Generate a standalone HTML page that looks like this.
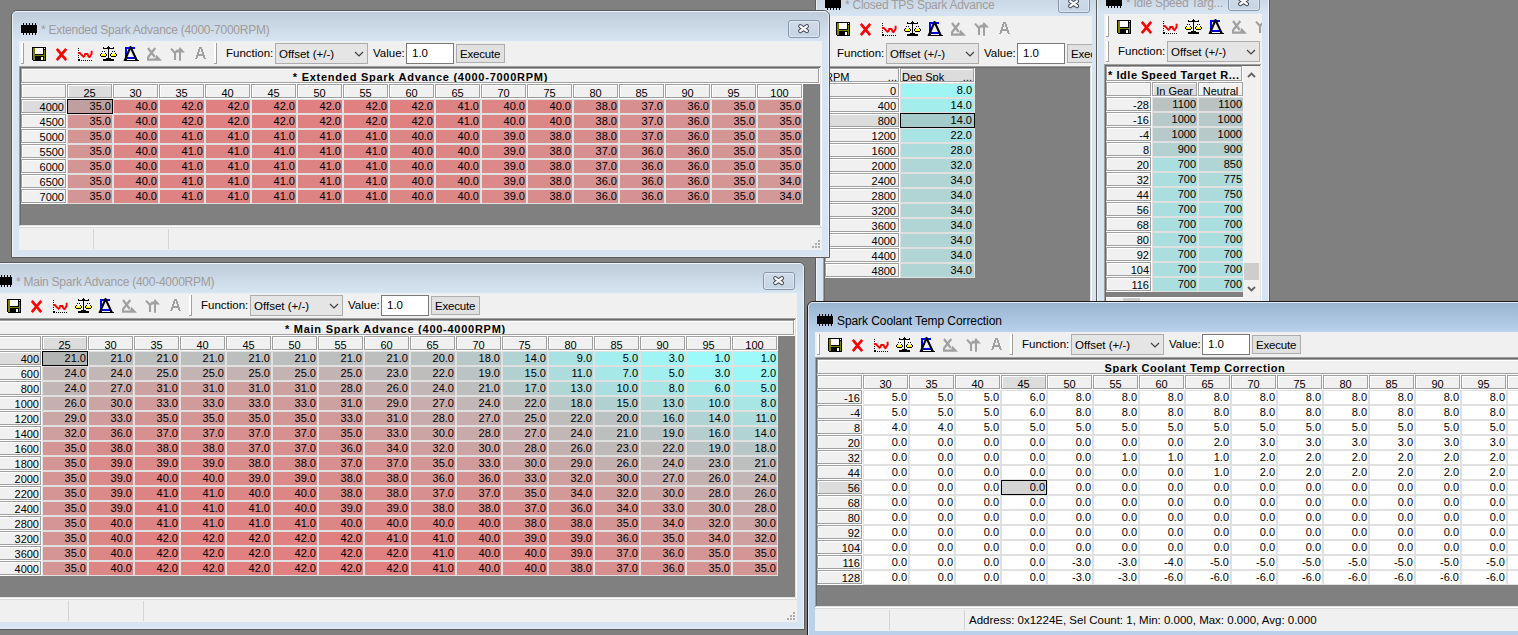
<!DOCTYPE html><html><head><meta charset="utf-8"><style>html,body{margin:0;padding:0}body{width:1518px;height:635px;overflow:hidden;position:relative;background:#808080;font-family:"Liberation Sans",sans-serif}</style></head><body>
<svg width="0" height="0" style="position:absolute">
<defs>
<symbol id="i-save" viewBox="0 0 16 16" shape-rendering="crispEdges">
 <rect x="1" y="1" width="14" height="14" fill="#000"/>
 <rect x="2" y="2" width="2" height="12" fill="#808000"/>
 <rect x="13" y="4" width="1" height="10" fill="#808000"/>
 <rect x="2" y="9" width="12" height="1" fill="#808000"/>
 <rect x="4" y="2" width="8" height="6" fill="#fff"/>
 <rect x="13" y="2" width="1" height="1" fill="#fff"/>
 <rect x="10" y="11" width="2" height="3" fill="#fff"/>
 <rect x="1" y="14" width="1" height="1" fill="#fff"/>
</symbol>
<symbol id="i-del" viewBox="0 0 16 16">
 <path d="M2.8 2.8 L12.2 14.2 M12.2 2.8 L2.8 14.2" stroke="#ff0000" stroke-width="2.6" fill="none"/>
</symbol>
<symbol id="i-graph" viewBox="0 0 16 16" shape-rendering="crispEdges">
 <g fill="#000">
 <rect x="1" y="2" width="1" height="1"/><rect x="1" y="4" width="1" height="1"/>
 <rect x="1" y="9" width="1" height="1"/><rect x="1" y="11" width="1" height="1"/>
 <rect x="1" y="13" width="2" height="2"/>
 <rect x="4" y="14" width="1" height="1"/><rect x="6" y="14" width="1" height="1"/>
 <rect x="8" y="14" width="1" height="1"/><rect x="10" y="14" width="1" height="1"/>
 <rect x="12" y="14" width="1" height="1"/><rect x="14" y="14" width="1" height="1"/>
 </g>
 <path d="M1 7 L2.8 7 L6.5 10.8 L7.6 10 L8.2 8 L10.5 8 L11.5 10.5 L12.6 11 L14.6 8 L14.6 4.8" stroke="#ff0000" stroke-width="1.9" fill="none" shape-rendering="auto"/>
</symbol>
<symbol id="i-scale" viewBox="0 0 17 16" shape-rendering="crispEdges">
 <g fill="#000">
 <rect x="8" y="0" width="1" height="14"/>
 <rect x="7" y="1" width="3" height="1"/>
 <rect x="3" y="2" width="11" height="1"/>
 <rect x="3" y="1" width="1" height="2"/><rect x="13" y="1" width="1" height="2"/>
 <rect x="2" y="5" width="1" height="1"/><rect x="4" y="5" width="1" height="1"/>
 <rect x="12" y="5" width="1" height="1"/><rect x="14" y="5" width="1" height="1"/>
 <rect x="1" y="7" width="1" height="1"/><rect x="5" y="7" width="1" height="1"/>
 <rect x="11" y="7" width="1" height="1"/><rect x="15" y="7" width="1" height="1"/>
 <rect x="0" y="8" width="1" height="2"/><rect x="6" y="8" width="1" height="2"/>
 <rect x="10" y="8" width="1" height="2"/><rect x="16" y="8" width="1" height="2"/>
 <rect x="1" y="10" width="5" height="1"/><rect x="11" y="10" width="5" height="1"/>
 <rect x="6" y="12" width="5" height="1"/>
 <rect x="3" y="13" width="11" height="2"/>
 </g>
 <rect x="1" y="8" width="5" height="2" fill="#ffff00"/>
 <rect x="11" y="8" width="5" height="2" fill="#ffff00"/>
 <rect x="3" y="8" width="1" height="1" fill="#fff"/>
 <rect x="13" y="8" width="1" height="1" fill="#fff"/>
</symbol>
<symbol id="i-delta" viewBox="0 0 16 16" shape-rendering="crispEdges">
 <rect x="2" y="1" width="10" height="2" fill="#0000ff"/>
 <rect x="2" y="1" width="2" height="11" fill="#0000ff"/>
 <rect x="4" y="11" width="8" height="2" fill="#0000ff"/>
 <path d="M2 13.8 L7.5 1 L13.5 13.8 Z" stroke="#000" stroke-width="2.1" fill="none" shape-rendering="auto" stroke-linejoin="miter"/>
 <rect x="1" y="14" width="15" height="1" fill="#000"/>
 <rect x="4" y="13" width="8" height="1" fill="#fff"/>
</symbol>
<symbol id="i-gx" viewBox="0 0 16 16">
 <path d="M2 2 L8.8 11 M9.3 2 L2.2 11" stroke="#a0a0a0" stroke-width="2.2" fill="none"/>
 <path d="M1 10.5 L3 10.5 L3 12.6 L9.2 12.6 L10.3 8.8 L16 14.8 L1 14.8 Z" fill="#a0a0a0"/>
</symbol>
<symbol id="i-gy" viewBox="0 0 16 16">
 <path d="M2 2.6 L6 7 L6 14 M6 7 L8.8 4" stroke="#a0a0a0" stroke-width="2.1" fill="none"/>
 <path d="M10.8 1 L16 6.6 L12 6.6 L12 14.8 L10 14.8 L10 6.6 L7.8 6.6 Z" fill="#a0a0a0"/>
</symbol>
<symbol id="i-ga" viewBox="0 0 16 16" shape-rendering="crispEdges">
 <g fill="#a0a0a0">
 <rect x="7" y="1" width="3" height="2"/>
 <rect x="6" y="3" width="2" height="3"/><rect x="9" y="3" width="2" height="3"/>
 <rect x="5" y="6" width="2" height="3"/><rect x="10" y="6" width="2" height="3"/>
 <rect x="5" y="8" width="7" height="2"/>
 <rect x="4" y="9" width="2" height="3"/><rect x="11" y="9" width="2" height="3"/>
 <rect x="3" y="12" width="2" height="1"/><rect x="12" y="12" width="2" height="1"/>
 </g>
</symbol>
<symbol id="i-chip" viewBox="0 0 16 12" shape-rendering="crispEdges">
 <rect x="0" y="2" width="16" height="8" fill="#000"/>
 <g fill="#000">
 <rect x="2" y="0" width="1" height="2"/><rect x="5" y="0" width="1" height="2"/><rect x="8" y="0" width="1" height="2"/><rect x="11" y="0" width="1" height="2"/><rect x="14" y="0" width="1" height="2"/>
 <rect x="2" y="10" width="1" height="2"/><rect x="5" y="10" width="1" height="2"/><rect x="8" y="10" width="1" height="2"/><rect x="11" y="10" width="1" height="2"/><rect x="14" y="10" width="1" height="2"/>
 </g>
</symbol>
</defs>
</svg>
<div style="position:absolute;left:0;top:0;width:1518px;height:635px;overflow:hidden"><div style="position:absolute;left:815px;top:-15px;width:285px;height:420px;box-sizing:border-box;border:1px solid #5a5a5a;border-radius:6px 6px 0 0;background:#d7e4f2;overflow:hidden"><div style="position:absolute;left:0px;top:0px;width:283px;height:418px;box-sizing:border-box;border:1px solid rgba(255,255,255,0.6);border-radius:5px 5px 0 0;background:linear-gradient(#bfcddb,#d7e4f2 29px,#d7e4f2 29px)"></div></div><svg style="position:absolute;left:825px;top:-2px" width="16" height="12"><use href="#i-chip"/></svg><div style="position:absolute;left:845px;top:-2px;white-space:nowrap;font:12px 'Liberation Sans', sans-serif;color:#a09c9c;line-height:14px;letter-spacing:-0.25px">* Closed TPS Spark Advance</div><div style="position:absolute;left:1058px;top:-5px;width:32px;height:18px;box-sizing:border-box;border:1px solid #8696ad;border-radius:3px;background:linear-gradient(#cfdbe7,#c6d4e3)"><div style="position:absolute;left:0px;top:0px;width:30px;height:16px;box-sizing:border-box;border:1px solid rgba(255,255,255,0.4);border-radius:2px"></div></div><svg style="position:absolute;left:1067px;top:-2px" width="14" height="12"><path d="M3.3 3.2 L9.9 8 M9.9 3.2 L3.3 8" stroke="#3c4450" stroke-width="4.2" stroke-linecap="round"/><path d="M3.3 3.2 L9.9 8 M9.9 3.2 L3.3 8" stroke="#f6f6f6" stroke-width="2.3" stroke-linecap="round"/></svg><div style="position:absolute;left:823px;top:16px;width:269px;height:381px;background:#f0f0f0"></div><div style="position:absolute;left:0;top:0;width:1518px;height:635px;clip-path:inset(16px 426px 238px 823px)"><div style="position:absolute;left:825px;top:18px;width:2px;height:20px;background:#fff"></div><div style="position:absolute;left:827px;top:18px;width:1px;height:21px;background:#a0a0a0"></div><div style="position:absolute;left:825px;top:38px;width:3px;height:1px;background:#a0a0a0"></div><svg style="position:absolute;left:835px;top:21px" width="16" height="16"><use href="#i-save"/></svg><svg style="position:absolute;left:858px;top:21px" width="16" height="16"><use href="#i-del"/></svg><svg style="position:absolute;left:881px;top:21px" width="16" height="16"><use href="#i-graph"/></svg><svg style="position:absolute;left:904px;top:21px" width="17" height="16"><use href="#i-scale"/></svg><svg style="position:absolute;left:927px;top:21px" width="16" height="16"><use href="#i-delta"/></svg><svg style="position:absolute;left:950px;top:21px" width="16" height="16"><use href="#i-gx"/></svg><svg style="position:absolute;left:973px;top:21px" width="16" height="16"><use href="#i-gy"/></svg><svg style="position:absolute;left:996px;top:21px" width="16" height="16"><use href="#i-ga"/></svg><div style="position:absolute;left:825px;top:43px;width:2px;height:20px;background:#fff"></div><div style="position:absolute;left:827px;top:43px;width:1px;height:21px;background:#a0a0a0"></div><div style="position:absolute;left:825px;top:63px;width:3px;height:1px;background:#a0a0a0"></div><div style="position:absolute;left:837px;top:46px;white-space:nowrap;font:11.5px 'Liberation Sans', sans-serif;color:#000;line-height:14px">Function:</div><div style="position:absolute;left:886px;top:43px;width:93px;height:21px;box-sizing:border-box;border:1px solid #acacac;background:#e5e5e5"></div><div style="position:absolute;left:890px;top:47px;white-space:nowrap;font:11.5px 'Liberation Sans', sans-serif;color:#000;line-height:14px">Offset (+/-)</div><svg style="position:absolute;left:965px;top:51px" width="10" height="6"><path d="M1 1 L5 5 L9 1" stroke="#404040" stroke-width="1.2" fill="none"/></svg><div style="position:absolute;left:984px;top:46px;white-space:nowrap;font:11.5px 'Liberation Sans', sans-serif;color:#000;line-height:14px">Value:</div><div style="position:absolute;left:1017px;top:43px;width:48px;height:21px;box-sizing:border-box;border:1px solid #7a7a7a;background:#fff"></div><div style="position:absolute;left:1023px;top:46px;white-space:nowrap;font:11.5px 'Liberation Sans', sans-serif;color:#000;line-height:14px">1.0</div><div style="position:absolute;left:1067px;top:44px;width:49px;height:19px;box-sizing:border-box;border:1px solid #adadad;background:#e1e1e1"></div><div style="position:absolute;left:1071px;top:47px;white-space:nowrap;font:11.5px 'Liberation Sans', sans-serif;color:#000;line-height:14px;letter-spacing:-0.2px">Execute</div><div style="position:absolute;left:823px;top:66px;width:269px;height:308px;background:#808080"></div><div style="position:absolute;left:823px;top:66px;width:269px;height:1px;background:#a0a0a0"></div><div style="position:absolute;left:823px;top:67px;width:268px;height:1px;background:#696969"></div><div style="position:absolute;left:823px;top:66px;width:1px;height:308px;background:#a0a0a0"></div><div style="position:absolute;left:824px;top:67px;width:1px;height:307px;background:#696969"></div><div style="position:absolute;left:824px;top:372px;width:268px;height:1px;background:#e3e3e3"></div><div style="position:absolute;left:823px;top:373px;width:269px;height:1px;background:#ffffff"></div><div style="position:absolute;left:1090px;top:67px;width:1px;height:307px;background:#e3e3e3"></div><div style="position:absolute;left:1091px;top:66px;width:1px;height:308px;background:#ffffff"></div><div style="position:absolute;left:825px;top:68px;width:150px;height:15px;background:#fff"></div><div style="position:absolute;left:825px;top:68px;width:74px;height:14px;box-sizing:border-box;border:1px solid #a0a0a0;background:#f0f0f0;overflow:hidden"><div style="position:absolute;left:0px;top:0px;width:72px;height:12px;box-sizing:border-box;border-left:1px solid #fff;border-top:1px solid #fff"></div><div style="position:absolute;left:-1px;top:1px;font:11px 'Liberation Sans', sans-serif;line-height:15px">RPM</div><div style="position:absolute;right:1px;top:1px;font:11px 'Liberation Sans', sans-serif;line-height:15px">...</div></div><div style="position:absolute;left:900px;top:68px;width:74px;height:14px;box-sizing:border-box;border:1px solid #a0a0a0;background:#dcdcdc;overflow:hidden"><div style="position:absolute;left:0px;top:0px;width:72px;height:12px;box-sizing:border-box;border-left:1px solid #fff;border-top:1px solid #fff"></div><div style="position:absolute;left:1px;top:1px;font:11px 'Liberation Sans', sans-serif;line-height:15px">Deg Spk</div><div style="position:absolute;right:1px;top:1px;font:11px 'Liberation Sans', sans-serif;line-height:15px">...</div></div><div style="position:absolute;left:825px;top:83px;width:75px;height:195px;background:#fff"></div><div style="position:absolute;left:900px;top:83px;width:75px;height:195px;background:#e0e0e0"></div><div style="position:absolute;left:825px;top:83px;width:74px;height:14px;box-sizing:border-box;border:1px solid #a0a0a0;background:#f0f0f0;overflow:hidden"><div style="position:absolute;left:0px;top:0px;width:72px;height:12px;box-sizing:border-box;border-left:1px solid #fff;border-top:1px solid #fff"></div><div style="position:absolute;left:0;right:2px;top:0;text-align:right;font:11px 'Liberation Sans', sans-serif;line-height:15px;color:#000">0</div></div><div style="position:absolute;left:901px;top:84px;width:73px;height:13px;background:#9ff4f4"><div style="position:absolute;left:0;right:2px;top:0;text-align:right;font:11px 'Liberation Sans', sans-serif;line-height:13px;color:#000">8.0</div></div><div style="position:absolute;left:825px;top:98px;width:74px;height:14px;box-sizing:border-box;border:1px solid #a0a0a0;background:#f0f0f0;overflow:hidden"><div style="position:absolute;left:0px;top:0px;width:72px;height:12px;box-sizing:border-box;border-left:1px solid #fff;border-top:1px solid #fff"></div><div style="position:absolute;left:0;right:2px;top:0;text-align:right;font:11px 'Liberation Sans', sans-serif;line-height:15px;color:#000">400</div></div><div style="position:absolute;left:901px;top:99px;width:73px;height:13px;background:#a3eded"><div style="position:absolute;left:0;right:2px;top:0;text-align:right;font:11px 'Liberation Sans', sans-serif;line-height:13px;color:#000">14.0</div></div><div style="position:absolute;left:825px;top:113px;width:74px;height:14px;box-sizing:border-box;border:1px solid #a0a0a0;background:#dcdcdc;overflow:hidden"><div style="position:absolute;left:0px;top:0px;width:72px;height:12px;box-sizing:border-box;border-left:1px solid #fff;border-top:1px solid #fff"></div><div style="position:absolute;left:0;right:2px;top:0;text-align:right;font:11px 'Liberation Sans', sans-serif;line-height:15px;color:#000">800</div></div><div style="position:absolute;left:900px;top:113px;width:75px;height:15px;box-sizing:border-box;border:1px solid #000;background:#a6cbcb"><div style="position:absolute;left:0;right:2px;top:0;text-align:right;font:11px 'Liberation Sans', sans-serif;line-height:13px;color:#000">14.0</div></div><div style="position:absolute;left:825px;top:128px;width:74px;height:14px;box-sizing:border-box;border:1px solid #a0a0a0;background:#f0f0f0;overflow:hidden"><div style="position:absolute;left:0px;top:0px;width:72px;height:12px;box-sizing:border-box;border-left:1px solid #fff;border-top:1px solid #fff"></div><div style="position:absolute;left:0;right:2px;top:0;text-align:right;font:11px 'Liberation Sans', sans-serif;line-height:15px;color:#000">1200</div></div><div style="position:absolute;left:901px;top:129px;width:73px;height:13px;background:#a9e3e3"><div style="position:absolute;left:0;right:2px;top:0;text-align:right;font:11px 'Liberation Sans', sans-serif;line-height:13px;color:#000">22.0</div></div><div style="position:absolute;left:825px;top:143px;width:74px;height:14px;box-sizing:border-box;border:1px solid #a0a0a0;background:#f0f0f0;overflow:hidden"><div style="position:absolute;left:0px;top:0px;width:72px;height:12px;box-sizing:border-box;border-left:1px solid #fff;border-top:1px solid #fff"></div><div style="position:absolute;left:0;right:2px;top:0;text-align:right;font:11px 'Liberation Sans', sans-serif;line-height:15px;color:#000">1600</div></div><div style="position:absolute;left:901px;top:144px;width:73px;height:13px;background:#addcdc"><div style="position:absolute;left:0;right:2px;top:0;text-align:right;font:11px 'Liberation Sans', sans-serif;line-height:13px;color:#000">28.0</div></div><div style="position:absolute;left:825px;top:158px;width:74px;height:14px;box-sizing:border-box;border:1px solid #a0a0a0;background:#f0f0f0;overflow:hidden"><div style="position:absolute;left:0px;top:0px;width:72px;height:12px;box-sizing:border-box;border-left:1px solid #fff;border-top:1px solid #fff"></div><div style="position:absolute;left:0;right:2px;top:0;text-align:right;font:11px 'Liberation Sans', sans-serif;line-height:15px;color:#000">2000</div></div><div style="position:absolute;left:901px;top:159px;width:73px;height:13px;background:#afd7d7"><div style="position:absolute;left:0;right:2px;top:0;text-align:right;font:11px 'Liberation Sans', sans-serif;line-height:13px;color:#000">32.0</div></div><div style="position:absolute;left:825px;top:173px;width:74px;height:14px;box-sizing:border-box;border:1px solid #a0a0a0;background:#f0f0f0;overflow:hidden"><div style="position:absolute;left:0px;top:0px;width:72px;height:12px;box-sizing:border-box;border-left:1px solid #fff;border-top:1px solid #fff"></div><div style="position:absolute;left:0;right:2px;top:0;text-align:right;font:11px 'Liberation Sans', sans-serif;line-height:15px;color:#000">2400</div></div><div style="position:absolute;left:901px;top:174px;width:73px;height:13px;background:#b1d5d5"><div style="position:absolute;left:0;right:2px;top:0;text-align:right;font:11px 'Liberation Sans', sans-serif;line-height:13px;color:#000">34.0</div></div><div style="position:absolute;left:825px;top:188px;width:74px;height:14px;box-sizing:border-box;border:1px solid #a0a0a0;background:#f0f0f0;overflow:hidden"><div style="position:absolute;left:0px;top:0px;width:72px;height:12px;box-sizing:border-box;border-left:1px solid #fff;border-top:1px solid #fff"></div><div style="position:absolute;left:0;right:2px;top:0;text-align:right;font:11px 'Liberation Sans', sans-serif;line-height:15px;color:#000">2800</div></div><div style="position:absolute;left:901px;top:189px;width:73px;height:13px;background:#b1d5d5"><div style="position:absolute;left:0;right:2px;top:0;text-align:right;font:11px 'Liberation Sans', sans-serif;line-height:13px;color:#000">34.0</div></div><div style="position:absolute;left:825px;top:203px;width:74px;height:14px;box-sizing:border-box;border:1px solid #a0a0a0;background:#f0f0f0;overflow:hidden"><div style="position:absolute;left:0px;top:0px;width:72px;height:12px;box-sizing:border-box;border-left:1px solid #fff;border-top:1px solid #fff"></div><div style="position:absolute;left:0;right:2px;top:0;text-align:right;font:11px 'Liberation Sans', sans-serif;line-height:15px;color:#000">3200</div></div><div style="position:absolute;left:901px;top:204px;width:73px;height:13px;background:#b1d5d5"><div style="position:absolute;left:0;right:2px;top:0;text-align:right;font:11px 'Liberation Sans', sans-serif;line-height:13px;color:#000">34.0</div></div><div style="position:absolute;left:825px;top:218px;width:74px;height:14px;box-sizing:border-box;border:1px solid #a0a0a0;background:#f0f0f0;overflow:hidden"><div style="position:absolute;left:0px;top:0px;width:72px;height:12px;box-sizing:border-box;border-left:1px solid #fff;border-top:1px solid #fff"></div><div style="position:absolute;left:0;right:2px;top:0;text-align:right;font:11px 'Liberation Sans', sans-serif;line-height:15px;color:#000">3600</div></div><div style="position:absolute;left:901px;top:219px;width:73px;height:13px;background:#b1d5d5"><div style="position:absolute;left:0;right:2px;top:0;text-align:right;font:11px 'Liberation Sans', sans-serif;line-height:13px;color:#000">34.0</div></div><div style="position:absolute;left:825px;top:233px;width:74px;height:14px;box-sizing:border-box;border:1px solid #a0a0a0;background:#f0f0f0;overflow:hidden"><div style="position:absolute;left:0px;top:0px;width:72px;height:12px;box-sizing:border-box;border-left:1px solid #fff;border-top:1px solid #fff"></div><div style="position:absolute;left:0;right:2px;top:0;text-align:right;font:11px 'Liberation Sans', sans-serif;line-height:15px;color:#000">4000</div></div><div style="position:absolute;left:901px;top:234px;width:73px;height:13px;background:#b1d5d5"><div style="position:absolute;left:0;right:2px;top:0;text-align:right;font:11px 'Liberation Sans', sans-serif;line-height:13px;color:#000">34.0</div></div><div style="position:absolute;left:825px;top:248px;width:74px;height:14px;box-sizing:border-box;border:1px solid #a0a0a0;background:#f0f0f0;overflow:hidden"><div style="position:absolute;left:0px;top:0px;width:72px;height:12px;box-sizing:border-box;border-left:1px solid #fff;border-top:1px solid #fff"></div><div style="position:absolute;left:0;right:2px;top:0;text-align:right;font:11px 'Liberation Sans', sans-serif;line-height:15px;color:#000">4400</div></div><div style="position:absolute;left:901px;top:249px;width:73px;height:13px;background:#b1d5d5"><div style="position:absolute;left:0;right:2px;top:0;text-align:right;font:11px 'Liberation Sans', sans-serif;line-height:13px;color:#000">34.0</div></div><div style="position:absolute;left:825px;top:263px;width:74px;height:14px;box-sizing:border-box;border:1px solid #a0a0a0;background:#f0f0f0;overflow:hidden"><div style="position:absolute;left:0px;top:0px;width:72px;height:12px;box-sizing:border-box;border-left:1px solid #fff;border-top:1px solid #fff"></div><div style="position:absolute;left:0;right:2px;top:0;text-align:right;font:11px 'Liberation Sans', sans-serif;line-height:15px;color:#000">4800</div></div><div style="position:absolute;left:901px;top:264px;width:73px;height:13px;background:#b1d5d5"><div style="position:absolute;left:0;right:2px;top:0;text-align:right;font:11px 'Liberation Sans', sans-serif;line-height:13px;color:#000">34.0</div></div></div></div><div style="position:absolute;left:0;top:0;width:1518px;height:635px;overflow:hidden"><div style="position:absolute;left:1096px;top:-17px;width:174px;height:420px;box-sizing:border-box;border:1px solid #5a5a5a;border-radius:6px 6px 0 0;background:#d7e4f2;overflow:hidden"><div style="position:absolute;left:0px;top:0px;width:172px;height:418px;box-sizing:border-box;border:1px solid rgba(255,255,255,0.6);border-radius:5px 5px 0 0;background:linear-gradient(#bfcddb,#d7e4f2 29px,#d7e4f2 29px)"></div></div><svg style="position:absolute;left:1106px;top:-4px" width="16" height="12"><use href="#i-chip"/></svg><div style="position:absolute;left:1126px;top:-4px;white-space:nowrap;font:12px 'Liberation Sans', sans-serif;color:#a09c9c;line-height:14px;letter-spacing:-0.25px">* Idle Speed Targ...</div><div style="position:absolute;left:1228px;top:-7px;width:32px;height:18px;box-sizing:border-box;border:1px solid #8696ad;border-radius:3px;background:linear-gradient(#cfdbe7,#c6d4e3)"><div style="position:absolute;left:0px;top:0px;width:30px;height:16px;box-sizing:border-box;border:1px solid rgba(255,255,255,0.4);border-radius:2px"></div></div><svg style="position:absolute;left:1237px;top:-4px" width="14" height="12"><path d="M3.3 3.2 L9.9 8 M9.9 3.2 L3.3 8" stroke="#3c4450" stroke-width="4.2" stroke-linecap="round"/><path d="M3.3 3.2 L9.9 8 M9.9 3.2 L3.3 8" stroke="#f6f6f6" stroke-width="2.3" stroke-linecap="round"/></svg><div style="position:absolute;left:1104px;top:14px;width:158px;height:381px;background:#f0f0f0"></div><div style="position:absolute;left:0;top:0;width:1518px;height:635px;clip-path:inset(14px 256px 240px 1104px)"><div style="position:absolute;left:1106px;top:16px;width:2px;height:20px;background:#fff"></div><div style="position:absolute;left:1108px;top:16px;width:1px;height:21px;background:#a0a0a0"></div><div style="position:absolute;left:1106px;top:36px;width:3px;height:1px;background:#a0a0a0"></div><svg style="position:absolute;left:1116px;top:19px" width="16" height="16"><use href="#i-save"/></svg><svg style="position:absolute;left:1139px;top:19px" width="16" height="16"><use href="#i-del"/></svg><svg style="position:absolute;left:1162px;top:19px" width="16" height="16"><use href="#i-graph"/></svg><svg style="position:absolute;left:1185px;top:19px" width="17" height="16"><use href="#i-scale"/></svg><svg style="position:absolute;left:1208px;top:19px" width="16" height="16"><use href="#i-delta"/></svg><svg style="position:absolute;left:1231px;top:19px" width="16" height="16"><use href="#i-gx"/></svg><svg style="position:absolute;left:1254px;top:19px" width="16" height="16"><use href="#i-gy"/></svg><svg style="position:absolute;left:1277px;top:19px" width="16" height="16"><use href="#i-ga"/></svg><div style="position:absolute;left:1106px;top:41px;width:2px;height:20px;background:#fff"></div><div style="position:absolute;left:1108px;top:41px;width:1px;height:21px;background:#a0a0a0"></div><div style="position:absolute;left:1106px;top:61px;width:3px;height:1px;background:#a0a0a0"></div><div style="position:absolute;left:1118px;top:44px;white-space:nowrap;font:11.5px 'Liberation Sans', sans-serif;color:#000;line-height:14px">Function:</div><div style="position:absolute;left:1167px;top:41px;width:93px;height:21px;box-sizing:border-box;border:1px solid #acacac;background:#e5e5e5"></div><div style="position:absolute;left:1171px;top:45px;white-space:nowrap;font:11.5px 'Liberation Sans', sans-serif;color:#000;line-height:14px">Offset (+/-)</div><svg style="position:absolute;left:1246px;top:49px" width="10" height="6"><path d="M1 1 L5 5 L9 1" stroke="#404040" stroke-width="1.2" fill="none"/></svg><div style="position:absolute;left:1265px;top:44px;white-space:nowrap;font:11.5px 'Liberation Sans', sans-serif;color:#000;line-height:14px">Value:</div><div style="position:absolute;left:1298px;top:41px;width:48px;height:21px;box-sizing:border-box;border:1px solid #7a7a7a;background:#fff"></div><div style="position:absolute;left:1304px;top:44px;white-space:nowrap;font:11.5px 'Liberation Sans', sans-serif;color:#000;line-height:14px">1.0</div><div style="position:absolute;left:1348px;top:42px;width:49px;height:19px;box-sizing:border-box;border:1px solid #adadad;background:#e1e1e1"></div><div style="position:absolute;left:1352px;top:45px;white-space:nowrap;font:11.5px 'Liberation Sans', sans-serif;color:#000;line-height:14px;letter-spacing:-0.2px">Execute</div><div style="position:absolute;left:1104px;top:64px;width:158px;height:308px;background:#808080"></div><div style="position:absolute;left:1104px;top:64px;width:158px;height:1px;background:#a0a0a0"></div><div style="position:absolute;left:1104px;top:65px;width:157px;height:1px;background:#696969"></div><div style="position:absolute;left:1104px;top:64px;width:1px;height:308px;background:#a0a0a0"></div><div style="position:absolute;left:1105px;top:65px;width:1px;height:307px;background:#696969"></div><div style="position:absolute;left:1105px;top:370px;width:157px;height:1px;background:#e3e3e3"></div><div style="position:absolute;left:1104px;top:371px;width:158px;height:1px;background:#ffffff"></div><div style="position:absolute;left:1260px;top:65px;width:1px;height:307px;background:#e3e3e3"></div><div style="position:absolute;left:1261px;top:64px;width:1px;height:308px;background:#ffffff"></div><div style="position:absolute;left:1106px;top:66px;width:137px;height:16px;background:#fff"></div><div style="position:absolute;left:1106px;top:66px;width:136px;height:15px;box-sizing:border-box;border:1px solid #a0a0a0;background:#f0f0f0;overflow:hidden"><div style="position:absolute;left:0px;top:0px;width:134px;height:13px;box-sizing:border-box;border-left:1px solid #fff;border-top:1px solid #fff"></div><div style="position:absolute;left:1px;right:0;top:0;text-align:left;overflow:hidden;font:bold 11px 'Liberation Sans', sans-serif;line-height:15px;padding-top:1px;letter-spacing:0.55px;color:#000;white-space:nowrap">* Idle Speed Target R...</div></div><div style="position:absolute;left:1106px;top:82px;width:138px;height:15px;background:#fff"></div><div style="position:absolute;left:1106px;top:82px;width:45px;height:14px;box-sizing:border-box;border:1px solid #a0a0a0;background:#f0f0f0;overflow:hidden"><div style="position:absolute;left:0px;top:0px;width:43px;height:12px;box-sizing:border-box;border-left:1px solid #fff;border-top:1px solid #fff"></div></div><div style="position:absolute;left:1152px;top:82px;width:45px;height:14px;box-sizing:border-box;border:1px solid #a0a0a0;background:#dcdcdc;overflow:hidden"><div style="position:absolute;left:0px;top:0px;width:43px;height:12px;box-sizing:border-box;border-left:1px solid #fff;border-top:1px solid #fff"></div><div style="position:absolute;left:0;right:0;text-align:center;top:1px;font:11px 'Liberation Sans', sans-serif;line-height:15px">In Gear</div></div><div style="position:absolute;left:1198px;top:82px;width:45px;height:14px;box-sizing:border-box;border:1px solid #a0a0a0;background:#f0f0f0;overflow:hidden"><div style="position:absolute;left:0px;top:0px;width:43px;height:12px;box-sizing:border-box;border-left:1px solid #fff;border-top:1px solid #fff"></div><div style="position:absolute;left:0;right:0;top:1px;text-align:center;font:11px 'Liberation Sans', sans-serif;line-height:15px;color:#000">Neutral</div></div><div style="position:absolute;left:1106px;top:97px;width:46px;height:195px;background:#fff"></div><div style="position:absolute;left:1152px;top:97px;width:92px;height:195px;background:#e0e0e0"></div><div style="position:absolute;left:1106px;top:97px;width:45px;height:14px;box-sizing:border-box;border:1px solid #a0a0a0;background:#f0f0f0;overflow:hidden"><div style="position:absolute;left:0px;top:0px;width:43px;height:12px;box-sizing:border-box;border-left:1px solid #fff;border-top:1px solid #fff"></div><div style="position:absolute;left:0;right:1px;top:0;text-align:right;font:11px 'Liberation Sans', sans-serif;line-height:15px;color:#000">-28</div></div><div style="position:absolute;left:1153px;top:98px;width:44px;height:13px;background:#bbc2c2"><div style="position:absolute;left:0;right:1px;top:0;text-align:right;font:11px 'Liberation Sans', sans-serif;line-height:13px;color:#000">1100</div></div><div style="position:absolute;left:1199px;top:98px;width:44px;height:13px;background:#bbc2c2"><div style="position:absolute;left:0;right:1px;top:0;text-align:right;font:11px 'Liberation Sans', sans-serif;line-height:13px;color:#000">1100</div></div><div style="position:absolute;left:1106px;top:112px;width:45px;height:14px;box-sizing:border-box;border:1px solid #a0a0a0;background:#f0f0f0;overflow:hidden"><div style="position:absolute;left:0px;top:0px;width:43px;height:12px;box-sizing:border-box;border-left:1px solid #fff;border-top:1px solid #fff"></div><div style="position:absolute;left:0;right:1px;top:0;text-align:right;font:11px 'Liberation Sans', sans-serif;line-height:15px;color:#000">-16</div></div><div style="position:absolute;left:1153px;top:113px;width:44px;height:13px;background:#b7c9c9"><div style="position:absolute;left:0;right:1px;top:0;text-align:right;font:11px 'Liberation Sans', sans-serif;line-height:13px;color:#000">1000</div></div><div style="position:absolute;left:1199px;top:113px;width:44px;height:13px;background:#b7c9c9"><div style="position:absolute;left:0;right:1px;top:0;text-align:right;font:11px 'Liberation Sans', sans-serif;line-height:13px;color:#000">1000</div></div><div style="position:absolute;left:1106px;top:127px;width:45px;height:14px;box-sizing:border-box;border:1px solid #a0a0a0;background:#f0f0f0;overflow:hidden"><div style="position:absolute;left:0px;top:0px;width:43px;height:12px;box-sizing:border-box;border-left:1px solid #fff;border-top:1px solid #fff"></div><div style="position:absolute;left:0;right:1px;top:0;text-align:right;font:11px 'Liberation Sans', sans-serif;line-height:15px;color:#000">-4</div></div><div style="position:absolute;left:1153px;top:128px;width:44px;height:13px;background:#b7c9c9"><div style="position:absolute;left:0;right:1px;top:0;text-align:right;font:11px 'Liberation Sans', sans-serif;line-height:13px;color:#000">1000</div></div><div style="position:absolute;left:1199px;top:128px;width:44px;height:13px;background:#b7c9c9"><div style="position:absolute;left:0;right:1px;top:0;text-align:right;font:11px 'Liberation Sans', sans-serif;line-height:13px;color:#000">1000</div></div><div style="position:absolute;left:1106px;top:142px;width:45px;height:14px;box-sizing:border-box;border:1px solid #a0a0a0;background:#f0f0f0;overflow:hidden"><div style="position:absolute;left:0px;top:0px;width:43px;height:12px;box-sizing:border-box;border-left:1px solid #fff;border-top:1px solid #fff"></div><div style="position:absolute;left:0;right:1px;top:0;text-align:right;font:11px 'Liberation Sans', sans-serif;line-height:15px;color:#000">8</div></div><div style="position:absolute;left:1153px;top:143px;width:44px;height:13px;background:#b3d1d1"><div style="position:absolute;left:0;right:1px;top:0;text-align:right;font:11px 'Liberation Sans', sans-serif;line-height:13px;color:#000">900</div></div><div style="position:absolute;left:1199px;top:143px;width:44px;height:13px;background:#b3d1d1"><div style="position:absolute;left:0;right:1px;top:0;text-align:right;font:11px 'Liberation Sans', sans-serif;line-height:13px;color:#000">900</div></div><div style="position:absolute;left:1106px;top:157px;width:45px;height:14px;box-sizing:border-box;border:1px solid #a0a0a0;background:#f0f0f0;overflow:hidden"><div style="position:absolute;left:0px;top:0px;width:43px;height:12px;box-sizing:border-box;border-left:1px solid #fff;border-top:1px solid #fff"></div><div style="position:absolute;left:0;right:1px;top:0;text-align:right;font:11px 'Liberation Sans', sans-serif;line-height:15px;color:#000">20</div></div><div style="position:absolute;left:1153px;top:158px;width:44px;height:13px;background:#abdfdf"><div style="position:absolute;left:0;right:1px;top:0;text-align:right;font:11px 'Liberation Sans', sans-serif;line-height:13px;color:#000">700</div></div><div style="position:absolute;left:1199px;top:158px;width:44px;height:13px;background:#b1d4d4"><div style="position:absolute;left:0;right:1px;top:0;text-align:right;font:11px 'Liberation Sans', sans-serif;line-height:13px;color:#000">850</div></div><div style="position:absolute;left:1106px;top:172px;width:45px;height:14px;box-sizing:border-box;border:1px solid #a0a0a0;background:#f0f0f0;overflow:hidden"><div style="position:absolute;left:0px;top:0px;width:43px;height:12px;box-sizing:border-box;border-left:1px solid #fff;border-top:1px solid #fff"></div><div style="position:absolute;left:0;right:1px;top:0;text-align:right;font:11px 'Liberation Sans', sans-serif;line-height:15px;color:#000">32</div></div><div style="position:absolute;left:1153px;top:173px;width:44px;height:13px;background:#abdfdf"><div style="position:absolute;left:0;right:1px;top:0;text-align:right;font:11px 'Liberation Sans', sans-serif;line-height:13px;color:#000">700</div></div><div style="position:absolute;left:1199px;top:173px;width:44px;height:13px;background:#aedada"><div style="position:absolute;left:0;right:1px;top:0;text-align:right;font:11px 'Liberation Sans', sans-serif;line-height:13px;color:#000">775</div></div><div style="position:absolute;left:1106px;top:187px;width:45px;height:14px;box-sizing:border-box;border:1px solid #a0a0a0;background:#f0f0f0;overflow:hidden"><div style="position:absolute;left:0px;top:0px;width:43px;height:12px;box-sizing:border-box;border-left:1px solid #fff;border-top:1px solid #fff"></div><div style="position:absolute;left:0;right:1px;top:0;text-align:right;font:11px 'Liberation Sans', sans-serif;line-height:15px;color:#000">44</div></div><div style="position:absolute;left:1153px;top:188px;width:44px;height:13px;background:#abdfdf"><div style="position:absolute;left:0;right:1px;top:0;text-align:right;font:11px 'Liberation Sans', sans-serif;line-height:13px;color:#000">700</div></div><div style="position:absolute;left:1199px;top:188px;width:44px;height:13px;background:#addbdb"><div style="position:absolute;left:0;right:1px;top:0;text-align:right;font:11px 'Liberation Sans', sans-serif;line-height:13px;color:#000">750</div></div><div style="position:absolute;left:1106px;top:202px;width:45px;height:14px;box-sizing:border-box;border:1px solid #a0a0a0;background:#f0f0f0;overflow:hidden"><div style="position:absolute;left:0px;top:0px;width:43px;height:12px;box-sizing:border-box;border-left:1px solid #fff;border-top:1px solid #fff"></div><div style="position:absolute;left:0;right:1px;top:0;text-align:right;font:11px 'Liberation Sans', sans-serif;line-height:15px;color:#000">56</div></div><div style="position:absolute;left:1153px;top:203px;width:44px;height:13px;background:#abdfdf"><div style="position:absolute;left:0;right:1px;top:0;text-align:right;font:11px 'Liberation Sans', sans-serif;line-height:13px;color:#000">700</div></div><div style="position:absolute;left:1199px;top:203px;width:44px;height:13px;background:#abdfdf"><div style="position:absolute;left:0;right:1px;top:0;text-align:right;font:11px 'Liberation Sans', sans-serif;line-height:13px;color:#000">700</div></div><div style="position:absolute;left:1106px;top:217px;width:45px;height:14px;box-sizing:border-box;border:1px solid #a0a0a0;background:#f0f0f0;overflow:hidden"><div style="position:absolute;left:0px;top:0px;width:43px;height:12px;box-sizing:border-box;border-left:1px solid #fff;border-top:1px solid #fff"></div><div style="position:absolute;left:0;right:1px;top:0;text-align:right;font:11px 'Liberation Sans', sans-serif;line-height:15px;color:#000">68</div></div><div style="position:absolute;left:1153px;top:218px;width:44px;height:13px;background:#abdfdf"><div style="position:absolute;left:0;right:1px;top:0;text-align:right;font:11px 'Liberation Sans', sans-serif;line-height:13px;color:#000">700</div></div><div style="position:absolute;left:1199px;top:218px;width:44px;height:13px;background:#abdfdf"><div style="position:absolute;left:0;right:1px;top:0;text-align:right;font:11px 'Liberation Sans', sans-serif;line-height:13px;color:#000">700</div></div><div style="position:absolute;left:1106px;top:232px;width:45px;height:14px;box-sizing:border-box;border:1px solid #a0a0a0;background:#f0f0f0;overflow:hidden"><div style="position:absolute;left:0px;top:0px;width:43px;height:12px;box-sizing:border-box;border-left:1px solid #fff;border-top:1px solid #fff"></div><div style="position:absolute;left:0;right:1px;top:0;text-align:right;font:11px 'Liberation Sans', sans-serif;line-height:15px;color:#000">80</div></div><div style="position:absolute;left:1153px;top:233px;width:44px;height:13px;background:#abdfdf"><div style="position:absolute;left:0;right:1px;top:0;text-align:right;font:11px 'Liberation Sans', sans-serif;line-height:13px;color:#000">700</div></div><div style="position:absolute;left:1199px;top:233px;width:44px;height:13px;background:#abdfdf"><div style="position:absolute;left:0;right:1px;top:0;text-align:right;font:11px 'Liberation Sans', sans-serif;line-height:13px;color:#000">700</div></div><div style="position:absolute;left:1106px;top:247px;width:45px;height:14px;box-sizing:border-box;border:1px solid #a0a0a0;background:#f0f0f0;overflow:hidden"><div style="position:absolute;left:0px;top:0px;width:43px;height:12px;box-sizing:border-box;border-left:1px solid #fff;border-top:1px solid #fff"></div><div style="position:absolute;left:0;right:1px;top:0;text-align:right;font:11px 'Liberation Sans', sans-serif;line-height:15px;color:#000">92</div></div><div style="position:absolute;left:1153px;top:248px;width:44px;height:13px;background:#abdfdf"><div style="position:absolute;left:0;right:1px;top:0;text-align:right;font:11px 'Liberation Sans', sans-serif;line-height:13px;color:#000">700</div></div><div style="position:absolute;left:1199px;top:248px;width:44px;height:13px;background:#abdfdf"><div style="position:absolute;left:0;right:1px;top:0;text-align:right;font:11px 'Liberation Sans', sans-serif;line-height:13px;color:#000">700</div></div><div style="position:absolute;left:1106px;top:262px;width:45px;height:14px;box-sizing:border-box;border:1px solid #a0a0a0;background:#f0f0f0;overflow:hidden"><div style="position:absolute;left:0px;top:0px;width:43px;height:12px;box-sizing:border-box;border-left:1px solid #fff;border-top:1px solid #fff"></div><div style="position:absolute;left:0;right:1px;top:0;text-align:right;font:11px 'Liberation Sans', sans-serif;line-height:15px;color:#000">104</div></div><div style="position:absolute;left:1153px;top:263px;width:44px;height:13px;background:#abdfdf"><div style="position:absolute;left:0;right:1px;top:0;text-align:right;font:11px 'Liberation Sans', sans-serif;line-height:13px;color:#000">700</div></div><div style="position:absolute;left:1199px;top:263px;width:44px;height:13px;background:#abdfdf"><div style="position:absolute;left:0;right:1px;top:0;text-align:right;font:11px 'Liberation Sans', sans-serif;line-height:13px;color:#000">700</div></div><div style="position:absolute;left:1106px;top:277px;width:45px;height:14px;box-sizing:border-box;border:1px solid #a0a0a0;background:#f0f0f0;overflow:hidden"><div style="position:absolute;left:0px;top:0px;width:43px;height:12px;box-sizing:border-box;border-left:1px solid #fff;border-top:1px solid #fff"></div><div style="position:absolute;left:0;right:1px;top:0;text-align:right;font:11px 'Liberation Sans', sans-serif;line-height:15px;color:#000">116</div></div><div style="position:absolute;left:1153px;top:278px;width:44px;height:13px;background:#abdfdf"><div style="position:absolute;left:0;right:1px;top:0;text-align:right;font:11px 'Liberation Sans', sans-serif;line-height:13px;color:#000">700</div></div><div style="position:absolute;left:1199px;top:278px;width:44px;height:13px;background:#abdfdf"><div style="position:absolute;left:0;right:1px;top:0;text-align:right;font:11px 'Liberation Sans', sans-serif;line-height:13px;color:#000">700</div></div><div style="position:absolute;left:1243px;top:66px;width:17px;height:250px;background:#f0f0f0"></div><svg style="position:absolute;left:1247px;top:72px" width="9" height="6"><path d="M1 5 L4.5 1.5 L8 5" stroke="#606060" stroke-width="1.8" fill="none"/></svg><div style="position:absolute;left:1244px;top:263px;width:15px;height:17px;background:#cdcdcd"></div><svg style="position:absolute;left:1247px;top:286px" width="9" height="6"><path d="M1 1 L4.5 4.5 L8 1" stroke="#606060" stroke-width="1.8" fill="none"/></svg><div style="position:absolute;left:1106px;top:297px;width:137px;height:20px;background:#f0f0f0"></div><div style="position:absolute;left:1106px;top:297px;width:137px;height:1px;background:#fff"></div><div style="position:absolute;left:1123px;top:298px;width:17px;height:15px;background:#cdcdcd"></div></div></div><div style="position:absolute;left:0;top:0;width:1518px;height:635px;overflow:hidden"><div style="position:absolute;left:11px;top:10px;width:819px;height:248px;box-sizing:border-box;border:1px solid #5a5a5a;border-radius:6px 6px 0 0;background:#d7e4f2;overflow:hidden"><div style="position:absolute;left:0px;top:0px;width:817px;height:246px;box-sizing:border-box;border:1px solid rgba(255,255,255,0.6);border-radius:5px 5px 0 0;background:linear-gradient(#bfcddb,#d7e4f2 29px,#d7e4f2 29px)"></div></div><svg style="position:absolute;left:21px;top:23px" width="16" height="12"><use href="#i-chip"/></svg><div style="position:absolute;left:41px;top:23px;white-space:nowrap;font:12px 'Liberation Sans', sans-serif;color:#a09c9c;line-height:14px;letter-spacing:-0.25px">* Extended Spark Advance (4000-7000RPM)</div><div style="position:absolute;left:788px;top:20px;width:32px;height:18px;box-sizing:border-box;border:1px solid #8696ad;border-radius:3px;background:linear-gradient(#cfdbe7,#c6d4e3)"><div style="position:absolute;left:0px;top:0px;width:30px;height:16px;box-sizing:border-box;border:1px solid rgba(255,255,255,0.4);border-radius:2px"></div></div><svg style="position:absolute;left:797px;top:23px" width="14" height="12"><path d="M3.3 3.2 L9.9 8 M9.9 3.2 L3.3 8" stroke="#3c4450" stroke-width="4.2" stroke-linecap="round"/><path d="M3.3 3.2 L9.9 8 M9.9 3.2 L3.3 8" stroke="#f6f6f6" stroke-width="2.3" stroke-linecap="round"/></svg><div style="position:absolute;left:19px;top:41px;width:803px;height:209px;background:#f0f0f0"></div><div style="position:absolute;left:0;top:0;width:1518px;height:635px;clip-path:inset(41px 696px 385px 19px)"><div style="position:absolute;left:21px;top:43px;width:2px;height:20px;background:#fff"></div><div style="position:absolute;left:23px;top:43px;width:1px;height:21px;background:#a0a0a0"></div><div style="position:absolute;left:21px;top:63px;width:3px;height:1px;background:#a0a0a0"></div><svg style="position:absolute;left:31px;top:46px" width="16" height="16"><use href="#i-save"/></svg><svg style="position:absolute;left:54px;top:46px" width="16" height="16"><use href="#i-del"/></svg><svg style="position:absolute;left:77px;top:46px" width="16" height="16"><use href="#i-graph"/></svg><svg style="position:absolute;left:100px;top:46px" width="17" height="16"><use href="#i-scale"/></svg><svg style="position:absolute;left:123px;top:46px" width="16" height="16"><use href="#i-delta"/></svg><svg style="position:absolute;left:146px;top:46px" width="16" height="16"><use href="#i-gx"/></svg><svg style="position:absolute;left:169px;top:46px" width="16" height="16"><use href="#i-gy"/></svg><svg style="position:absolute;left:192px;top:46px" width="16" height="16"><use href="#i-ga"/></svg><div style="position:absolute;left:214px;top:43px;width:2px;height:20px;background:#fff"></div><div style="position:absolute;left:216px;top:43px;width:1px;height:21px;background:#a0a0a0"></div><div style="position:absolute;left:214px;top:63px;width:3px;height:1px;background:#a0a0a0"></div><div style="position:absolute;left:226px;top:46px;white-space:nowrap;font:11.5px 'Liberation Sans', sans-serif;color:#000;line-height:14px">Function:</div><div style="position:absolute;left:275px;top:43px;width:93px;height:21px;box-sizing:border-box;border:1px solid #acacac;background:#e5e5e5"></div><div style="position:absolute;left:279px;top:47px;white-space:nowrap;font:11.5px 'Liberation Sans', sans-serif;color:#000;line-height:14px">Offset (+/-)</div><svg style="position:absolute;left:354px;top:51px" width="10" height="6"><path d="M1 1 L5 5 L9 1" stroke="#404040" stroke-width="1.2" fill="none"/></svg><div style="position:absolute;left:373px;top:46px;white-space:nowrap;font:11.5px 'Liberation Sans', sans-serif;color:#000;line-height:14px">Value:</div><div style="position:absolute;left:406px;top:43px;width:48px;height:21px;box-sizing:border-box;border:1px solid #7a7a7a;background:#fff"></div><div style="position:absolute;left:412px;top:46px;white-space:nowrap;font:11.5px 'Liberation Sans', sans-serif;color:#000;line-height:14px">1.0</div><div style="position:absolute;left:456px;top:44px;width:49px;height:19px;box-sizing:border-box;border:1px solid #adadad;background:#e1e1e1"></div><div style="position:absolute;left:460px;top:47px;white-space:nowrap;font:11.5px 'Liberation Sans', sans-serif;color:#000;line-height:14px;letter-spacing:-0.2px">Execute</div><div style="position:absolute;left:19px;top:66px;width:803px;height:161px;background:#808080"></div><div style="position:absolute;left:19px;top:66px;width:803px;height:1px;background:#a0a0a0"></div><div style="position:absolute;left:19px;top:67px;width:802px;height:1px;background:#696969"></div><div style="position:absolute;left:19px;top:66px;width:1px;height:161px;background:#a0a0a0"></div><div style="position:absolute;left:20px;top:67px;width:1px;height:160px;background:#696969"></div><div style="position:absolute;left:20px;top:225px;width:802px;height:1px;background:#e3e3e3"></div><div style="position:absolute;left:19px;top:226px;width:803px;height:1px;background:#ffffff"></div><div style="position:absolute;left:820px;top:67px;width:1px;height:160px;background:#e3e3e3"></div><div style="position:absolute;left:821px;top:66px;width:1px;height:161px;background:#ffffff"></div><div style="position:absolute;left:21px;top:68px;width:799px;height:16px;background:#fff"></div><div style="position:absolute;left:21px;top:68px;width:798px;height:15px;box-sizing:border-box;border:1px solid #a0a0a0;background:#f0f0f0;overflow:hidden"><div style="position:absolute;left:0px;top:0px;width:796px;height:13px;box-sizing:border-box;border-left:1px solid #fff;border-top:1px solid #fff"></div><div style="position:absolute;left:1px;right:0;top:0;text-align:center;overflow:hidden;font:bold 11px 'Liberation Sans', sans-serif;line-height:15px;padding-top:1px;letter-spacing:0.74px;color:#000;white-space:nowrap">* Extended Spark Advance (4000-7000RPM)</div></div><div style="position:absolute;left:21px;top:84px;width:782px;height:15px;background:#fff"></div><div style="position:absolute;left:21px;top:84px;width:45px;height:14px;box-sizing:border-box;border:1px solid #a0a0a0;background:#f0f0f0;overflow:hidden"><div style="position:absolute;left:0px;top:0px;width:43px;height:12px;box-sizing:border-box;border-left:1px solid #fff;border-top:1px solid #fff"></div></div><div style="position:absolute;left:67px;top:84px;width:45px;height:14px;box-sizing:border-box;border:1px solid #a0a0a0;background:#dcdcdc;overflow:hidden"><div style="position:absolute;left:0px;top:0px;width:43px;height:12px;box-sizing:border-box;border-left:1px solid #fff;border-top:1px solid #fff"></div><div style="position:absolute;left:0;right:0;top:1px;text-align:center;font:11px 'Liberation Sans', sans-serif;line-height:15px;color:#000">25</div></div><div style="position:absolute;left:113px;top:84px;width:45px;height:14px;box-sizing:border-box;border:1px solid #a0a0a0;background:#f0f0f0;overflow:hidden"><div style="position:absolute;left:0px;top:0px;width:43px;height:12px;box-sizing:border-box;border-left:1px solid #fff;border-top:1px solid #fff"></div><div style="position:absolute;left:0;right:0;top:1px;text-align:center;font:11px 'Liberation Sans', sans-serif;line-height:15px;color:#000">30</div></div><div style="position:absolute;left:159px;top:84px;width:45px;height:14px;box-sizing:border-box;border:1px solid #a0a0a0;background:#f0f0f0;overflow:hidden"><div style="position:absolute;left:0px;top:0px;width:43px;height:12px;box-sizing:border-box;border-left:1px solid #fff;border-top:1px solid #fff"></div><div style="position:absolute;left:0;right:0;top:1px;text-align:center;font:11px 'Liberation Sans', sans-serif;line-height:15px;color:#000">35</div></div><div style="position:absolute;left:205px;top:84px;width:45px;height:14px;box-sizing:border-box;border:1px solid #a0a0a0;background:#f0f0f0;overflow:hidden"><div style="position:absolute;left:0px;top:0px;width:43px;height:12px;box-sizing:border-box;border-left:1px solid #fff;border-top:1px solid #fff"></div><div style="position:absolute;left:0;right:0;top:1px;text-align:center;font:11px 'Liberation Sans', sans-serif;line-height:15px;color:#000">40</div></div><div style="position:absolute;left:251px;top:84px;width:45px;height:14px;box-sizing:border-box;border:1px solid #a0a0a0;background:#f0f0f0;overflow:hidden"><div style="position:absolute;left:0px;top:0px;width:43px;height:12px;box-sizing:border-box;border-left:1px solid #fff;border-top:1px solid #fff"></div><div style="position:absolute;left:0;right:0;top:1px;text-align:center;font:11px 'Liberation Sans', sans-serif;line-height:15px;color:#000">45</div></div><div style="position:absolute;left:297px;top:84px;width:45px;height:14px;box-sizing:border-box;border:1px solid #a0a0a0;background:#f0f0f0;overflow:hidden"><div style="position:absolute;left:0px;top:0px;width:43px;height:12px;box-sizing:border-box;border-left:1px solid #fff;border-top:1px solid #fff"></div><div style="position:absolute;left:0;right:0;top:1px;text-align:center;font:11px 'Liberation Sans', sans-serif;line-height:15px;color:#000">50</div></div><div style="position:absolute;left:343px;top:84px;width:45px;height:14px;box-sizing:border-box;border:1px solid #a0a0a0;background:#f0f0f0;overflow:hidden"><div style="position:absolute;left:0px;top:0px;width:43px;height:12px;box-sizing:border-box;border-left:1px solid #fff;border-top:1px solid #fff"></div><div style="position:absolute;left:0;right:0;top:1px;text-align:center;font:11px 'Liberation Sans', sans-serif;line-height:15px;color:#000">55</div></div><div style="position:absolute;left:389px;top:84px;width:45px;height:14px;box-sizing:border-box;border:1px solid #a0a0a0;background:#f0f0f0;overflow:hidden"><div style="position:absolute;left:0px;top:0px;width:43px;height:12px;box-sizing:border-box;border-left:1px solid #fff;border-top:1px solid #fff"></div><div style="position:absolute;left:0;right:0;top:1px;text-align:center;font:11px 'Liberation Sans', sans-serif;line-height:15px;color:#000">60</div></div><div style="position:absolute;left:435px;top:84px;width:45px;height:14px;box-sizing:border-box;border:1px solid #a0a0a0;background:#f0f0f0;overflow:hidden"><div style="position:absolute;left:0px;top:0px;width:43px;height:12px;box-sizing:border-box;border-left:1px solid #fff;border-top:1px solid #fff"></div><div style="position:absolute;left:0;right:0;top:1px;text-align:center;font:11px 'Liberation Sans', sans-serif;line-height:15px;color:#000">65</div></div><div style="position:absolute;left:481px;top:84px;width:45px;height:14px;box-sizing:border-box;border:1px solid #a0a0a0;background:#f0f0f0;overflow:hidden"><div style="position:absolute;left:0px;top:0px;width:43px;height:12px;box-sizing:border-box;border-left:1px solid #fff;border-top:1px solid #fff"></div><div style="position:absolute;left:0;right:0;top:1px;text-align:center;font:11px 'Liberation Sans', sans-serif;line-height:15px;color:#000">70</div></div><div style="position:absolute;left:527px;top:84px;width:45px;height:14px;box-sizing:border-box;border:1px solid #a0a0a0;background:#f0f0f0;overflow:hidden"><div style="position:absolute;left:0px;top:0px;width:43px;height:12px;box-sizing:border-box;border-left:1px solid #fff;border-top:1px solid #fff"></div><div style="position:absolute;left:0;right:0;top:1px;text-align:center;font:11px 'Liberation Sans', sans-serif;line-height:15px;color:#000">75</div></div><div style="position:absolute;left:573px;top:84px;width:45px;height:14px;box-sizing:border-box;border:1px solid #a0a0a0;background:#f0f0f0;overflow:hidden"><div style="position:absolute;left:0px;top:0px;width:43px;height:12px;box-sizing:border-box;border-left:1px solid #fff;border-top:1px solid #fff"></div><div style="position:absolute;left:0;right:0;top:1px;text-align:center;font:11px 'Liberation Sans', sans-serif;line-height:15px;color:#000">80</div></div><div style="position:absolute;left:619px;top:84px;width:45px;height:14px;box-sizing:border-box;border:1px solid #a0a0a0;background:#f0f0f0;overflow:hidden"><div style="position:absolute;left:0px;top:0px;width:43px;height:12px;box-sizing:border-box;border-left:1px solid #fff;border-top:1px solid #fff"></div><div style="position:absolute;left:0;right:0;top:1px;text-align:center;font:11px 'Liberation Sans', sans-serif;line-height:15px;color:#000">85</div></div><div style="position:absolute;left:665px;top:84px;width:45px;height:14px;box-sizing:border-box;border:1px solid #a0a0a0;background:#f0f0f0;overflow:hidden"><div style="position:absolute;left:0px;top:0px;width:43px;height:12px;box-sizing:border-box;border-left:1px solid #fff;border-top:1px solid #fff"></div><div style="position:absolute;left:0;right:0;top:1px;text-align:center;font:11px 'Liberation Sans', sans-serif;line-height:15px;color:#000">90</div></div><div style="position:absolute;left:711px;top:84px;width:45px;height:14px;box-sizing:border-box;border:1px solid #a0a0a0;background:#f0f0f0;overflow:hidden"><div style="position:absolute;left:0px;top:0px;width:43px;height:12px;box-sizing:border-box;border-left:1px solid #fff;border-top:1px solid #fff"></div><div style="position:absolute;left:0;right:0;top:1px;text-align:center;font:11px 'Liberation Sans', sans-serif;line-height:15px;color:#000">95</div></div><div style="position:absolute;left:757px;top:84px;width:45px;height:14px;box-sizing:border-box;border:1px solid #a0a0a0;background:#f0f0f0;overflow:hidden"><div style="position:absolute;left:0px;top:0px;width:43px;height:12px;box-sizing:border-box;border-left:1px solid #fff;border-top:1px solid #fff"></div><div style="position:absolute;left:0;right:0;top:1px;text-align:center;font:11px 'Liberation Sans', sans-serif;line-height:15px;color:#000">100</div></div><div style="position:absolute;left:21px;top:99px;width:46px;height:105px;background:#fff"></div><div style="position:absolute;left:67px;top:99px;width:736px;height:105px;background:#e0e0e0"></div><div style="position:absolute;left:21px;top:99px;width:45px;height:14px;box-sizing:border-box;border:1px solid #a0a0a0;background:#dcdcdc;overflow:hidden"><div style="position:absolute;left:0px;top:0px;width:43px;height:12px;box-sizing:border-box;border-left:1px solid #fff;border-top:1px solid #fff"></div><div style="position:absolute;left:0;right:1px;top:0;text-align:right;font:11px 'Liberation Sans', sans-serif;line-height:15px;color:#000">4000</div></div><div style="position:absolute;left:67px;top:99px;width:46px;height:15px;box-sizing:border-box;border:1px solid #000;background:#bf9f9f"><div style="position:absolute;left:0;right:1px;top:0;text-align:right;font:11px 'Liberation Sans', sans-serif;line-height:13px;color:#000">35.0</div></div><div style="position:absolute;left:114px;top:100px;width:44px;height:13px;background:#dd8686"><div style="position:absolute;left:0;right:1px;top:0;text-align:right;font:11px 'Liberation Sans', sans-serif;line-height:13px;color:#000">40.0</div></div><div style="position:absolute;left:160px;top:100px;width:44px;height:13px;background:#e08080"><div style="position:absolute;left:0;right:1px;top:0;text-align:right;font:11px 'Liberation Sans', sans-serif;line-height:13px;color:#000">42.0</div></div><div style="position:absolute;left:206px;top:100px;width:44px;height:13px;background:#e08080"><div style="position:absolute;left:0;right:1px;top:0;text-align:right;font:11px 'Liberation Sans', sans-serif;line-height:13px;color:#000">42.0</div></div><div style="position:absolute;left:252px;top:100px;width:44px;height:13px;background:#e08080"><div style="position:absolute;left:0;right:1px;top:0;text-align:right;font:11px 'Liberation Sans', sans-serif;line-height:13px;color:#000">42.0</div></div><div style="position:absolute;left:298px;top:100px;width:44px;height:13px;background:#e08080"><div style="position:absolute;left:0;right:1px;top:0;text-align:right;font:11px 'Liberation Sans', sans-serif;line-height:13px;color:#000">42.0</div></div><div style="position:absolute;left:344px;top:100px;width:44px;height:13px;background:#e08080"><div style="position:absolute;left:0;right:1px;top:0;text-align:right;font:11px 'Liberation Sans', sans-serif;line-height:13px;color:#000">42.0</div></div><div style="position:absolute;left:390px;top:100px;width:44px;height:13px;background:#e08080"><div style="position:absolute;left:0;right:1px;top:0;text-align:right;font:11px 'Liberation Sans', sans-serif;line-height:13px;color:#000">42.0</div></div><div style="position:absolute;left:436px;top:100px;width:44px;height:13px;background:#de8383"><div style="position:absolute;left:0;right:1px;top:0;text-align:right;font:11px 'Liberation Sans', sans-serif;line-height:13px;color:#000">41.0</div></div><div style="position:absolute;left:482px;top:100px;width:44px;height:13px;background:#dd8686"><div style="position:absolute;left:0;right:1px;top:0;text-align:right;font:11px 'Liberation Sans', sans-serif;line-height:13px;color:#000">40.0</div></div><div style="position:absolute;left:528px;top:100px;width:44px;height:13px;background:#dd8686"><div style="position:absolute;left:0;right:1px;top:0;text-align:right;font:11px 'Liberation Sans', sans-serif;line-height:13px;color:#000">40.0</div></div><div style="position:absolute;left:574px;top:100px;width:44px;height:13px;background:#d98c8c"><div style="position:absolute;left:0;right:1px;top:0;text-align:right;font:11px 'Liberation Sans', sans-serif;line-height:13px;color:#000">38.0</div></div><div style="position:absolute;left:620px;top:100px;width:44px;height:13px;background:#d88f8f"><div style="position:absolute;left:0;right:1px;top:0;text-align:right;font:11px 'Liberation Sans', sans-serif;line-height:13px;color:#000">37.0</div></div><div style="position:absolute;left:666px;top:100px;width:44px;height:13px;background:#d69292"><div style="position:absolute;left:0;right:1px;top:0;text-align:right;font:11px 'Liberation Sans', sans-serif;line-height:13px;color:#000">36.0</div></div><div style="position:absolute;left:712px;top:100px;width:44px;height:13px;background:#d49595"><div style="position:absolute;left:0;right:1px;top:0;text-align:right;font:11px 'Liberation Sans', sans-serif;line-height:13px;color:#000">35.0</div></div><div style="position:absolute;left:758px;top:100px;width:44px;height:13px;background:#d49595"><div style="position:absolute;left:0;right:1px;top:0;text-align:right;font:11px 'Liberation Sans', sans-serif;line-height:13px;color:#000">35.0</div></div><div style="position:absolute;left:21px;top:114px;width:45px;height:14px;box-sizing:border-box;border:1px solid #a0a0a0;background:#f0f0f0;overflow:hidden"><div style="position:absolute;left:0px;top:0px;width:43px;height:12px;box-sizing:border-box;border-left:1px solid #fff;border-top:1px solid #fff"></div><div style="position:absolute;left:0;right:1px;top:0;text-align:right;font:11px 'Liberation Sans', sans-serif;line-height:15px;color:#000">4500</div></div><div style="position:absolute;left:68px;top:115px;width:44px;height:13px;background:#d49595"><div style="position:absolute;left:0;right:1px;top:0;text-align:right;font:11px 'Liberation Sans', sans-serif;line-height:13px;color:#000">35.0</div></div><div style="position:absolute;left:114px;top:115px;width:44px;height:13px;background:#dd8686"><div style="position:absolute;left:0;right:1px;top:0;text-align:right;font:11px 'Liberation Sans', sans-serif;line-height:13px;color:#000">40.0</div></div><div style="position:absolute;left:160px;top:115px;width:44px;height:13px;background:#e08080"><div style="position:absolute;left:0;right:1px;top:0;text-align:right;font:11px 'Liberation Sans', sans-serif;line-height:13px;color:#000">42.0</div></div><div style="position:absolute;left:206px;top:115px;width:44px;height:13px;background:#e08080"><div style="position:absolute;left:0;right:1px;top:0;text-align:right;font:11px 'Liberation Sans', sans-serif;line-height:13px;color:#000">42.0</div></div><div style="position:absolute;left:252px;top:115px;width:44px;height:13px;background:#e08080"><div style="position:absolute;left:0;right:1px;top:0;text-align:right;font:11px 'Liberation Sans', sans-serif;line-height:13px;color:#000">42.0</div></div><div style="position:absolute;left:298px;top:115px;width:44px;height:13px;background:#e08080"><div style="position:absolute;left:0;right:1px;top:0;text-align:right;font:11px 'Liberation Sans', sans-serif;line-height:13px;color:#000">42.0</div></div><div style="position:absolute;left:344px;top:115px;width:44px;height:13px;background:#e08080"><div style="position:absolute;left:0;right:1px;top:0;text-align:right;font:11px 'Liberation Sans', sans-serif;line-height:13px;color:#000">42.0</div></div><div style="position:absolute;left:390px;top:115px;width:44px;height:13px;background:#e08080"><div style="position:absolute;left:0;right:1px;top:0;text-align:right;font:11px 'Liberation Sans', sans-serif;line-height:13px;color:#000">42.0</div></div><div style="position:absolute;left:436px;top:115px;width:44px;height:13px;background:#de8383"><div style="position:absolute;left:0;right:1px;top:0;text-align:right;font:11px 'Liberation Sans', sans-serif;line-height:13px;color:#000">41.0</div></div><div style="position:absolute;left:482px;top:115px;width:44px;height:13px;background:#dd8686"><div style="position:absolute;left:0;right:1px;top:0;text-align:right;font:11px 'Liberation Sans', sans-serif;line-height:13px;color:#000">40.0</div></div><div style="position:absolute;left:528px;top:115px;width:44px;height:13px;background:#dd8686"><div style="position:absolute;left:0;right:1px;top:0;text-align:right;font:11px 'Liberation Sans', sans-serif;line-height:13px;color:#000">40.0</div></div><div style="position:absolute;left:574px;top:115px;width:44px;height:13px;background:#d98c8c"><div style="position:absolute;left:0;right:1px;top:0;text-align:right;font:11px 'Liberation Sans', sans-serif;line-height:13px;color:#000">38.0</div></div><div style="position:absolute;left:620px;top:115px;width:44px;height:13px;background:#d88f8f"><div style="position:absolute;left:0;right:1px;top:0;text-align:right;font:11px 'Liberation Sans', sans-serif;line-height:13px;color:#000">37.0</div></div><div style="position:absolute;left:666px;top:115px;width:44px;height:13px;background:#d69292"><div style="position:absolute;left:0;right:1px;top:0;text-align:right;font:11px 'Liberation Sans', sans-serif;line-height:13px;color:#000">36.0</div></div><div style="position:absolute;left:712px;top:115px;width:44px;height:13px;background:#d49595"><div style="position:absolute;left:0;right:1px;top:0;text-align:right;font:11px 'Liberation Sans', sans-serif;line-height:13px;color:#000">35.0</div></div><div style="position:absolute;left:758px;top:115px;width:44px;height:13px;background:#d49595"><div style="position:absolute;left:0;right:1px;top:0;text-align:right;font:11px 'Liberation Sans', sans-serif;line-height:13px;color:#000">35.0</div></div><div style="position:absolute;left:21px;top:129px;width:45px;height:14px;box-sizing:border-box;border:1px solid #a0a0a0;background:#f0f0f0;overflow:hidden"><div style="position:absolute;left:0px;top:0px;width:43px;height:12px;box-sizing:border-box;border-left:1px solid #fff;border-top:1px solid #fff"></div><div style="position:absolute;left:0;right:1px;top:0;text-align:right;font:11px 'Liberation Sans', sans-serif;line-height:15px;color:#000">5000</div></div><div style="position:absolute;left:68px;top:130px;width:44px;height:13px;background:#d49595"><div style="position:absolute;left:0;right:1px;top:0;text-align:right;font:11px 'Liberation Sans', sans-serif;line-height:13px;color:#000">35.0</div></div><div style="position:absolute;left:114px;top:130px;width:44px;height:13px;background:#dd8686"><div style="position:absolute;left:0;right:1px;top:0;text-align:right;font:11px 'Liberation Sans', sans-serif;line-height:13px;color:#000">40.0</div></div><div style="position:absolute;left:160px;top:130px;width:44px;height:13px;background:#de8383"><div style="position:absolute;left:0;right:1px;top:0;text-align:right;font:11px 'Liberation Sans', sans-serif;line-height:13px;color:#000">41.0</div></div><div style="position:absolute;left:206px;top:130px;width:44px;height:13px;background:#de8383"><div style="position:absolute;left:0;right:1px;top:0;text-align:right;font:11px 'Liberation Sans', sans-serif;line-height:13px;color:#000">41.0</div></div><div style="position:absolute;left:252px;top:130px;width:44px;height:13px;background:#de8383"><div style="position:absolute;left:0;right:1px;top:0;text-align:right;font:11px 'Liberation Sans', sans-serif;line-height:13px;color:#000">41.0</div></div><div style="position:absolute;left:298px;top:130px;width:44px;height:13px;background:#de8383"><div style="position:absolute;left:0;right:1px;top:0;text-align:right;font:11px 'Liberation Sans', sans-serif;line-height:13px;color:#000">41.0</div></div><div style="position:absolute;left:344px;top:130px;width:44px;height:13px;background:#de8383"><div style="position:absolute;left:0;right:1px;top:0;text-align:right;font:11px 'Liberation Sans', sans-serif;line-height:13px;color:#000">41.0</div></div><div style="position:absolute;left:390px;top:130px;width:44px;height:13px;background:#dd8686"><div style="position:absolute;left:0;right:1px;top:0;text-align:right;font:11px 'Liberation Sans', sans-serif;line-height:13px;color:#000">40.0</div></div><div style="position:absolute;left:436px;top:130px;width:44px;height:13px;background:#dd8686"><div style="position:absolute;left:0;right:1px;top:0;text-align:right;font:11px 'Liberation Sans', sans-serif;line-height:13px;color:#000">40.0</div></div><div style="position:absolute;left:482px;top:130px;width:44px;height:13px;background:#db8989"><div style="position:absolute;left:0;right:1px;top:0;text-align:right;font:11px 'Liberation Sans', sans-serif;line-height:13px;color:#000">39.0</div></div><div style="position:absolute;left:528px;top:130px;width:44px;height:13px;background:#d98c8c"><div style="position:absolute;left:0;right:1px;top:0;text-align:right;font:11px 'Liberation Sans', sans-serif;line-height:13px;color:#000">38.0</div></div><div style="position:absolute;left:574px;top:130px;width:44px;height:13px;background:#d98c8c"><div style="position:absolute;left:0;right:1px;top:0;text-align:right;font:11px 'Liberation Sans', sans-serif;line-height:13px;color:#000">38.0</div></div><div style="position:absolute;left:620px;top:130px;width:44px;height:13px;background:#d88f8f"><div style="position:absolute;left:0;right:1px;top:0;text-align:right;font:11px 'Liberation Sans', sans-serif;line-height:13px;color:#000">37.0</div></div><div style="position:absolute;left:666px;top:130px;width:44px;height:13px;background:#d69292"><div style="position:absolute;left:0;right:1px;top:0;text-align:right;font:11px 'Liberation Sans', sans-serif;line-height:13px;color:#000">36.0</div></div><div style="position:absolute;left:712px;top:130px;width:44px;height:13px;background:#d49595"><div style="position:absolute;left:0;right:1px;top:0;text-align:right;font:11px 'Liberation Sans', sans-serif;line-height:13px;color:#000">35.0</div></div><div style="position:absolute;left:758px;top:130px;width:44px;height:13px;background:#d49595"><div style="position:absolute;left:0;right:1px;top:0;text-align:right;font:11px 'Liberation Sans', sans-serif;line-height:13px;color:#000">35.0</div></div><div style="position:absolute;left:21px;top:144px;width:45px;height:14px;box-sizing:border-box;border:1px solid #a0a0a0;background:#f0f0f0;overflow:hidden"><div style="position:absolute;left:0px;top:0px;width:43px;height:12px;box-sizing:border-box;border-left:1px solid #fff;border-top:1px solid #fff"></div><div style="position:absolute;left:0;right:1px;top:0;text-align:right;font:11px 'Liberation Sans', sans-serif;line-height:15px;color:#000">5500</div></div><div style="position:absolute;left:68px;top:145px;width:44px;height:13px;background:#d49595"><div style="position:absolute;left:0;right:1px;top:0;text-align:right;font:11px 'Liberation Sans', sans-serif;line-height:13px;color:#000">35.0</div></div><div style="position:absolute;left:114px;top:145px;width:44px;height:13px;background:#dd8686"><div style="position:absolute;left:0;right:1px;top:0;text-align:right;font:11px 'Liberation Sans', sans-serif;line-height:13px;color:#000">40.0</div></div><div style="position:absolute;left:160px;top:145px;width:44px;height:13px;background:#de8383"><div style="position:absolute;left:0;right:1px;top:0;text-align:right;font:11px 'Liberation Sans', sans-serif;line-height:13px;color:#000">41.0</div></div><div style="position:absolute;left:206px;top:145px;width:44px;height:13px;background:#de8383"><div style="position:absolute;left:0;right:1px;top:0;text-align:right;font:11px 'Liberation Sans', sans-serif;line-height:13px;color:#000">41.0</div></div><div style="position:absolute;left:252px;top:145px;width:44px;height:13px;background:#de8383"><div style="position:absolute;left:0;right:1px;top:0;text-align:right;font:11px 'Liberation Sans', sans-serif;line-height:13px;color:#000">41.0</div></div><div style="position:absolute;left:298px;top:145px;width:44px;height:13px;background:#de8383"><div style="position:absolute;left:0;right:1px;top:0;text-align:right;font:11px 'Liberation Sans', sans-serif;line-height:13px;color:#000">41.0</div></div><div style="position:absolute;left:344px;top:145px;width:44px;height:13px;background:#de8383"><div style="position:absolute;left:0;right:1px;top:0;text-align:right;font:11px 'Liberation Sans', sans-serif;line-height:13px;color:#000">41.0</div></div><div style="position:absolute;left:390px;top:145px;width:44px;height:13px;background:#dd8686"><div style="position:absolute;left:0;right:1px;top:0;text-align:right;font:11px 'Liberation Sans', sans-serif;line-height:13px;color:#000">40.0</div></div><div style="position:absolute;left:436px;top:145px;width:44px;height:13px;background:#dd8686"><div style="position:absolute;left:0;right:1px;top:0;text-align:right;font:11px 'Liberation Sans', sans-serif;line-height:13px;color:#000">40.0</div></div><div style="position:absolute;left:482px;top:145px;width:44px;height:13px;background:#db8989"><div style="position:absolute;left:0;right:1px;top:0;text-align:right;font:11px 'Liberation Sans', sans-serif;line-height:13px;color:#000">39.0</div></div><div style="position:absolute;left:528px;top:145px;width:44px;height:13px;background:#d98c8c"><div style="position:absolute;left:0;right:1px;top:0;text-align:right;font:11px 'Liberation Sans', sans-serif;line-height:13px;color:#000">38.0</div></div><div style="position:absolute;left:574px;top:145px;width:44px;height:13px;background:#d88f8f"><div style="position:absolute;left:0;right:1px;top:0;text-align:right;font:11px 'Liberation Sans', sans-serif;line-height:13px;color:#000">37.0</div></div><div style="position:absolute;left:620px;top:145px;width:44px;height:13px;background:#d69292"><div style="position:absolute;left:0;right:1px;top:0;text-align:right;font:11px 'Liberation Sans', sans-serif;line-height:13px;color:#000">36.0</div></div><div style="position:absolute;left:666px;top:145px;width:44px;height:13px;background:#d69292"><div style="position:absolute;left:0;right:1px;top:0;text-align:right;font:11px 'Liberation Sans', sans-serif;line-height:13px;color:#000">36.0</div></div><div style="position:absolute;left:712px;top:145px;width:44px;height:13px;background:#d49595"><div style="position:absolute;left:0;right:1px;top:0;text-align:right;font:11px 'Liberation Sans', sans-serif;line-height:13px;color:#000">35.0</div></div><div style="position:absolute;left:758px;top:145px;width:44px;height:13px;background:#d49595"><div style="position:absolute;left:0;right:1px;top:0;text-align:right;font:11px 'Liberation Sans', sans-serif;line-height:13px;color:#000">35.0</div></div><div style="position:absolute;left:21px;top:159px;width:45px;height:14px;box-sizing:border-box;border:1px solid #a0a0a0;background:#f0f0f0;overflow:hidden"><div style="position:absolute;left:0px;top:0px;width:43px;height:12px;box-sizing:border-box;border-left:1px solid #fff;border-top:1px solid #fff"></div><div style="position:absolute;left:0;right:1px;top:0;text-align:right;font:11px 'Liberation Sans', sans-serif;line-height:15px;color:#000">6000</div></div><div style="position:absolute;left:68px;top:160px;width:44px;height:13px;background:#d49595"><div style="position:absolute;left:0;right:1px;top:0;text-align:right;font:11px 'Liberation Sans', sans-serif;line-height:13px;color:#000">35.0</div></div><div style="position:absolute;left:114px;top:160px;width:44px;height:13px;background:#dd8686"><div style="position:absolute;left:0;right:1px;top:0;text-align:right;font:11px 'Liberation Sans', sans-serif;line-height:13px;color:#000">40.0</div></div><div style="position:absolute;left:160px;top:160px;width:44px;height:13px;background:#de8383"><div style="position:absolute;left:0;right:1px;top:0;text-align:right;font:11px 'Liberation Sans', sans-serif;line-height:13px;color:#000">41.0</div></div><div style="position:absolute;left:206px;top:160px;width:44px;height:13px;background:#de8383"><div style="position:absolute;left:0;right:1px;top:0;text-align:right;font:11px 'Liberation Sans', sans-serif;line-height:13px;color:#000">41.0</div></div><div style="position:absolute;left:252px;top:160px;width:44px;height:13px;background:#de8383"><div style="position:absolute;left:0;right:1px;top:0;text-align:right;font:11px 'Liberation Sans', sans-serif;line-height:13px;color:#000">41.0</div></div><div style="position:absolute;left:298px;top:160px;width:44px;height:13px;background:#de8383"><div style="position:absolute;left:0;right:1px;top:0;text-align:right;font:11px 'Liberation Sans', sans-serif;line-height:13px;color:#000">41.0</div></div><div style="position:absolute;left:344px;top:160px;width:44px;height:13px;background:#de8383"><div style="position:absolute;left:0;right:1px;top:0;text-align:right;font:11px 'Liberation Sans', sans-serif;line-height:13px;color:#000">41.0</div></div><div style="position:absolute;left:390px;top:160px;width:44px;height:13px;background:#dd8686"><div style="position:absolute;left:0;right:1px;top:0;text-align:right;font:11px 'Liberation Sans', sans-serif;line-height:13px;color:#000">40.0</div></div><div style="position:absolute;left:436px;top:160px;width:44px;height:13px;background:#dd8686"><div style="position:absolute;left:0;right:1px;top:0;text-align:right;font:11px 'Liberation Sans', sans-serif;line-height:13px;color:#000">40.0</div></div><div style="position:absolute;left:482px;top:160px;width:44px;height:13px;background:#db8989"><div style="position:absolute;left:0;right:1px;top:0;text-align:right;font:11px 'Liberation Sans', sans-serif;line-height:13px;color:#000">39.0</div></div><div style="position:absolute;left:528px;top:160px;width:44px;height:13px;background:#d98c8c"><div style="position:absolute;left:0;right:1px;top:0;text-align:right;font:11px 'Liberation Sans', sans-serif;line-height:13px;color:#000">38.0</div></div><div style="position:absolute;left:574px;top:160px;width:44px;height:13px;background:#d88f8f"><div style="position:absolute;left:0;right:1px;top:0;text-align:right;font:11px 'Liberation Sans', sans-serif;line-height:13px;color:#000">37.0</div></div><div style="position:absolute;left:620px;top:160px;width:44px;height:13px;background:#d69292"><div style="position:absolute;left:0;right:1px;top:0;text-align:right;font:11px 'Liberation Sans', sans-serif;line-height:13px;color:#000">36.0</div></div><div style="position:absolute;left:666px;top:160px;width:44px;height:13px;background:#d69292"><div style="position:absolute;left:0;right:1px;top:0;text-align:right;font:11px 'Liberation Sans', sans-serif;line-height:13px;color:#000">36.0</div></div><div style="position:absolute;left:712px;top:160px;width:44px;height:13px;background:#d49595"><div style="position:absolute;left:0;right:1px;top:0;text-align:right;font:11px 'Liberation Sans', sans-serif;line-height:13px;color:#000">35.0</div></div><div style="position:absolute;left:758px;top:160px;width:44px;height:13px;background:#d49595"><div style="position:absolute;left:0;right:1px;top:0;text-align:right;font:11px 'Liberation Sans', sans-serif;line-height:13px;color:#000">35.0</div></div><div style="position:absolute;left:21px;top:174px;width:45px;height:14px;box-sizing:border-box;border:1px solid #a0a0a0;background:#f0f0f0;overflow:hidden"><div style="position:absolute;left:0px;top:0px;width:43px;height:12px;box-sizing:border-box;border-left:1px solid #fff;border-top:1px solid #fff"></div><div style="position:absolute;left:0;right:1px;top:0;text-align:right;font:11px 'Liberation Sans', sans-serif;line-height:15px;color:#000">6500</div></div><div style="position:absolute;left:68px;top:175px;width:44px;height:13px;background:#d49595"><div style="position:absolute;left:0;right:1px;top:0;text-align:right;font:11px 'Liberation Sans', sans-serif;line-height:13px;color:#000">35.0</div></div><div style="position:absolute;left:114px;top:175px;width:44px;height:13px;background:#dd8686"><div style="position:absolute;left:0;right:1px;top:0;text-align:right;font:11px 'Liberation Sans', sans-serif;line-height:13px;color:#000">40.0</div></div><div style="position:absolute;left:160px;top:175px;width:44px;height:13px;background:#de8383"><div style="position:absolute;left:0;right:1px;top:0;text-align:right;font:11px 'Liberation Sans', sans-serif;line-height:13px;color:#000">41.0</div></div><div style="position:absolute;left:206px;top:175px;width:44px;height:13px;background:#de8383"><div style="position:absolute;left:0;right:1px;top:0;text-align:right;font:11px 'Liberation Sans', sans-serif;line-height:13px;color:#000">41.0</div></div><div style="position:absolute;left:252px;top:175px;width:44px;height:13px;background:#de8383"><div style="position:absolute;left:0;right:1px;top:0;text-align:right;font:11px 'Liberation Sans', sans-serif;line-height:13px;color:#000">41.0</div></div><div style="position:absolute;left:298px;top:175px;width:44px;height:13px;background:#de8383"><div style="position:absolute;left:0;right:1px;top:0;text-align:right;font:11px 'Liberation Sans', sans-serif;line-height:13px;color:#000">41.0</div></div><div style="position:absolute;left:344px;top:175px;width:44px;height:13px;background:#de8383"><div style="position:absolute;left:0;right:1px;top:0;text-align:right;font:11px 'Liberation Sans', sans-serif;line-height:13px;color:#000">41.0</div></div><div style="position:absolute;left:390px;top:175px;width:44px;height:13px;background:#dd8686"><div style="position:absolute;left:0;right:1px;top:0;text-align:right;font:11px 'Liberation Sans', sans-serif;line-height:13px;color:#000">40.0</div></div><div style="position:absolute;left:436px;top:175px;width:44px;height:13px;background:#dd8686"><div style="position:absolute;left:0;right:1px;top:0;text-align:right;font:11px 'Liberation Sans', sans-serif;line-height:13px;color:#000">40.0</div></div><div style="position:absolute;left:482px;top:175px;width:44px;height:13px;background:#db8989"><div style="position:absolute;left:0;right:1px;top:0;text-align:right;font:11px 'Liberation Sans', sans-serif;line-height:13px;color:#000">39.0</div></div><div style="position:absolute;left:528px;top:175px;width:44px;height:13px;background:#d98c8c"><div style="position:absolute;left:0;right:1px;top:0;text-align:right;font:11px 'Liberation Sans', sans-serif;line-height:13px;color:#000">38.0</div></div><div style="position:absolute;left:574px;top:175px;width:44px;height:13px;background:#d69292"><div style="position:absolute;left:0;right:1px;top:0;text-align:right;font:11px 'Liberation Sans', sans-serif;line-height:13px;color:#000">36.0</div></div><div style="position:absolute;left:620px;top:175px;width:44px;height:13px;background:#d69292"><div style="position:absolute;left:0;right:1px;top:0;text-align:right;font:11px 'Liberation Sans', sans-serif;line-height:13px;color:#000">36.0</div></div><div style="position:absolute;left:666px;top:175px;width:44px;height:13px;background:#d69292"><div style="position:absolute;left:0;right:1px;top:0;text-align:right;font:11px 'Liberation Sans', sans-serif;line-height:13px;color:#000">36.0</div></div><div style="position:absolute;left:712px;top:175px;width:44px;height:13px;background:#d49595"><div style="position:absolute;left:0;right:1px;top:0;text-align:right;font:11px 'Liberation Sans', sans-serif;line-height:13px;color:#000">35.0</div></div><div style="position:absolute;left:758px;top:175px;width:44px;height:13px;background:#d39898"><div style="position:absolute;left:0;right:1px;top:0;text-align:right;font:11px 'Liberation Sans', sans-serif;line-height:13px;color:#000">34.0</div></div><div style="position:absolute;left:21px;top:189px;width:45px;height:14px;box-sizing:border-box;border:1px solid #a0a0a0;background:#f0f0f0;overflow:hidden"><div style="position:absolute;left:0px;top:0px;width:43px;height:12px;box-sizing:border-box;border-left:1px solid #fff;border-top:1px solid #fff"></div><div style="position:absolute;left:0;right:1px;top:0;text-align:right;font:11px 'Liberation Sans', sans-serif;line-height:15px;color:#000">7000</div></div><div style="position:absolute;left:68px;top:190px;width:44px;height:13px;background:#d49595"><div style="position:absolute;left:0;right:1px;top:0;text-align:right;font:11px 'Liberation Sans', sans-serif;line-height:13px;color:#000">35.0</div></div><div style="position:absolute;left:114px;top:190px;width:44px;height:13px;background:#dd8686"><div style="position:absolute;left:0;right:1px;top:0;text-align:right;font:11px 'Liberation Sans', sans-serif;line-height:13px;color:#000">40.0</div></div><div style="position:absolute;left:160px;top:190px;width:44px;height:13px;background:#de8383"><div style="position:absolute;left:0;right:1px;top:0;text-align:right;font:11px 'Liberation Sans', sans-serif;line-height:13px;color:#000">41.0</div></div><div style="position:absolute;left:206px;top:190px;width:44px;height:13px;background:#de8383"><div style="position:absolute;left:0;right:1px;top:0;text-align:right;font:11px 'Liberation Sans', sans-serif;line-height:13px;color:#000">41.0</div></div><div style="position:absolute;left:252px;top:190px;width:44px;height:13px;background:#de8383"><div style="position:absolute;left:0;right:1px;top:0;text-align:right;font:11px 'Liberation Sans', sans-serif;line-height:13px;color:#000">41.0</div></div><div style="position:absolute;left:298px;top:190px;width:44px;height:13px;background:#de8383"><div style="position:absolute;left:0;right:1px;top:0;text-align:right;font:11px 'Liberation Sans', sans-serif;line-height:13px;color:#000">41.0</div></div><div style="position:absolute;left:344px;top:190px;width:44px;height:13px;background:#de8383"><div style="position:absolute;left:0;right:1px;top:0;text-align:right;font:11px 'Liberation Sans', sans-serif;line-height:13px;color:#000">41.0</div></div><div style="position:absolute;left:390px;top:190px;width:44px;height:13px;background:#dd8686"><div style="position:absolute;left:0;right:1px;top:0;text-align:right;font:11px 'Liberation Sans', sans-serif;line-height:13px;color:#000">40.0</div></div><div style="position:absolute;left:436px;top:190px;width:44px;height:13px;background:#dd8686"><div style="position:absolute;left:0;right:1px;top:0;text-align:right;font:11px 'Liberation Sans', sans-serif;line-height:13px;color:#000">40.0</div></div><div style="position:absolute;left:482px;top:190px;width:44px;height:13px;background:#db8989"><div style="position:absolute;left:0;right:1px;top:0;text-align:right;font:11px 'Liberation Sans', sans-serif;line-height:13px;color:#000">39.0</div></div><div style="position:absolute;left:528px;top:190px;width:44px;height:13px;background:#d98c8c"><div style="position:absolute;left:0;right:1px;top:0;text-align:right;font:11px 'Liberation Sans', sans-serif;line-height:13px;color:#000">38.0</div></div><div style="position:absolute;left:574px;top:190px;width:44px;height:13px;background:#d69292"><div style="position:absolute;left:0;right:1px;top:0;text-align:right;font:11px 'Liberation Sans', sans-serif;line-height:13px;color:#000">36.0</div></div><div style="position:absolute;left:620px;top:190px;width:44px;height:13px;background:#d69292"><div style="position:absolute;left:0;right:1px;top:0;text-align:right;font:11px 'Liberation Sans', sans-serif;line-height:13px;color:#000">36.0</div></div><div style="position:absolute;left:666px;top:190px;width:44px;height:13px;background:#d69292"><div style="position:absolute;left:0;right:1px;top:0;text-align:right;font:11px 'Liberation Sans', sans-serif;line-height:13px;color:#000">36.0</div></div><div style="position:absolute;left:712px;top:190px;width:44px;height:13px;background:#d49595"><div style="position:absolute;left:0;right:1px;top:0;text-align:right;font:11px 'Liberation Sans', sans-serif;line-height:13px;color:#000">35.0</div></div><div style="position:absolute;left:758px;top:190px;width:44px;height:13px;background:#d39898"><div style="position:absolute;left:0;right:1px;top:0;text-align:right;font:11px 'Liberation Sans', sans-serif;line-height:13px;color:#000">34.0</div></div><div style="position:absolute;left:19px;top:227px;width:803px;height:23px;background:#f0f0f0"></div><div style="position:absolute;left:19px;top:227px;width:803px;height:1px;background:#dadada"></div><div style="position:absolute;left:93px;top:229px;width:1px;height:20px;background:#d5d5d5"></div><div style="position:absolute;left:168px;top:229px;width:1px;height:20px;background:#d5d5d5"></div><div style="position:absolute;left:818px;top:240px;width:2px;height:2px;background:#acacac"></div><div style="position:absolute;left:815px;top:243px;width:2px;height:2px;background:#acacac"></div><div style="position:absolute;left:818px;top:243px;width:2px;height:2px;background:#acacac"></div><div style="position:absolute;left:812px;top:246px;width:2px;height:2px;background:#acacac"></div><div style="position:absolute;left:815px;top:246px;width:2px;height:2px;background:#acacac"></div><div style="position:absolute;left:818px;top:246px;width:2px;height:2px;background:#acacac"></div></div></div><div style="position:absolute;left:0;top:0;width:1518px;height:635px;overflow:hidden"><div style="position:absolute;left:-14px;top:262px;width:819px;height:368px;box-sizing:border-box;border:1px solid #5a5a5a;border-radius:6px 6px 0 0;background:#d7e4f2;overflow:hidden"><div style="position:absolute;left:0px;top:0px;width:817px;height:366px;box-sizing:border-box;border:1px solid rgba(255,255,255,0.6);border-radius:5px 5px 0 0;background:linear-gradient(#bfcddb,#d7e4f2 29px,#d7e4f2 29px)"></div></div><svg style="position:absolute;left:-4px;top:275px" width="16" height="12"><use href="#i-chip"/></svg><div style="position:absolute;left:16px;top:275px;white-space:nowrap;font:12px 'Liberation Sans', sans-serif;color:#a09c9c;line-height:14px;letter-spacing:-0.25px">* Main Spark Advance (400-4000RPM)</div><div style="position:absolute;left:763px;top:272px;width:32px;height:18px;box-sizing:border-box;border:1px solid #8696ad;border-radius:3px;background:linear-gradient(#cfdbe7,#c6d4e3)"><div style="position:absolute;left:0px;top:0px;width:30px;height:16px;box-sizing:border-box;border:1px solid rgba(255,255,255,0.4);border-radius:2px"></div></div><svg style="position:absolute;left:772px;top:275px" width="14" height="12"><path d="M3.3 3.2 L9.9 8 M9.9 3.2 L3.3 8" stroke="#3c4450" stroke-width="4.2" stroke-linecap="round"/><path d="M3.3 3.2 L9.9 8 M9.9 3.2 L3.3 8" stroke="#f6f6f6" stroke-width="2.3" stroke-linecap="round"/></svg><div style="position:absolute;left:-6px;top:293px;width:803px;height:329px;background:#f0f0f0"></div><div style="position:absolute;left:0;top:0;width:1518px;height:635px;clip-path:inset(293px 721px 13px 0px)"><div style="position:absolute;left:-4px;top:295px;width:2px;height:20px;background:#fff"></div><div style="position:absolute;left:-2px;top:295px;width:1px;height:21px;background:#a0a0a0"></div><div style="position:absolute;left:-4px;top:315px;width:3px;height:1px;background:#a0a0a0"></div><svg style="position:absolute;left:6px;top:298px" width="16" height="16"><use href="#i-save"/></svg><svg style="position:absolute;left:29px;top:298px" width="16" height="16"><use href="#i-del"/></svg><svg style="position:absolute;left:52px;top:298px" width="16" height="16"><use href="#i-graph"/></svg><svg style="position:absolute;left:75px;top:298px" width="17" height="16"><use href="#i-scale"/></svg><svg style="position:absolute;left:98px;top:298px" width="16" height="16"><use href="#i-delta"/></svg><svg style="position:absolute;left:121px;top:298px" width="16" height="16"><use href="#i-gx"/></svg><svg style="position:absolute;left:144px;top:298px" width="16" height="16"><use href="#i-gy"/></svg><svg style="position:absolute;left:167px;top:298px" width="16" height="16"><use href="#i-ga"/></svg><div style="position:absolute;left:189px;top:295px;width:2px;height:20px;background:#fff"></div><div style="position:absolute;left:191px;top:295px;width:1px;height:21px;background:#a0a0a0"></div><div style="position:absolute;left:189px;top:315px;width:3px;height:1px;background:#a0a0a0"></div><div style="position:absolute;left:201px;top:298px;white-space:nowrap;font:11.5px 'Liberation Sans', sans-serif;color:#000;line-height:14px">Function:</div><div style="position:absolute;left:250px;top:295px;width:93px;height:21px;box-sizing:border-box;border:1px solid #acacac;background:#e5e5e5"></div><div style="position:absolute;left:254px;top:299px;white-space:nowrap;font:11.5px 'Liberation Sans', sans-serif;color:#000;line-height:14px">Offset (+/-)</div><svg style="position:absolute;left:329px;top:303px" width="10" height="6"><path d="M1 1 L5 5 L9 1" stroke="#404040" stroke-width="1.2" fill="none"/></svg><div style="position:absolute;left:348px;top:298px;white-space:nowrap;font:11.5px 'Liberation Sans', sans-serif;color:#000;line-height:14px">Value:</div><div style="position:absolute;left:381px;top:295px;width:48px;height:21px;box-sizing:border-box;border:1px solid #7a7a7a;background:#fff"></div><div style="position:absolute;left:387px;top:298px;white-space:nowrap;font:11.5px 'Liberation Sans', sans-serif;color:#000;line-height:14px">1.0</div><div style="position:absolute;left:431px;top:296px;width:49px;height:19px;box-sizing:border-box;border:1px solid #adadad;background:#e1e1e1"></div><div style="position:absolute;left:435px;top:299px;white-space:nowrap;font:11.5px 'Liberation Sans', sans-serif;color:#000;line-height:14px;letter-spacing:-0.2px">Execute</div><div style="position:absolute;left:-6px;top:318px;width:803px;height:281px;background:#808080"></div><div style="position:absolute;left:-6px;top:318px;width:803px;height:1px;background:#a0a0a0"></div><div style="position:absolute;left:-6px;top:319px;width:802px;height:1px;background:#696969"></div><div style="position:absolute;left:-6px;top:318px;width:1px;height:281px;background:#a0a0a0"></div><div style="position:absolute;left:-5px;top:319px;width:1px;height:280px;background:#696969"></div><div style="position:absolute;left:-5px;top:597px;width:802px;height:1px;background:#e3e3e3"></div><div style="position:absolute;left:-6px;top:598px;width:803px;height:1px;background:#ffffff"></div><div style="position:absolute;left:795px;top:319px;width:1px;height:280px;background:#e3e3e3"></div><div style="position:absolute;left:796px;top:318px;width:1px;height:281px;background:#ffffff"></div><div style="position:absolute;left:-4px;top:320px;width:799px;height:16px;background:#fff"></div><div style="position:absolute;left:-4px;top:320px;width:798px;height:15px;box-sizing:border-box;border:1px solid #a0a0a0;background:#f0f0f0;overflow:hidden"><div style="position:absolute;left:0px;top:0px;width:796px;height:13px;box-sizing:border-box;border-left:1px solid #fff;border-top:1px solid #fff"></div><div style="position:absolute;left:1px;right:0;top:0;text-align:center;overflow:hidden;font:bold 11px 'Liberation Sans', sans-serif;line-height:15px;padding-top:1px;letter-spacing:0.74px;color:#000;white-space:nowrap">* Main Spark Advance (400-4000RPM)</div></div><div style="position:absolute;left:-4px;top:336px;width:782px;height:15px;background:#fff"></div><div style="position:absolute;left:-4px;top:336px;width:45px;height:14px;box-sizing:border-box;border:1px solid #a0a0a0;background:#f0f0f0;overflow:hidden"><div style="position:absolute;left:0px;top:0px;width:43px;height:12px;box-sizing:border-box;border-left:1px solid #fff;border-top:1px solid #fff"></div></div><div style="position:absolute;left:42px;top:336px;width:45px;height:14px;box-sizing:border-box;border:1px solid #a0a0a0;background:#dcdcdc;overflow:hidden"><div style="position:absolute;left:0px;top:0px;width:43px;height:12px;box-sizing:border-box;border-left:1px solid #fff;border-top:1px solid #fff"></div><div style="position:absolute;left:0;right:0;top:1px;text-align:center;font:11px 'Liberation Sans', sans-serif;line-height:15px;color:#000">25</div></div><div style="position:absolute;left:88px;top:336px;width:45px;height:14px;box-sizing:border-box;border:1px solid #a0a0a0;background:#f0f0f0;overflow:hidden"><div style="position:absolute;left:0px;top:0px;width:43px;height:12px;box-sizing:border-box;border-left:1px solid #fff;border-top:1px solid #fff"></div><div style="position:absolute;left:0;right:0;top:1px;text-align:center;font:11px 'Liberation Sans', sans-serif;line-height:15px;color:#000">30</div></div><div style="position:absolute;left:134px;top:336px;width:45px;height:14px;box-sizing:border-box;border:1px solid #a0a0a0;background:#f0f0f0;overflow:hidden"><div style="position:absolute;left:0px;top:0px;width:43px;height:12px;box-sizing:border-box;border-left:1px solid #fff;border-top:1px solid #fff"></div><div style="position:absolute;left:0;right:0;top:1px;text-align:center;font:11px 'Liberation Sans', sans-serif;line-height:15px;color:#000">35</div></div><div style="position:absolute;left:180px;top:336px;width:45px;height:14px;box-sizing:border-box;border:1px solid #a0a0a0;background:#f0f0f0;overflow:hidden"><div style="position:absolute;left:0px;top:0px;width:43px;height:12px;box-sizing:border-box;border-left:1px solid #fff;border-top:1px solid #fff"></div><div style="position:absolute;left:0;right:0;top:1px;text-align:center;font:11px 'Liberation Sans', sans-serif;line-height:15px;color:#000">40</div></div><div style="position:absolute;left:226px;top:336px;width:45px;height:14px;box-sizing:border-box;border:1px solid #a0a0a0;background:#f0f0f0;overflow:hidden"><div style="position:absolute;left:0px;top:0px;width:43px;height:12px;box-sizing:border-box;border-left:1px solid #fff;border-top:1px solid #fff"></div><div style="position:absolute;left:0;right:0;top:1px;text-align:center;font:11px 'Liberation Sans', sans-serif;line-height:15px;color:#000">45</div></div><div style="position:absolute;left:272px;top:336px;width:45px;height:14px;box-sizing:border-box;border:1px solid #a0a0a0;background:#f0f0f0;overflow:hidden"><div style="position:absolute;left:0px;top:0px;width:43px;height:12px;box-sizing:border-box;border-left:1px solid #fff;border-top:1px solid #fff"></div><div style="position:absolute;left:0;right:0;top:1px;text-align:center;font:11px 'Liberation Sans', sans-serif;line-height:15px;color:#000">50</div></div><div style="position:absolute;left:318px;top:336px;width:45px;height:14px;box-sizing:border-box;border:1px solid #a0a0a0;background:#f0f0f0;overflow:hidden"><div style="position:absolute;left:0px;top:0px;width:43px;height:12px;box-sizing:border-box;border-left:1px solid #fff;border-top:1px solid #fff"></div><div style="position:absolute;left:0;right:0;top:1px;text-align:center;font:11px 'Liberation Sans', sans-serif;line-height:15px;color:#000">55</div></div><div style="position:absolute;left:364px;top:336px;width:45px;height:14px;box-sizing:border-box;border:1px solid #a0a0a0;background:#f0f0f0;overflow:hidden"><div style="position:absolute;left:0px;top:0px;width:43px;height:12px;box-sizing:border-box;border-left:1px solid #fff;border-top:1px solid #fff"></div><div style="position:absolute;left:0;right:0;top:1px;text-align:center;font:11px 'Liberation Sans', sans-serif;line-height:15px;color:#000">60</div></div><div style="position:absolute;left:410px;top:336px;width:45px;height:14px;box-sizing:border-box;border:1px solid #a0a0a0;background:#f0f0f0;overflow:hidden"><div style="position:absolute;left:0px;top:0px;width:43px;height:12px;box-sizing:border-box;border-left:1px solid #fff;border-top:1px solid #fff"></div><div style="position:absolute;left:0;right:0;top:1px;text-align:center;font:11px 'Liberation Sans', sans-serif;line-height:15px;color:#000">65</div></div><div style="position:absolute;left:456px;top:336px;width:45px;height:14px;box-sizing:border-box;border:1px solid #a0a0a0;background:#f0f0f0;overflow:hidden"><div style="position:absolute;left:0px;top:0px;width:43px;height:12px;box-sizing:border-box;border-left:1px solid #fff;border-top:1px solid #fff"></div><div style="position:absolute;left:0;right:0;top:1px;text-align:center;font:11px 'Liberation Sans', sans-serif;line-height:15px;color:#000">70</div></div><div style="position:absolute;left:502px;top:336px;width:45px;height:14px;box-sizing:border-box;border:1px solid #a0a0a0;background:#f0f0f0;overflow:hidden"><div style="position:absolute;left:0px;top:0px;width:43px;height:12px;box-sizing:border-box;border-left:1px solid #fff;border-top:1px solid #fff"></div><div style="position:absolute;left:0;right:0;top:1px;text-align:center;font:11px 'Liberation Sans', sans-serif;line-height:15px;color:#000">75</div></div><div style="position:absolute;left:548px;top:336px;width:45px;height:14px;box-sizing:border-box;border:1px solid #a0a0a0;background:#f0f0f0;overflow:hidden"><div style="position:absolute;left:0px;top:0px;width:43px;height:12px;box-sizing:border-box;border-left:1px solid #fff;border-top:1px solid #fff"></div><div style="position:absolute;left:0;right:0;top:1px;text-align:center;font:11px 'Liberation Sans', sans-serif;line-height:15px;color:#000">80</div></div><div style="position:absolute;left:594px;top:336px;width:45px;height:14px;box-sizing:border-box;border:1px solid #a0a0a0;background:#f0f0f0;overflow:hidden"><div style="position:absolute;left:0px;top:0px;width:43px;height:12px;box-sizing:border-box;border-left:1px solid #fff;border-top:1px solid #fff"></div><div style="position:absolute;left:0;right:0;top:1px;text-align:center;font:11px 'Liberation Sans', sans-serif;line-height:15px;color:#000">85</div></div><div style="position:absolute;left:640px;top:336px;width:45px;height:14px;box-sizing:border-box;border:1px solid #a0a0a0;background:#f0f0f0;overflow:hidden"><div style="position:absolute;left:0px;top:0px;width:43px;height:12px;box-sizing:border-box;border-left:1px solid #fff;border-top:1px solid #fff"></div><div style="position:absolute;left:0;right:0;top:1px;text-align:center;font:11px 'Liberation Sans', sans-serif;line-height:15px;color:#000">90</div></div><div style="position:absolute;left:686px;top:336px;width:45px;height:14px;box-sizing:border-box;border:1px solid #a0a0a0;background:#f0f0f0;overflow:hidden"><div style="position:absolute;left:0px;top:0px;width:43px;height:12px;box-sizing:border-box;border-left:1px solid #fff;border-top:1px solid #fff"></div><div style="position:absolute;left:0;right:0;top:1px;text-align:center;font:11px 'Liberation Sans', sans-serif;line-height:15px;color:#000">95</div></div><div style="position:absolute;left:732px;top:336px;width:45px;height:14px;box-sizing:border-box;border:1px solid #a0a0a0;background:#f0f0f0;overflow:hidden"><div style="position:absolute;left:0px;top:0px;width:43px;height:12px;box-sizing:border-box;border-left:1px solid #fff;border-top:1px solid #fff"></div><div style="position:absolute;left:0;right:0;top:1px;text-align:center;font:11px 'Liberation Sans', sans-serif;line-height:15px;color:#000">100</div></div><div style="position:absolute;left:-4px;top:351px;width:46px;height:225px;background:#fff"></div><div style="position:absolute;left:42px;top:351px;width:736px;height:225px;background:#e0e0e0"></div><div style="position:absolute;left:-4px;top:351px;width:45px;height:14px;box-sizing:border-box;border:1px solid #a0a0a0;background:#dcdcdc;overflow:hidden"><div style="position:absolute;left:0px;top:0px;width:43px;height:12px;box-sizing:border-box;border-left:1px solid #fff;border-top:1px solid #fff"></div><div style="position:absolute;left:0;right:1px;top:0;text-align:right;font:11px 'Liberation Sans', sans-serif;line-height:15px;color:#000">400</div></div><div style="position:absolute;left:42px;top:351px;width:46px;height:15px;box-sizing:border-box;border:1px solid #000;background:#b3b4b4"><div style="position:absolute;left:0;right:1px;top:0;text-align:right;font:11px 'Liberation Sans', sans-serif;line-height:13px;color:#000">21.0</div></div><div style="position:absolute;left:89px;top:352px;width:44px;height:13px;background:#bdbebe"><div style="position:absolute;left:0;right:1px;top:0;text-align:right;font:11px 'Liberation Sans', sans-serif;line-height:13px;color:#000">21.0</div></div><div style="position:absolute;left:135px;top:352px;width:44px;height:13px;background:#bdbebe"><div style="position:absolute;left:0;right:1px;top:0;text-align:right;font:11px 'Liberation Sans', sans-serif;line-height:13px;color:#000">21.0</div></div><div style="position:absolute;left:181px;top:352px;width:44px;height:13px;background:#bdbebe"><div style="position:absolute;left:0;right:1px;top:0;text-align:right;font:11px 'Liberation Sans', sans-serif;line-height:13px;color:#000">21.0</div></div><div style="position:absolute;left:227px;top:352px;width:44px;height:13px;background:#bdbebe"><div style="position:absolute;left:0;right:1px;top:0;text-align:right;font:11px 'Liberation Sans', sans-serif;line-height:13px;color:#000">21.0</div></div><div style="position:absolute;left:273px;top:352px;width:44px;height:13px;background:#bdbebe"><div style="position:absolute;left:0;right:1px;top:0;text-align:right;font:11px 'Liberation Sans', sans-serif;line-height:13px;color:#000">21.0</div></div><div style="position:absolute;left:319px;top:352px;width:44px;height:13px;background:#bdbebe"><div style="position:absolute;left:0;right:1px;top:0;text-align:right;font:11px 'Liberation Sans', sans-serif;line-height:13px;color:#000">21.0</div></div><div style="position:absolute;left:365px;top:352px;width:44px;height:13px;background:#bdbebe"><div style="position:absolute;left:0;right:1px;top:0;text-align:right;font:11px 'Liberation Sans', sans-serif;line-height:13px;color:#000">21.0</div></div><div style="position:absolute;left:411px;top:352px;width:44px;height:13px;background:#bcc1c1"><div style="position:absolute;left:0;right:1px;top:0;text-align:right;font:11px 'Liberation Sans', sans-serif;line-height:13px;color:#000">20.0</div></div><div style="position:absolute;left:457px;top:352px;width:44px;height:13px;background:#b8c7c7"><div style="position:absolute;left:0;right:1px;top:0;text-align:right;font:11px 'Liberation Sans', sans-serif;line-height:13px;color:#000">18.0</div></div><div style="position:absolute;left:503px;top:352px;width:44px;height:13px;background:#b2d3d3"><div style="position:absolute;left:0;right:1px;top:0;text-align:right;font:11px 'Liberation Sans', sans-serif;line-height:13px;color:#000">14.0</div></div><div style="position:absolute;left:549px;top:352px;width:44px;height:13px;background:#a9e2e2"><div style="position:absolute;left:0;right:1px;top:0;text-align:right;font:11px 'Liberation Sans', sans-serif;line-height:13px;color:#000">9.0</div></div><div style="position:absolute;left:595px;top:352px;width:44px;height:13px;background:#a3eeee"><div style="position:absolute;left:0;right:1px;top:0;text-align:right;font:11px 'Liberation Sans', sans-serif;line-height:13px;color:#000">5.0</div></div><div style="position:absolute;left:641px;top:352px;width:44px;height:13px;background:#9ff4f4"><div style="position:absolute;left:0;right:1px;top:0;text-align:right;font:11px 'Liberation Sans', sans-serif;line-height:13px;color:#000">3.0</div></div><div style="position:absolute;left:687px;top:352px;width:44px;height:13px;background:#9cfafa"><div style="position:absolute;left:0;right:1px;top:0;text-align:right;font:11px 'Liberation Sans', sans-serif;line-height:13px;color:#000">1.0</div></div><div style="position:absolute;left:733px;top:352px;width:44px;height:13px;background:#9cfafa"><div style="position:absolute;left:0;right:1px;top:0;text-align:right;font:11px 'Liberation Sans', sans-serif;line-height:13px;color:#000">1.0</div></div><div style="position:absolute;left:-4px;top:366px;width:45px;height:14px;box-sizing:border-box;border:1px solid #a0a0a0;background:#f0f0f0;overflow:hidden"><div style="position:absolute;left:0px;top:0px;width:43px;height:12px;box-sizing:border-box;border-left:1px solid #fff;border-top:1px solid #fff"></div><div style="position:absolute;left:0;right:1px;top:0;text-align:right;font:11px 'Liberation Sans', sans-serif;line-height:15px;color:#000">600</div></div><div style="position:absolute;left:43px;top:367px;width:44px;height:13px;background:#c2b6b6"><div style="position:absolute;left:0;right:1px;top:0;text-align:right;font:11px 'Liberation Sans', sans-serif;line-height:13px;color:#000">24.0</div></div><div style="position:absolute;left:89px;top:367px;width:44px;height:13px;background:#c2b6b6"><div style="position:absolute;left:0;right:1px;top:0;text-align:right;font:11px 'Liberation Sans', sans-serif;line-height:13px;color:#000">24.0</div></div><div style="position:absolute;left:135px;top:367px;width:44px;height:13px;background:#c4b3b3"><div style="position:absolute;left:0;right:1px;top:0;text-align:right;font:11px 'Liberation Sans', sans-serif;line-height:13px;color:#000">25.0</div></div><div style="position:absolute;left:181px;top:367px;width:44px;height:13px;background:#c4b3b3"><div style="position:absolute;left:0;right:1px;top:0;text-align:right;font:11px 'Liberation Sans', sans-serif;line-height:13px;color:#000">25.0</div></div><div style="position:absolute;left:227px;top:367px;width:44px;height:13px;background:#c4b3b3"><div style="position:absolute;left:0;right:1px;top:0;text-align:right;font:11px 'Liberation Sans', sans-serif;line-height:13px;color:#000">25.0</div></div><div style="position:absolute;left:273px;top:367px;width:44px;height:13px;background:#c4b3b3"><div style="position:absolute;left:0;right:1px;top:0;text-align:right;font:11px 'Liberation Sans', sans-serif;line-height:13px;color:#000">25.0</div></div><div style="position:absolute;left:319px;top:367px;width:44px;height:13px;background:#c4b3b3"><div style="position:absolute;left:0;right:1px;top:0;text-align:right;font:11px 'Liberation Sans', sans-serif;line-height:13px;color:#000">25.0</div></div><div style="position:absolute;left:365px;top:367px;width:44px;height:13px;background:#c0b9b9"><div style="position:absolute;left:0;right:1px;top:0;text-align:right;font:11px 'Liberation Sans', sans-serif;line-height:13px;color:#000">23.0</div></div><div style="position:absolute;left:411px;top:367px;width:44px;height:13px;background:#bfbcbc"><div style="position:absolute;left:0;right:1px;top:0;text-align:right;font:11px 'Liberation Sans', sans-serif;line-height:13px;color:#000">22.0</div></div><div style="position:absolute;left:457px;top:367px;width:44px;height:13px;background:#bac4c4"><div style="position:absolute;left:0;right:1px;top:0;text-align:right;font:11px 'Liberation Sans', sans-serif;line-height:13px;color:#000">19.0</div></div><div style="position:absolute;left:503px;top:367px;width:44px;height:13px;background:#b3d0d0"><div style="position:absolute;left:0;right:1px;top:0;text-align:right;font:11px 'Liberation Sans', sans-serif;line-height:13px;color:#000">15.0</div></div><div style="position:absolute;left:549px;top:367px;width:44px;height:13px;background:#addcdc"><div style="position:absolute;left:0;right:1px;top:0;text-align:right;font:11px 'Liberation Sans', sans-serif;line-height:13px;color:#000">11.0</div></div><div style="position:absolute;left:595px;top:367px;width:44px;height:13px;background:#a6e8e8"><div style="position:absolute;left:0;right:1px;top:0;text-align:right;font:11px 'Liberation Sans', sans-serif;line-height:13px;color:#000">7.0</div></div><div style="position:absolute;left:641px;top:367px;width:44px;height:13px;background:#a3eeee"><div style="position:absolute;left:0;right:1px;top:0;text-align:right;font:11px 'Liberation Sans', sans-serif;line-height:13px;color:#000">5.0</div></div><div style="position:absolute;left:687px;top:367px;width:44px;height:13px;background:#9ff4f4"><div style="position:absolute;left:0;right:1px;top:0;text-align:right;font:11px 'Liberation Sans', sans-serif;line-height:13px;color:#000">3.0</div></div><div style="position:absolute;left:733px;top:367px;width:44px;height:13px;background:#9ef7f7"><div style="position:absolute;left:0;right:1px;top:0;text-align:right;font:11px 'Liberation Sans', sans-serif;line-height:13px;color:#000">2.0</div></div><div style="position:absolute;left:-4px;top:381px;width:45px;height:14px;box-sizing:border-box;border:1px solid #a0a0a0;background:#f0f0f0;overflow:hidden"><div style="position:absolute;left:0px;top:0px;width:43px;height:12px;box-sizing:border-box;border-left:1px solid #fff;border-top:1px solid #fff"></div><div style="position:absolute;left:0;right:1px;top:0;text-align:right;font:11px 'Liberation Sans', sans-serif;line-height:15px;color:#000">800</div></div><div style="position:absolute;left:43px;top:382px;width:44px;height:13px;background:#c2b6b6"><div style="position:absolute;left:0;right:1px;top:0;text-align:right;font:11px 'Liberation Sans', sans-serif;line-height:13px;color:#000">24.0</div></div><div style="position:absolute;left:89px;top:382px;width:44px;height:13px;background:#c7adad"><div style="position:absolute;left:0;right:1px;top:0;text-align:right;font:11px 'Liberation Sans', sans-serif;line-height:13px;color:#000">27.0</div></div><div style="position:absolute;left:135px;top:382px;width:44px;height:13px;background:#cea1a1"><div style="position:absolute;left:0;right:1px;top:0;text-align:right;font:11px 'Liberation Sans', sans-serif;line-height:13px;color:#000">31.0</div></div><div style="position:absolute;left:181px;top:382px;width:44px;height:13px;background:#cea1a1"><div style="position:absolute;left:0;right:1px;top:0;text-align:right;font:11px 'Liberation Sans', sans-serif;line-height:13px;color:#000">31.0</div></div><div style="position:absolute;left:227px;top:382px;width:44px;height:13px;background:#cea1a1"><div style="position:absolute;left:0;right:1px;top:0;text-align:right;font:11px 'Liberation Sans', sans-serif;line-height:13px;color:#000">31.0</div></div><div style="position:absolute;left:273px;top:382px;width:44px;height:13px;background:#cea1a1"><div style="position:absolute;left:0;right:1px;top:0;text-align:right;font:11px 'Liberation Sans', sans-serif;line-height:13px;color:#000">31.0</div></div><div style="position:absolute;left:319px;top:382px;width:44px;height:13px;background:#c9aaaa"><div style="position:absolute;left:0;right:1px;top:0;text-align:right;font:11px 'Liberation Sans', sans-serif;line-height:13px;color:#000">28.0</div></div><div style="position:absolute;left:365px;top:382px;width:44px;height:13px;background:#c5b0b0"><div style="position:absolute;left:0;right:1px;top:0;text-align:right;font:11px 'Liberation Sans', sans-serif;line-height:13px;color:#000">26.0</div></div><div style="position:absolute;left:411px;top:382px;width:44px;height:13px;background:#c2b6b6"><div style="position:absolute;left:0;right:1px;top:0;text-align:right;font:11px 'Liberation Sans', sans-serif;line-height:13px;color:#000">24.0</div></div><div style="position:absolute;left:457px;top:382px;width:44px;height:13px;background:#bdbebe"><div style="position:absolute;left:0;right:1px;top:0;text-align:right;font:11px 'Liberation Sans', sans-serif;line-height:13px;color:#000">21.0</div></div><div style="position:absolute;left:503px;top:382px;width:44px;height:13px;background:#b7caca"><div style="position:absolute;left:0;right:1px;top:0;text-align:right;font:11px 'Liberation Sans', sans-serif;line-height:13px;color:#000">17.0</div></div><div style="position:absolute;left:549px;top:382px;width:44px;height:13px;background:#b0d6d6"><div style="position:absolute;left:0;right:1px;top:0;text-align:right;font:11px 'Liberation Sans', sans-serif;line-height:13px;color:#000">13.0</div></div><div style="position:absolute;left:595px;top:382px;width:44px;height:13px;background:#abdfdf"><div style="position:absolute;left:0;right:1px;top:0;text-align:right;font:11px 'Liberation Sans', sans-serif;line-height:13px;color:#000">10.0</div></div><div style="position:absolute;left:641px;top:382px;width:44px;height:13px;background:#a8e5e5"><div style="position:absolute;left:0;right:1px;top:0;text-align:right;font:11px 'Liberation Sans', sans-serif;line-height:13px;color:#000">8.0</div></div><div style="position:absolute;left:687px;top:382px;width:44px;height:13px;background:#a4ebeb"><div style="position:absolute;left:0;right:1px;top:0;text-align:right;font:11px 'Liberation Sans', sans-serif;line-height:13px;color:#000">6.0</div></div><div style="position:absolute;left:733px;top:382px;width:44px;height:13px;background:#a3eeee"><div style="position:absolute;left:0;right:1px;top:0;text-align:right;font:11px 'Liberation Sans', sans-serif;line-height:13px;color:#000">5.0</div></div><div style="position:absolute;left:-4px;top:396px;width:45px;height:14px;box-sizing:border-box;border:1px solid #a0a0a0;background:#f0f0f0;overflow:hidden"><div style="position:absolute;left:0px;top:0px;width:43px;height:12px;box-sizing:border-box;border-left:1px solid #fff;border-top:1px solid #fff"></div><div style="position:absolute;left:0;right:1px;top:0;text-align:right;font:11px 'Liberation Sans', sans-serif;line-height:15px;color:#000">1000</div></div><div style="position:absolute;left:43px;top:397px;width:44px;height:13px;background:#c5b0b0"><div style="position:absolute;left:0;right:1px;top:0;text-align:right;font:11px 'Liberation Sans', sans-serif;line-height:13px;color:#000">26.0</div></div><div style="position:absolute;left:89px;top:397px;width:44px;height:13px;background:#cca4a4"><div style="position:absolute;left:0;right:1px;top:0;text-align:right;font:11px 'Liberation Sans', sans-serif;line-height:13px;color:#000">30.0</div></div><div style="position:absolute;left:135px;top:397px;width:44px;height:13px;background:#d19b9b"><div style="position:absolute;left:0;right:1px;top:0;text-align:right;font:11px 'Liberation Sans', sans-serif;line-height:13px;color:#000">33.0</div></div><div style="position:absolute;left:181px;top:397px;width:44px;height:13px;background:#d19b9b"><div style="position:absolute;left:0;right:1px;top:0;text-align:right;font:11px 'Liberation Sans', sans-serif;line-height:13px;color:#000">33.0</div></div><div style="position:absolute;left:227px;top:397px;width:44px;height:13px;background:#d19b9b"><div style="position:absolute;left:0;right:1px;top:0;text-align:right;font:11px 'Liberation Sans', sans-serif;line-height:13px;color:#000">33.0</div></div><div style="position:absolute;left:273px;top:397px;width:44px;height:13px;background:#d19b9b"><div style="position:absolute;left:0;right:1px;top:0;text-align:right;font:11px 'Liberation Sans', sans-serif;line-height:13px;color:#000">33.0</div></div><div style="position:absolute;left:319px;top:397px;width:44px;height:13px;background:#cea1a1"><div style="position:absolute;left:0;right:1px;top:0;text-align:right;font:11px 'Liberation Sans', sans-serif;line-height:13px;color:#000">31.0</div></div><div style="position:absolute;left:365px;top:397px;width:44px;height:13px;background:#caa7a7"><div style="position:absolute;left:0;right:1px;top:0;text-align:right;font:11px 'Liberation Sans', sans-serif;line-height:13px;color:#000">29.0</div></div><div style="position:absolute;left:411px;top:397px;width:44px;height:13px;background:#c7adad"><div style="position:absolute;left:0;right:1px;top:0;text-align:right;font:11px 'Liberation Sans', sans-serif;line-height:13px;color:#000">27.0</div></div><div style="position:absolute;left:457px;top:397px;width:44px;height:13px;background:#c2b6b6"><div style="position:absolute;left:0;right:1px;top:0;text-align:right;font:11px 'Liberation Sans', sans-serif;line-height:13px;color:#000">24.0</div></div><div style="position:absolute;left:503px;top:397px;width:44px;height:13px;background:#bfbcbc"><div style="position:absolute;left:0;right:1px;top:0;text-align:right;font:11px 'Liberation Sans', sans-serif;line-height:13px;color:#000">22.0</div></div><div style="position:absolute;left:549px;top:397px;width:44px;height:13px;background:#b8c7c7"><div style="position:absolute;left:0;right:1px;top:0;text-align:right;font:11px 'Liberation Sans', sans-serif;line-height:13px;color:#000">18.0</div></div><div style="position:absolute;left:595px;top:397px;width:44px;height:13px;background:#b3d0d0"><div style="position:absolute;left:0;right:1px;top:0;text-align:right;font:11px 'Liberation Sans', sans-serif;line-height:13px;color:#000">15.0</div></div><div style="position:absolute;left:641px;top:397px;width:44px;height:13px;background:#b0d6d6"><div style="position:absolute;left:0;right:1px;top:0;text-align:right;font:11px 'Liberation Sans', sans-serif;line-height:13px;color:#000">13.0</div></div><div style="position:absolute;left:687px;top:397px;width:44px;height:13px;background:#abdfdf"><div style="position:absolute;left:0;right:1px;top:0;text-align:right;font:11px 'Liberation Sans', sans-serif;line-height:13px;color:#000">10.0</div></div><div style="position:absolute;left:733px;top:397px;width:44px;height:13px;background:#a8e5e5"><div style="position:absolute;left:0;right:1px;top:0;text-align:right;font:11px 'Liberation Sans', sans-serif;line-height:13px;color:#000">8.0</div></div><div style="position:absolute;left:-4px;top:411px;width:45px;height:14px;box-sizing:border-box;border:1px solid #a0a0a0;background:#f0f0f0;overflow:hidden"><div style="position:absolute;left:0px;top:0px;width:43px;height:12px;box-sizing:border-box;border-left:1px solid #fff;border-top:1px solid #fff"></div><div style="position:absolute;left:0;right:1px;top:0;text-align:right;font:11px 'Liberation Sans', sans-serif;line-height:15px;color:#000">1200</div></div><div style="position:absolute;left:43px;top:412px;width:44px;height:13px;background:#caa7a7"><div style="position:absolute;left:0;right:1px;top:0;text-align:right;font:11px 'Liberation Sans', sans-serif;line-height:13px;color:#000">29.0</div></div><div style="position:absolute;left:89px;top:412px;width:44px;height:13px;background:#d19b9b"><div style="position:absolute;left:0;right:1px;top:0;text-align:right;font:11px 'Liberation Sans', sans-serif;line-height:13px;color:#000">33.0</div></div><div style="position:absolute;left:135px;top:412px;width:44px;height:13px;background:#d49595"><div style="position:absolute;left:0;right:1px;top:0;text-align:right;font:11px 'Liberation Sans', sans-serif;line-height:13px;color:#000">35.0</div></div><div style="position:absolute;left:181px;top:412px;width:44px;height:13px;background:#d49595"><div style="position:absolute;left:0;right:1px;top:0;text-align:right;font:11px 'Liberation Sans', sans-serif;line-height:13px;color:#000">35.0</div></div><div style="position:absolute;left:227px;top:412px;width:44px;height:13px;background:#d49595"><div style="position:absolute;left:0;right:1px;top:0;text-align:right;font:11px 'Liberation Sans', sans-serif;line-height:13px;color:#000">35.0</div></div><div style="position:absolute;left:273px;top:412px;width:44px;height:13px;background:#d49595"><div style="position:absolute;left:0;right:1px;top:0;text-align:right;font:11px 'Liberation Sans', sans-serif;line-height:13px;color:#000">35.0</div></div><div style="position:absolute;left:319px;top:412px;width:44px;height:13px;background:#d19b9b"><div style="position:absolute;left:0;right:1px;top:0;text-align:right;font:11px 'Liberation Sans', sans-serif;line-height:13px;color:#000">33.0</div></div><div style="position:absolute;left:365px;top:412px;width:44px;height:13px;background:#cea1a1"><div style="position:absolute;left:0;right:1px;top:0;text-align:right;font:11px 'Liberation Sans', sans-serif;line-height:13px;color:#000">31.0</div></div><div style="position:absolute;left:411px;top:412px;width:44px;height:13px;background:#c9aaaa"><div style="position:absolute;left:0;right:1px;top:0;text-align:right;font:11px 'Liberation Sans', sans-serif;line-height:13px;color:#000">28.0</div></div><div style="position:absolute;left:457px;top:412px;width:44px;height:13px;background:#c7adad"><div style="position:absolute;left:0;right:1px;top:0;text-align:right;font:11px 'Liberation Sans', sans-serif;line-height:13px;color:#000">27.0</div></div><div style="position:absolute;left:503px;top:412px;width:44px;height:13px;background:#c4b3b3"><div style="position:absolute;left:0;right:1px;top:0;text-align:right;font:11px 'Liberation Sans', sans-serif;line-height:13px;color:#000">25.0</div></div><div style="position:absolute;left:549px;top:412px;width:44px;height:13px;background:#bfbcbc"><div style="position:absolute;left:0;right:1px;top:0;text-align:right;font:11px 'Liberation Sans', sans-serif;line-height:13px;color:#000">22.0</div></div><div style="position:absolute;left:595px;top:412px;width:44px;height:13px;background:#bcc1c1"><div style="position:absolute;left:0;right:1px;top:0;text-align:right;font:11px 'Liberation Sans', sans-serif;line-height:13px;color:#000">20.0</div></div><div style="position:absolute;left:641px;top:412px;width:44px;height:13px;background:#b5cdcd"><div style="position:absolute;left:0;right:1px;top:0;text-align:right;font:11px 'Liberation Sans', sans-serif;line-height:13px;color:#000">16.0</div></div><div style="position:absolute;left:687px;top:412px;width:44px;height:13px;background:#b2d3d3"><div style="position:absolute;left:0;right:1px;top:0;text-align:right;font:11px 'Liberation Sans', sans-serif;line-height:13px;color:#000">14.0</div></div><div style="position:absolute;left:733px;top:412px;width:44px;height:13px;background:#addcdc"><div style="position:absolute;left:0;right:1px;top:0;text-align:right;font:11px 'Liberation Sans', sans-serif;line-height:13px;color:#000">11.0</div></div><div style="position:absolute;left:-4px;top:426px;width:45px;height:14px;box-sizing:border-box;border:1px solid #a0a0a0;background:#f0f0f0;overflow:hidden"><div style="position:absolute;left:0px;top:0px;width:43px;height:12px;box-sizing:border-box;border-left:1px solid #fff;border-top:1px solid #fff"></div><div style="position:absolute;left:0;right:1px;top:0;text-align:right;font:11px 'Liberation Sans', sans-serif;line-height:15px;color:#000">1400</div></div><div style="position:absolute;left:43px;top:427px;width:44px;height:13px;background:#cf9e9e"><div style="position:absolute;left:0;right:1px;top:0;text-align:right;font:11px 'Liberation Sans', sans-serif;line-height:13px;color:#000">32.0</div></div><div style="position:absolute;left:89px;top:427px;width:44px;height:13px;background:#d69292"><div style="position:absolute;left:0;right:1px;top:0;text-align:right;font:11px 'Liberation Sans', sans-serif;line-height:13px;color:#000">36.0</div></div><div style="position:absolute;left:135px;top:427px;width:44px;height:13px;background:#d88f8f"><div style="position:absolute;left:0;right:1px;top:0;text-align:right;font:11px 'Liberation Sans', sans-serif;line-height:13px;color:#000">37.0</div></div><div style="position:absolute;left:181px;top:427px;width:44px;height:13px;background:#d88f8f"><div style="position:absolute;left:0;right:1px;top:0;text-align:right;font:11px 'Liberation Sans', sans-serif;line-height:13px;color:#000">37.0</div></div><div style="position:absolute;left:227px;top:427px;width:44px;height:13px;background:#d88f8f"><div style="position:absolute;left:0;right:1px;top:0;text-align:right;font:11px 'Liberation Sans', sans-serif;line-height:13px;color:#000">37.0</div></div><div style="position:absolute;left:273px;top:427px;width:44px;height:13px;background:#d88f8f"><div style="position:absolute;left:0;right:1px;top:0;text-align:right;font:11px 'Liberation Sans', sans-serif;line-height:13px;color:#000">37.0</div></div><div style="position:absolute;left:319px;top:427px;width:44px;height:13px;background:#d49595"><div style="position:absolute;left:0;right:1px;top:0;text-align:right;font:11px 'Liberation Sans', sans-serif;line-height:13px;color:#000">35.0</div></div><div style="position:absolute;left:365px;top:427px;width:44px;height:13px;background:#d19b9b"><div style="position:absolute;left:0;right:1px;top:0;text-align:right;font:11px 'Liberation Sans', sans-serif;line-height:13px;color:#000">33.0</div></div><div style="position:absolute;left:411px;top:427px;width:44px;height:13px;background:#cca4a4"><div style="position:absolute;left:0;right:1px;top:0;text-align:right;font:11px 'Liberation Sans', sans-serif;line-height:13px;color:#000">30.0</div></div><div style="position:absolute;left:457px;top:427px;width:44px;height:13px;background:#c9aaaa"><div style="position:absolute;left:0;right:1px;top:0;text-align:right;font:11px 'Liberation Sans', sans-serif;line-height:13px;color:#000">28.0</div></div><div style="position:absolute;left:503px;top:427px;width:44px;height:13px;background:#c7adad"><div style="position:absolute;left:0;right:1px;top:0;text-align:right;font:11px 'Liberation Sans', sans-serif;line-height:13px;color:#000">27.0</div></div><div style="position:absolute;left:549px;top:427px;width:44px;height:13px;background:#c2b6b6"><div style="position:absolute;left:0;right:1px;top:0;text-align:right;font:11px 'Liberation Sans', sans-serif;line-height:13px;color:#000">24.0</div></div><div style="position:absolute;left:595px;top:427px;width:44px;height:13px;background:#bdbebe"><div style="position:absolute;left:0;right:1px;top:0;text-align:right;font:11px 'Liberation Sans', sans-serif;line-height:13px;color:#000">21.0</div></div><div style="position:absolute;left:641px;top:427px;width:44px;height:13px;background:#bac4c4"><div style="position:absolute;left:0;right:1px;top:0;text-align:right;font:11px 'Liberation Sans', sans-serif;line-height:13px;color:#000">19.0</div></div><div style="position:absolute;left:687px;top:427px;width:44px;height:13px;background:#b5cdcd"><div style="position:absolute;left:0;right:1px;top:0;text-align:right;font:11px 'Liberation Sans', sans-serif;line-height:13px;color:#000">16.0</div></div><div style="position:absolute;left:733px;top:427px;width:44px;height:13px;background:#b2d3d3"><div style="position:absolute;left:0;right:1px;top:0;text-align:right;font:11px 'Liberation Sans', sans-serif;line-height:13px;color:#000">14.0</div></div><div style="position:absolute;left:-4px;top:441px;width:45px;height:14px;box-sizing:border-box;border:1px solid #a0a0a0;background:#f0f0f0;overflow:hidden"><div style="position:absolute;left:0px;top:0px;width:43px;height:12px;box-sizing:border-box;border-left:1px solid #fff;border-top:1px solid #fff"></div><div style="position:absolute;left:0;right:1px;top:0;text-align:right;font:11px 'Liberation Sans', sans-serif;line-height:15px;color:#000">1600</div></div><div style="position:absolute;left:43px;top:442px;width:44px;height:13px;background:#d49595"><div style="position:absolute;left:0;right:1px;top:0;text-align:right;font:11px 'Liberation Sans', sans-serif;line-height:13px;color:#000">35.0</div></div><div style="position:absolute;left:89px;top:442px;width:44px;height:13px;background:#d98c8c"><div style="position:absolute;left:0;right:1px;top:0;text-align:right;font:11px 'Liberation Sans', sans-serif;line-height:13px;color:#000">38.0</div></div><div style="position:absolute;left:135px;top:442px;width:44px;height:13px;background:#d98c8c"><div style="position:absolute;left:0;right:1px;top:0;text-align:right;font:11px 'Liberation Sans', sans-serif;line-height:13px;color:#000">38.0</div></div><div style="position:absolute;left:181px;top:442px;width:44px;height:13px;background:#d98c8c"><div style="position:absolute;left:0;right:1px;top:0;text-align:right;font:11px 'Liberation Sans', sans-serif;line-height:13px;color:#000">38.0</div></div><div style="position:absolute;left:227px;top:442px;width:44px;height:13px;background:#d88f8f"><div style="position:absolute;left:0;right:1px;top:0;text-align:right;font:11px 'Liberation Sans', sans-serif;line-height:13px;color:#000">37.0</div></div><div style="position:absolute;left:273px;top:442px;width:44px;height:13px;background:#d88f8f"><div style="position:absolute;left:0;right:1px;top:0;text-align:right;font:11px 'Liberation Sans', sans-serif;line-height:13px;color:#000">37.0</div></div><div style="position:absolute;left:319px;top:442px;width:44px;height:13px;background:#d69292"><div style="position:absolute;left:0;right:1px;top:0;text-align:right;font:11px 'Liberation Sans', sans-serif;line-height:13px;color:#000">36.0</div></div><div style="position:absolute;left:365px;top:442px;width:44px;height:13px;background:#d39898"><div style="position:absolute;left:0;right:1px;top:0;text-align:right;font:11px 'Liberation Sans', sans-serif;line-height:13px;color:#000">34.0</div></div><div style="position:absolute;left:411px;top:442px;width:44px;height:13px;background:#cf9e9e"><div style="position:absolute;left:0;right:1px;top:0;text-align:right;font:11px 'Liberation Sans', sans-serif;line-height:13px;color:#000">32.0</div></div><div style="position:absolute;left:457px;top:442px;width:44px;height:13px;background:#cca4a4"><div style="position:absolute;left:0;right:1px;top:0;text-align:right;font:11px 'Liberation Sans', sans-serif;line-height:13px;color:#000">30.0</div></div><div style="position:absolute;left:503px;top:442px;width:44px;height:13px;background:#c9aaaa"><div style="position:absolute;left:0;right:1px;top:0;text-align:right;font:11px 'Liberation Sans', sans-serif;line-height:13px;color:#000">28.0</div></div><div style="position:absolute;left:549px;top:442px;width:44px;height:13px;background:#c5b0b0"><div style="position:absolute;left:0;right:1px;top:0;text-align:right;font:11px 'Liberation Sans', sans-serif;line-height:13px;color:#000">26.0</div></div><div style="position:absolute;left:595px;top:442px;width:44px;height:13px;background:#c0b9b9"><div style="position:absolute;left:0;right:1px;top:0;text-align:right;font:11px 'Liberation Sans', sans-serif;line-height:13px;color:#000">23.0</div></div><div style="position:absolute;left:641px;top:442px;width:44px;height:13px;background:#bfbcbc"><div style="position:absolute;left:0;right:1px;top:0;text-align:right;font:11px 'Liberation Sans', sans-serif;line-height:13px;color:#000">22.0</div></div><div style="position:absolute;left:687px;top:442px;width:44px;height:13px;background:#bac4c4"><div style="position:absolute;left:0;right:1px;top:0;text-align:right;font:11px 'Liberation Sans', sans-serif;line-height:13px;color:#000">19.0</div></div><div style="position:absolute;left:733px;top:442px;width:44px;height:13px;background:#b8c7c7"><div style="position:absolute;left:0;right:1px;top:0;text-align:right;font:11px 'Liberation Sans', sans-serif;line-height:13px;color:#000">18.0</div></div><div style="position:absolute;left:-4px;top:456px;width:45px;height:14px;box-sizing:border-box;border:1px solid #a0a0a0;background:#f0f0f0;overflow:hidden"><div style="position:absolute;left:0px;top:0px;width:43px;height:12px;box-sizing:border-box;border-left:1px solid #fff;border-top:1px solid #fff"></div><div style="position:absolute;left:0;right:1px;top:0;text-align:right;font:11px 'Liberation Sans', sans-serif;line-height:15px;color:#000">1800</div></div><div style="position:absolute;left:43px;top:457px;width:44px;height:13px;background:#d49595"><div style="position:absolute;left:0;right:1px;top:0;text-align:right;font:11px 'Liberation Sans', sans-serif;line-height:13px;color:#000">35.0</div></div><div style="position:absolute;left:89px;top:457px;width:44px;height:13px;background:#db8989"><div style="position:absolute;left:0;right:1px;top:0;text-align:right;font:11px 'Liberation Sans', sans-serif;line-height:13px;color:#000">39.0</div></div><div style="position:absolute;left:135px;top:457px;width:44px;height:13px;background:#db8989"><div style="position:absolute;left:0;right:1px;top:0;text-align:right;font:11px 'Liberation Sans', sans-serif;line-height:13px;color:#000">39.0</div></div><div style="position:absolute;left:181px;top:457px;width:44px;height:13px;background:#db8989"><div style="position:absolute;left:0;right:1px;top:0;text-align:right;font:11px 'Liberation Sans', sans-serif;line-height:13px;color:#000">39.0</div></div><div style="position:absolute;left:227px;top:457px;width:44px;height:13px;background:#d98c8c"><div style="position:absolute;left:0;right:1px;top:0;text-align:right;font:11px 'Liberation Sans', sans-serif;line-height:13px;color:#000">38.0</div></div><div style="position:absolute;left:273px;top:457px;width:44px;height:13px;background:#d98c8c"><div style="position:absolute;left:0;right:1px;top:0;text-align:right;font:11px 'Liberation Sans', sans-serif;line-height:13px;color:#000">38.0</div></div><div style="position:absolute;left:319px;top:457px;width:44px;height:13px;background:#d88f8f"><div style="position:absolute;left:0;right:1px;top:0;text-align:right;font:11px 'Liberation Sans', sans-serif;line-height:13px;color:#000">37.0</div></div><div style="position:absolute;left:365px;top:457px;width:44px;height:13px;background:#d88f8f"><div style="position:absolute;left:0;right:1px;top:0;text-align:right;font:11px 'Liberation Sans', sans-serif;line-height:13px;color:#000">37.0</div></div><div style="position:absolute;left:411px;top:457px;width:44px;height:13px;background:#d49595"><div style="position:absolute;left:0;right:1px;top:0;text-align:right;font:11px 'Liberation Sans', sans-serif;line-height:13px;color:#000">35.0</div></div><div style="position:absolute;left:457px;top:457px;width:44px;height:13px;background:#d19b9b"><div style="position:absolute;left:0;right:1px;top:0;text-align:right;font:11px 'Liberation Sans', sans-serif;line-height:13px;color:#000">33.0</div></div><div style="position:absolute;left:503px;top:457px;width:44px;height:13px;background:#cca4a4"><div style="position:absolute;left:0;right:1px;top:0;text-align:right;font:11px 'Liberation Sans', sans-serif;line-height:13px;color:#000">30.0</div></div><div style="position:absolute;left:549px;top:457px;width:44px;height:13px;background:#caa7a7"><div style="position:absolute;left:0;right:1px;top:0;text-align:right;font:11px 'Liberation Sans', sans-serif;line-height:13px;color:#000">29.0</div></div><div style="position:absolute;left:595px;top:457px;width:44px;height:13px;background:#c5b0b0"><div style="position:absolute;left:0;right:1px;top:0;text-align:right;font:11px 'Liberation Sans', sans-serif;line-height:13px;color:#000">26.0</div></div><div style="position:absolute;left:641px;top:457px;width:44px;height:13px;background:#c2b6b6"><div style="position:absolute;left:0;right:1px;top:0;text-align:right;font:11px 'Liberation Sans', sans-serif;line-height:13px;color:#000">24.0</div></div><div style="position:absolute;left:687px;top:457px;width:44px;height:13px;background:#c0b9b9"><div style="position:absolute;left:0;right:1px;top:0;text-align:right;font:11px 'Liberation Sans', sans-serif;line-height:13px;color:#000">23.0</div></div><div style="position:absolute;left:733px;top:457px;width:44px;height:13px;background:#bdbebe"><div style="position:absolute;left:0;right:1px;top:0;text-align:right;font:11px 'Liberation Sans', sans-serif;line-height:13px;color:#000">21.0</div></div><div style="position:absolute;left:-4px;top:471px;width:45px;height:14px;box-sizing:border-box;border:1px solid #a0a0a0;background:#f0f0f0;overflow:hidden"><div style="position:absolute;left:0px;top:0px;width:43px;height:12px;box-sizing:border-box;border-left:1px solid #fff;border-top:1px solid #fff"></div><div style="position:absolute;left:0;right:1px;top:0;text-align:right;font:11px 'Liberation Sans', sans-serif;line-height:15px;color:#000">2000</div></div><div style="position:absolute;left:43px;top:472px;width:44px;height:13px;background:#d49595"><div style="position:absolute;left:0;right:1px;top:0;text-align:right;font:11px 'Liberation Sans', sans-serif;line-height:13px;color:#000">35.0</div></div><div style="position:absolute;left:89px;top:472px;width:44px;height:13px;background:#db8989"><div style="position:absolute;left:0;right:1px;top:0;text-align:right;font:11px 'Liberation Sans', sans-serif;line-height:13px;color:#000">39.0</div></div><div style="position:absolute;left:135px;top:472px;width:44px;height:13px;background:#dd8686"><div style="position:absolute;left:0;right:1px;top:0;text-align:right;font:11px 'Liberation Sans', sans-serif;line-height:13px;color:#000">40.0</div></div><div style="position:absolute;left:181px;top:472px;width:44px;height:13px;background:#dd8686"><div style="position:absolute;left:0;right:1px;top:0;text-align:right;font:11px 'Liberation Sans', sans-serif;line-height:13px;color:#000">40.0</div></div><div style="position:absolute;left:227px;top:472px;width:44px;height:13px;background:#db8989"><div style="position:absolute;left:0;right:1px;top:0;text-align:right;font:11px 'Liberation Sans', sans-serif;line-height:13px;color:#000">39.0</div></div><div style="position:absolute;left:273px;top:472px;width:44px;height:13px;background:#db8989"><div style="position:absolute;left:0;right:1px;top:0;text-align:right;font:11px 'Liberation Sans', sans-serif;line-height:13px;color:#000">39.0</div></div><div style="position:absolute;left:319px;top:472px;width:44px;height:13px;background:#d98c8c"><div style="position:absolute;left:0;right:1px;top:0;text-align:right;font:11px 'Liberation Sans', sans-serif;line-height:13px;color:#000">38.0</div></div><div style="position:absolute;left:365px;top:472px;width:44px;height:13px;background:#d98c8c"><div style="position:absolute;left:0;right:1px;top:0;text-align:right;font:11px 'Liberation Sans', sans-serif;line-height:13px;color:#000">38.0</div></div><div style="position:absolute;left:411px;top:472px;width:44px;height:13px;background:#d69292"><div style="position:absolute;left:0;right:1px;top:0;text-align:right;font:11px 'Liberation Sans', sans-serif;line-height:13px;color:#000">36.0</div></div><div style="position:absolute;left:457px;top:472px;width:44px;height:13px;background:#d69292"><div style="position:absolute;left:0;right:1px;top:0;text-align:right;font:11px 'Liberation Sans', sans-serif;line-height:13px;color:#000">36.0</div></div><div style="position:absolute;left:503px;top:472px;width:44px;height:13px;background:#d19b9b"><div style="position:absolute;left:0;right:1px;top:0;text-align:right;font:11px 'Liberation Sans', sans-serif;line-height:13px;color:#000">33.0</div></div><div style="position:absolute;left:549px;top:472px;width:44px;height:13px;background:#cf9e9e"><div style="position:absolute;left:0;right:1px;top:0;text-align:right;font:11px 'Liberation Sans', sans-serif;line-height:13px;color:#000">32.0</div></div><div style="position:absolute;left:595px;top:472px;width:44px;height:13px;background:#cca4a4"><div style="position:absolute;left:0;right:1px;top:0;text-align:right;font:11px 'Liberation Sans', sans-serif;line-height:13px;color:#000">30.0</div></div><div style="position:absolute;left:641px;top:472px;width:44px;height:13px;background:#c7adad"><div style="position:absolute;left:0;right:1px;top:0;text-align:right;font:11px 'Liberation Sans', sans-serif;line-height:13px;color:#000">27.0</div></div><div style="position:absolute;left:687px;top:472px;width:44px;height:13px;background:#c5b0b0"><div style="position:absolute;left:0;right:1px;top:0;text-align:right;font:11px 'Liberation Sans', sans-serif;line-height:13px;color:#000">26.0</div></div><div style="position:absolute;left:733px;top:472px;width:44px;height:13px;background:#c2b6b6"><div style="position:absolute;left:0;right:1px;top:0;text-align:right;font:11px 'Liberation Sans', sans-serif;line-height:13px;color:#000">24.0</div></div><div style="position:absolute;left:-4px;top:486px;width:45px;height:14px;box-sizing:border-box;border:1px solid #a0a0a0;background:#f0f0f0;overflow:hidden"><div style="position:absolute;left:0px;top:0px;width:43px;height:12px;box-sizing:border-box;border-left:1px solid #fff;border-top:1px solid #fff"></div><div style="position:absolute;left:0;right:1px;top:0;text-align:right;font:11px 'Liberation Sans', sans-serif;line-height:15px;color:#000">2200</div></div><div style="position:absolute;left:43px;top:487px;width:44px;height:13px;background:#d49595"><div style="position:absolute;left:0;right:1px;top:0;text-align:right;font:11px 'Liberation Sans', sans-serif;line-height:13px;color:#000">35.0</div></div><div style="position:absolute;left:89px;top:487px;width:44px;height:13px;background:#db8989"><div style="position:absolute;left:0;right:1px;top:0;text-align:right;font:11px 'Liberation Sans', sans-serif;line-height:13px;color:#000">39.0</div></div><div style="position:absolute;left:135px;top:487px;width:44px;height:13px;background:#de8383"><div style="position:absolute;left:0;right:1px;top:0;text-align:right;font:11px 'Liberation Sans', sans-serif;line-height:13px;color:#000">41.0</div></div><div style="position:absolute;left:181px;top:487px;width:44px;height:13px;background:#de8383"><div style="position:absolute;left:0;right:1px;top:0;text-align:right;font:11px 'Liberation Sans', sans-serif;line-height:13px;color:#000">41.0</div></div><div style="position:absolute;left:227px;top:487px;width:44px;height:13px;background:#dd8686"><div style="position:absolute;left:0;right:1px;top:0;text-align:right;font:11px 'Liberation Sans', sans-serif;line-height:13px;color:#000">40.0</div></div><div style="position:absolute;left:273px;top:487px;width:44px;height:13px;background:#dd8686"><div style="position:absolute;left:0;right:1px;top:0;text-align:right;font:11px 'Liberation Sans', sans-serif;line-height:13px;color:#000">40.0</div></div><div style="position:absolute;left:319px;top:487px;width:44px;height:13px;background:#d98c8c"><div style="position:absolute;left:0;right:1px;top:0;text-align:right;font:11px 'Liberation Sans', sans-serif;line-height:13px;color:#000">38.0</div></div><div style="position:absolute;left:365px;top:487px;width:44px;height:13px;background:#d98c8c"><div style="position:absolute;left:0;right:1px;top:0;text-align:right;font:11px 'Liberation Sans', sans-serif;line-height:13px;color:#000">38.0</div></div><div style="position:absolute;left:411px;top:487px;width:44px;height:13px;background:#d88f8f"><div style="position:absolute;left:0;right:1px;top:0;text-align:right;font:11px 'Liberation Sans', sans-serif;line-height:13px;color:#000">37.0</div></div><div style="position:absolute;left:457px;top:487px;width:44px;height:13px;background:#d88f8f"><div style="position:absolute;left:0;right:1px;top:0;text-align:right;font:11px 'Liberation Sans', sans-serif;line-height:13px;color:#000">37.0</div></div><div style="position:absolute;left:503px;top:487px;width:44px;height:13px;background:#d49595"><div style="position:absolute;left:0;right:1px;top:0;text-align:right;font:11px 'Liberation Sans', sans-serif;line-height:13px;color:#000">35.0</div></div><div style="position:absolute;left:549px;top:487px;width:44px;height:13px;background:#d39898"><div style="position:absolute;left:0;right:1px;top:0;text-align:right;font:11px 'Liberation Sans', sans-serif;line-height:13px;color:#000">34.0</div></div><div style="position:absolute;left:595px;top:487px;width:44px;height:13px;background:#cf9e9e"><div style="position:absolute;left:0;right:1px;top:0;text-align:right;font:11px 'Liberation Sans', sans-serif;line-height:13px;color:#000">32.0</div></div><div style="position:absolute;left:641px;top:487px;width:44px;height:13px;background:#cca4a4"><div style="position:absolute;left:0;right:1px;top:0;text-align:right;font:11px 'Liberation Sans', sans-serif;line-height:13px;color:#000">30.0</div></div><div style="position:absolute;left:687px;top:487px;width:44px;height:13px;background:#c9aaaa"><div style="position:absolute;left:0;right:1px;top:0;text-align:right;font:11px 'Liberation Sans', sans-serif;line-height:13px;color:#000">28.0</div></div><div style="position:absolute;left:733px;top:487px;width:44px;height:13px;background:#c5b0b0"><div style="position:absolute;left:0;right:1px;top:0;text-align:right;font:11px 'Liberation Sans', sans-serif;line-height:13px;color:#000">26.0</div></div><div style="position:absolute;left:-4px;top:501px;width:45px;height:14px;box-sizing:border-box;border:1px solid #a0a0a0;background:#f0f0f0;overflow:hidden"><div style="position:absolute;left:0px;top:0px;width:43px;height:12px;box-sizing:border-box;border-left:1px solid #fff;border-top:1px solid #fff"></div><div style="position:absolute;left:0;right:1px;top:0;text-align:right;font:11px 'Liberation Sans', sans-serif;line-height:15px;color:#000">2400</div></div><div style="position:absolute;left:43px;top:502px;width:44px;height:13px;background:#d49595"><div style="position:absolute;left:0;right:1px;top:0;text-align:right;font:11px 'Liberation Sans', sans-serif;line-height:13px;color:#000">35.0</div></div><div style="position:absolute;left:89px;top:502px;width:44px;height:13px;background:#db8989"><div style="position:absolute;left:0;right:1px;top:0;text-align:right;font:11px 'Liberation Sans', sans-serif;line-height:13px;color:#000">39.0</div></div><div style="position:absolute;left:135px;top:502px;width:44px;height:13px;background:#de8383"><div style="position:absolute;left:0;right:1px;top:0;text-align:right;font:11px 'Liberation Sans', sans-serif;line-height:13px;color:#000">41.0</div></div><div style="position:absolute;left:181px;top:502px;width:44px;height:13px;background:#de8383"><div style="position:absolute;left:0;right:1px;top:0;text-align:right;font:11px 'Liberation Sans', sans-serif;line-height:13px;color:#000">41.0</div></div><div style="position:absolute;left:227px;top:502px;width:44px;height:13px;background:#de8383"><div style="position:absolute;left:0;right:1px;top:0;text-align:right;font:11px 'Liberation Sans', sans-serif;line-height:13px;color:#000">41.0</div></div><div style="position:absolute;left:273px;top:502px;width:44px;height:13px;background:#dd8686"><div style="position:absolute;left:0;right:1px;top:0;text-align:right;font:11px 'Liberation Sans', sans-serif;line-height:13px;color:#000">40.0</div></div><div style="position:absolute;left:319px;top:502px;width:44px;height:13px;background:#db8989"><div style="position:absolute;left:0;right:1px;top:0;text-align:right;font:11px 'Liberation Sans', sans-serif;line-height:13px;color:#000">39.0</div></div><div style="position:absolute;left:365px;top:502px;width:44px;height:13px;background:#db8989"><div style="position:absolute;left:0;right:1px;top:0;text-align:right;font:11px 'Liberation Sans', sans-serif;line-height:13px;color:#000">39.0</div></div><div style="position:absolute;left:411px;top:502px;width:44px;height:13px;background:#d98c8c"><div style="position:absolute;left:0;right:1px;top:0;text-align:right;font:11px 'Liberation Sans', sans-serif;line-height:13px;color:#000">38.0</div></div><div style="position:absolute;left:457px;top:502px;width:44px;height:13px;background:#d98c8c"><div style="position:absolute;left:0;right:1px;top:0;text-align:right;font:11px 'Liberation Sans', sans-serif;line-height:13px;color:#000">38.0</div></div><div style="position:absolute;left:503px;top:502px;width:44px;height:13px;background:#d88f8f"><div style="position:absolute;left:0;right:1px;top:0;text-align:right;font:11px 'Liberation Sans', sans-serif;line-height:13px;color:#000">37.0</div></div><div style="position:absolute;left:549px;top:502px;width:44px;height:13px;background:#d69292"><div style="position:absolute;left:0;right:1px;top:0;text-align:right;font:11px 'Liberation Sans', sans-serif;line-height:13px;color:#000">36.0</div></div><div style="position:absolute;left:595px;top:502px;width:44px;height:13px;background:#d39898"><div style="position:absolute;left:0;right:1px;top:0;text-align:right;font:11px 'Liberation Sans', sans-serif;line-height:13px;color:#000">34.0</div></div><div style="position:absolute;left:641px;top:502px;width:44px;height:13px;background:#d19b9b"><div style="position:absolute;left:0;right:1px;top:0;text-align:right;font:11px 'Liberation Sans', sans-serif;line-height:13px;color:#000">33.0</div></div><div style="position:absolute;left:687px;top:502px;width:44px;height:13px;background:#cca4a4"><div style="position:absolute;left:0;right:1px;top:0;text-align:right;font:11px 'Liberation Sans', sans-serif;line-height:13px;color:#000">30.0</div></div><div style="position:absolute;left:733px;top:502px;width:44px;height:13px;background:#c9aaaa"><div style="position:absolute;left:0;right:1px;top:0;text-align:right;font:11px 'Liberation Sans', sans-serif;line-height:13px;color:#000">28.0</div></div><div style="position:absolute;left:-4px;top:516px;width:45px;height:14px;box-sizing:border-box;border:1px solid #a0a0a0;background:#f0f0f0;overflow:hidden"><div style="position:absolute;left:0px;top:0px;width:43px;height:12px;box-sizing:border-box;border-left:1px solid #fff;border-top:1px solid #fff"></div><div style="position:absolute;left:0;right:1px;top:0;text-align:right;font:11px 'Liberation Sans', sans-serif;line-height:15px;color:#000">2800</div></div><div style="position:absolute;left:43px;top:517px;width:44px;height:13px;background:#d49595"><div style="position:absolute;left:0;right:1px;top:0;text-align:right;font:11px 'Liberation Sans', sans-serif;line-height:13px;color:#000">35.0</div></div><div style="position:absolute;left:89px;top:517px;width:44px;height:13px;background:#dd8686"><div style="position:absolute;left:0;right:1px;top:0;text-align:right;font:11px 'Liberation Sans', sans-serif;line-height:13px;color:#000">40.0</div></div><div style="position:absolute;left:135px;top:517px;width:44px;height:13px;background:#de8383"><div style="position:absolute;left:0;right:1px;top:0;text-align:right;font:11px 'Liberation Sans', sans-serif;line-height:13px;color:#000">41.0</div></div><div style="position:absolute;left:181px;top:517px;width:44px;height:13px;background:#de8383"><div style="position:absolute;left:0;right:1px;top:0;text-align:right;font:11px 'Liberation Sans', sans-serif;line-height:13px;color:#000">41.0</div></div><div style="position:absolute;left:227px;top:517px;width:44px;height:13px;background:#de8383"><div style="position:absolute;left:0;right:1px;top:0;text-align:right;font:11px 'Liberation Sans', sans-serif;line-height:13px;color:#000">41.0</div></div><div style="position:absolute;left:273px;top:517px;width:44px;height:13px;background:#de8383"><div style="position:absolute;left:0;right:1px;top:0;text-align:right;font:11px 'Liberation Sans', sans-serif;line-height:13px;color:#000">41.0</div></div><div style="position:absolute;left:319px;top:517px;width:44px;height:13px;background:#dd8686"><div style="position:absolute;left:0;right:1px;top:0;text-align:right;font:11px 'Liberation Sans', sans-serif;line-height:13px;color:#000">40.0</div></div><div style="position:absolute;left:365px;top:517px;width:44px;height:13px;background:#dd8686"><div style="position:absolute;left:0;right:1px;top:0;text-align:right;font:11px 'Liberation Sans', sans-serif;line-height:13px;color:#000">40.0</div></div><div style="position:absolute;left:411px;top:517px;width:44px;height:13px;background:#dd8686"><div style="position:absolute;left:0;right:1px;top:0;text-align:right;font:11px 'Liberation Sans', sans-serif;line-height:13px;color:#000">40.0</div></div><div style="position:absolute;left:457px;top:517px;width:44px;height:13px;background:#dd8686"><div style="position:absolute;left:0;right:1px;top:0;text-align:right;font:11px 'Liberation Sans', sans-serif;line-height:13px;color:#000">40.0</div></div><div style="position:absolute;left:503px;top:517px;width:44px;height:13px;background:#d98c8c"><div style="position:absolute;left:0;right:1px;top:0;text-align:right;font:11px 'Liberation Sans', sans-serif;line-height:13px;color:#000">38.0</div></div><div style="position:absolute;left:549px;top:517px;width:44px;height:13px;background:#d98c8c"><div style="position:absolute;left:0;right:1px;top:0;text-align:right;font:11px 'Liberation Sans', sans-serif;line-height:13px;color:#000">38.0</div></div><div style="position:absolute;left:595px;top:517px;width:44px;height:13px;background:#d49595"><div style="position:absolute;left:0;right:1px;top:0;text-align:right;font:11px 'Liberation Sans', sans-serif;line-height:13px;color:#000">35.0</div></div><div style="position:absolute;left:641px;top:517px;width:44px;height:13px;background:#d39898"><div style="position:absolute;left:0;right:1px;top:0;text-align:right;font:11px 'Liberation Sans', sans-serif;line-height:13px;color:#000">34.0</div></div><div style="position:absolute;left:687px;top:517px;width:44px;height:13px;background:#cf9e9e"><div style="position:absolute;left:0;right:1px;top:0;text-align:right;font:11px 'Liberation Sans', sans-serif;line-height:13px;color:#000">32.0</div></div><div style="position:absolute;left:733px;top:517px;width:44px;height:13px;background:#cca4a4"><div style="position:absolute;left:0;right:1px;top:0;text-align:right;font:11px 'Liberation Sans', sans-serif;line-height:13px;color:#000">30.0</div></div><div style="position:absolute;left:-4px;top:531px;width:45px;height:14px;box-sizing:border-box;border:1px solid #a0a0a0;background:#f0f0f0;overflow:hidden"><div style="position:absolute;left:0px;top:0px;width:43px;height:12px;box-sizing:border-box;border-left:1px solid #fff;border-top:1px solid #fff"></div><div style="position:absolute;left:0;right:1px;top:0;text-align:right;font:11px 'Liberation Sans', sans-serif;line-height:15px;color:#000">3200</div></div><div style="position:absolute;left:43px;top:532px;width:44px;height:13px;background:#d49595"><div style="position:absolute;left:0;right:1px;top:0;text-align:right;font:11px 'Liberation Sans', sans-serif;line-height:13px;color:#000">35.0</div></div><div style="position:absolute;left:89px;top:532px;width:44px;height:13px;background:#dd8686"><div style="position:absolute;left:0;right:1px;top:0;text-align:right;font:11px 'Liberation Sans', sans-serif;line-height:13px;color:#000">40.0</div></div><div style="position:absolute;left:135px;top:532px;width:44px;height:13px;background:#e08080"><div style="position:absolute;left:0;right:1px;top:0;text-align:right;font:11px 'Liberation Sans', sans-serif;line-height:13px;color:#000">42.0</div></div><div style="position:absolute;left:181px;top:532px;width:44px;height:13px;background:#e08080"><div style="position:absolute;left:0;right:1px;top:0;text-align:right;font:11px 'Liberation Sans', sans-serif;line-height:13px;color:#000">42.0</div></div><div style="position:absolute;left:227px;top:532px;width:44px;height:13px;background:#e08080"><div style="position:absolute;left:0;right:1px;top:0;text-align:right;font:11px 'Liberation Sans', sans-serif;line-height:13px;color:#000">42.0</div></div><div style="position:absolute;left:273px;top:532px;width:44px;height:13px;background:#e08080"><div style="position:absolute;left:0;right:1px;top:0;text-align:right;font:11px 'Liberation Sans', sans-serif;line-height:13px;color:#000">42.0</div></div><div style="position:absolute;left:319px;top:532px;width:44px;height:13px;background:#e08080"><div style="position:absolute;left:0;right:1px;top:0;text-align:right;font:11px 'Liberation Sans', sans-serif;line-height:13px;color:#000">42.0</div></div><div style="position:absolute;left:365px;top:532px;width:44px;height:13px;background:#de8383"><div style="position:absolute;left:0;right:1px;top:0;text-align:right;font:11px 'Liberation Sans', sans-serif;line-height:13px;color:#000">41.0</div></div><div style="position:absolute;left:411px;top:532px;width:44px;height:13px;background:#de8383"><div style="position:absolute;left:0;right:1px;top:0;text-align:right;font:11px 'Liberation Sans', sans-serif;line-height:13px;color:#000">41.0</div></div><div style="position:absolute;left:457px;top:532px;width:44px;height:13px;background:#dd8686"><div style="position:absolute;left:0;right:1px;top:0;text-align:right;font:11px 'Liberation Sans', sans-serif;line-height:13px;color:#000">40.0</div></div><div style="position:absolute;left:503px;top:532px;width:44px;height:13px;background:#db8989"><div style="position:absolute;left:0;right:1px;top:0;text-align:right;font:11px 'Liberation Sans', sans-serif;line-height:13px;color:#000">39.0</div></div><div style="position:absolute;left:549px;top:532px;width:44px;height:13px;background:#db8989"><div style="position:absolute;left:0;right:1px;top:0;text-align:right;font:11px 'Liberation Sans', sans-serif;line-height:13px;color:#000">39.0</div></div><div style="position:absolute;left:595px;top:532px;width:44px;height:13px;background:#d69292"><div style="position:absolute;left:0;right:1px;top:0;text-align:right;font:11px 'Liberation Sans', sans-serif;line-height:13px;color:#000">36.0</div></div><div style="position:absolute;left:641px;top:532px;width:44px;height:13px;background:#d49595"><div style="position:absolute;left:0;right:1px;top:0;text-align:right;font:11px 'Liberation Sans', sans-serif;line-height:13px;color:#000">35.0</div></div><div style="position:absolute;left:687px;top:532px;width:44px;height:13px;background:#d39898"><div style="position:absolute;left:0;right:1px;top:0;text-align:right;font:11px 'Liberation Sans', sans-serif;line-height:13px;color:#000">34.0</div></div><div style="position:absolute;left:733px;top:532px;width:44px;height:13px;background:#cf9e9e"><div style="position:absolute;left:0;right:1px;top:0;text-align:right;font:11px 'Liberation Sans', sans-serif;line-height:13px;color:#000">32.0</div></div><div style="position:absolute;left:-4px;top:546px;width:45px;height:14px;box-sizing:border-box;border:1px solid #a0a0a0;background:#f0f0f0;overflow:hidden"><div style="position:absolute;left:0px;top:0px;width:43px;height:12px;box-sizing:border-box;border-left:1px solid #fff;border-top:1px solid #fff"></div><div style="position:absolute;left:0;right:1px;top:0;text-align:right;font:11px 'Liberation Sans', sans-serif;line-height:15px;color:#000">3600</div></div><div style="position:absolute;left:43px;top:547px;width:44px;height:13px;background:#d49595"><div style="position:absolute;left:0;right:1px;top:0;text-align:right;font:11px 'Liberation Sans', sans-serif;line-height:13px;color:#000">35.0</div></div><div style="position:absolute;left:89px;top:547px;width:44px;height:13px;background:#dd8686"><div style="position:absolute;left:0;right:1px;top:0;text-align:right;font:11px 'Liberation Sans', sans-serif;line-height:13px;color:#000">40.0</div></div><div style="position:absolute;left:135px;top:547px;width:44px;height:13px;background:#e08080"><div style="position:absolute;left:0;right:1px;top:0;text-align:right;font:11px 'Liberation Sans', sans-serif;line-height:13px;color:#000">42.0</div></div><div style="position:absolute;left:181px;top:547px;width:44px;height:13px;background:#e08080"><div style="position:absolute;left:0;right:1px;top:0;text-align:right;font:11px 'Liberation Sans', sans-serif;line-height:13px;color:#000">42.0</div></div><div style="position:absolute;left:227px;top:547px;width:44px;height:13px;background:#e08080"><div style="position:absolute;left:0;right:1px;top:0;text-align:right;font:11px 'Liberation Sans', sans-serif;line-height:13px;color:#000">42.0</div></div><div style="position:absolute;left:273px;top:547px;width:44px;height:13px;background:#e08080"><div style="position:absolute;left:0;right:1px;top:0;text-align:right;font:11px 'Liberation Sans', sans-serif;line-height:13px;color:#000">42.0</div></div><div style="position:absolute;left:319px;top:547px;width:44px;height:13px;background:#e08080"><div style="position:absolute;left:0;right:1px;top:0;text-align:right;font:11px 'Liberation Sans', sans-serif;line-height:13px;color:#000">42.0</div></div><div style="position:absolute;left:365px;top:547px;width:44px;height:13px;background:#e08080"><div style="position:absolute;left:0;right:1px;top:0;text-align:right;font:11px 'Liberation Sans', sans-serif;line-height:13px;color:#000">42.0</div></div><div style="position:absolute;left:411px;top:547px;width:44px;height:13px;background:#de8383"><div style="position:absolute;left:0;right:1px;top:0;text-align:right;font:11px 'Liberation Sans', sans-serif;line-height:13px;color:#000">41.0</div></div><div style="position:absolute;left:457px;top:547px;width:44px;height:13px;background:#dd8686"><div style="position:absolute;left:0;right:1px;top:0;text-align:right;font:11px 'Liberation Sans', sans-serif;line-height:13px;color:#000">40.0</div></div><div style="position:absolute;left:503px;top:547px;width:44px;height:13px;background:#dd8686"><div style="position:absolute;left:0;right:1px;top:0;text-align:right;font:11px 'Liberation Sans', sans-serif;line-height:13px;color:#000">40.0</div></div><div style="position:absolute;left:549px;top:547px;width:44px;height:13px;background:#db8989"><div style="position:absolute;left:0;right:1px;top:0;text-align:right;font:11px 'Liberation Sans', sans-serif;line-height:13px;color:#000">39.0</div></div><div style="position:absolute;left:595px;top:547px;width:44px;height:13px;background:#d88f8f"><div style="position:absolute;left:0;right:1px;top:0;text-align:right;font:11px 'Liberation Sans', sans-serif;line-height:13px;color:#000">37.0</div></div><div style="position:absolute;left:641px;top:547px;width:44px;height:13px;background:#d69292"><div style="position:absolute;left:0;right:1px;top:0;text-align:right;font:11px 'Liberation Sans', sans-serif;line-height:13px;color:#000">36.0</div></div><div style="position:absolute;left:687px;top:547px;width:44px;height:13px;background:#d49595"><div style="position:absolute;left:0;right:1px;top:0;text-align:right;font:11px 'Liberation Sans', sans-serif;line-height:13px;color:#000">35.0</div></div><div style="position:absolute;left:733px;top:547px;width:44px;height:13px;background:#d49595"><div style="position:absolute;left:0;right:1px;top:0;text-align:right;font:11px 'Liberation Sans', sans-serif;line-height:13px;color:#000">35.0</div></div><div style="position:absolute;left:-4px;top:561px;width:45px;height:14px;box-sizing:border-box;border:1px solid #a0a0a0;background:#f0f0f0;overflow:hidden"><div style="position:absolute;left:0px;top:0px;width:43px;height:12px;box-sizing:border-box;border-left:1px solid #fff;border-top:1px solid #fff"></div><div style="position:absolute;left:0;right:1px;top:0;text-align:right;font:11px 'Liberation Sans', sans-serif;line-height:15px;color:#000">4000</div></div><div style="position:absolute;left:43px;top:562px;width:44px;height:13px;background:#d49595"><div style="position:absolute;left:0;right:1px;top:0;text-align:right;font:11px 'Liberation Sans', sans-serif;line-height:13px;color:#000">35.0</div></div><div style="position:absolute;left:89px;top:562px;width:44px;height:13px;background:#dd8686"><div style="position:absolute;left:0;right:1px;top:0;text-align:right;font:11px 'Liberation Sans', sans-serif;line-height:13px;color:#000">40.0</div></div><div style="position:absolute;left:135px;top:562px;width:44px;height:13px;background:#e08080"><div style="position:absolute;left:0;right:1px;top:0;text-align:right;font:11px 'Liberation Sans', sans-serif;line-height:13px;color:#000">42.0</div></div><div style="position:absolute;left:181px;top:562px;width:44px;height:13px;background:#e08080"><div style="position:absolute;left:0;right:1px;top:0;text-align:right;font:11px 'Liberation Sans', sans-serif;line-height:13px;color:#000">42.0</div></div><div style="position:absolute;left:227px;top:562px;width:44px;height:13px;background:#e08080"><div style="position:absolute;left:0;right:1px;top:0;text-align:right;font:11px 'Liberation Sans', sans-serif;line-height:13px;color:#000">42.0</div></div><div style="position:absolute;left:273px;top:562px;width:44px;height:13px;background:#e08080"><div style="position:absolute;left:0;right:1px;top:0;text-align:right;font:11px 'Liberation Sans', sans-serif;line-height:13px;color:#000">42.0</div></div><div style="position:absolute;left:319px;top:562px;width:44px;height:13px;background:#e08080"><div style="position:absolute;left:0;right:1px;top:0;text-align:right;font:11px 'Liberation Sans', sans-serif;line-height:13px;color:#000">42.0</div></div><div style="position:absolute;left:365px;top:562px;width:44px;height:13px;background:#e08080"><div style="position:absolute;left:0;right:1px;top:0;text-align:right;font:11px 'Liberation Sans', sans-serif;line-height:13px;color:#000">42.0</div></div><div style="position:absolute;left:411px;top:562px;width:44px;height:13px;background:#de8383"><div style="position:absolute;left:0;right:1px;top:0;text-align:right;font:11px 'Liberation Sans', sans-serif;line-height:13px;color:#000">41.0</div></div><div style="position:absolute;left:457px;top:562px;width:44px;height:13px;background:#dd8686"><div style="position:absolute;left:0;right:1px;top:0;text-align:right;font:11px 'Liberation Sans', sans-serif;line-height:13px;color:#000">40.0</div></div><div style="position:absolute;left:503px;top:562px;width:44px;height:13px;background:#dd8686"><div style="position:absolute;left:0;right:1px;top:0;text-align:right;font:11px 'Liberation Sans', sans-serif;line-height:13px;color:#000">40.0</div></div><div style="position:absolute;left:549px;top:562px;width:44px;height:13px;background:#d98c8c"><div style="position:absolute;left:0;right:1px;top:0;text-align:right;font:11px 'Liberation Sans', sans-serif;line-height:13px;color:#000">38.0</div></div><div style="position:absolute;left:595px;top:562px;width:44px;height:13px;background:#d88f8f"><div style="position:absolute;left:0;right:1px;top:0;text-align:right;font:11px 'Liberation Sans', sans-serif;line-height:13px;color:#000">37.0</div></div><div style="position:absolute;left:641px;top:562px;width:44px;height:13px;background:#d69292"><div style="position:absolute;left:0;right:1px;top:0;text-align:right;font:11px 'Liberation Sans', sans-serif;line-height:13px;color:#000">36.0</div></div><div style="position:absolute;left:687px;top:562px;width:44px;height:13px;background:#d49595"><div style="position:absolute;left:0;right:1px;top:0;text-align:right;font:11px 'Liberation Sans', sans-serif;line-height:13px;color:#000">35.0</div></div><div style="position:absolute;left:733px;top:562px;width:44px;height:13px;background:#d49595"><div style="position:absolute;left:0;right:1px;top:0;text-align:right;font:11px 'Liberation Sans', sans-serif;line-height:13px;color:#000">35.0</div></div><div style="position:absolute;left:-6px;top:599px;width:803px;height:23px;background:#f0f0f0"></div><div style="position:absolute;left:-6px;top:599px;width:803px;height:1px;background:#dadada"></div><div style="position:absolute;left:68px;top:601px;width:1px;height:20px;background:#d5d5d5"></div><div style="position:absolute;left:143px;top:601px;width:1px;height:20px;background:#d5d5d5"></div><div style="position:absolute;left:793px;top:612px;width:2px;height:2px;background:#acacac"></div><div style="position:absolute;left:790px;top:615px;width:2px;height:2px;background:#acacac"></div><div style="position:absolute;left:793px;top:615px;width:2px;height:2px;background:#acacac"></div><div style="position:absolute;left:787px;top:618px;width:2px;height:2px;background:#acacac"></div><div style="position:absolute;left:790px;top:618px;width:2px;height:2px;background:#acacac"></div><div style="position:absolute;left:793px;top:618px;width:2px;height:2px;background:#acacac"></div></div></div><div style="position:absolute;left:0;top:0;width:1518px;height:635px;overflow:hidden"><div style="position:absolute;left:807px;top:301px;width:776px;height:338px;box-sizing:border-box;border:1px solid #1e1e1e;border-radius:6px 6px 0 0;background:#b9d1ea;overflow:hidden"><div style="position:absolute;left:0px;top:0px;width:774px;height:336px;box-sizing:border-box;border:1px solid rgba(255,255,255,0.6);border-radius:5px 5px 0 0;background:linear-gradient(#99b4d1,#b9d1ea 29px,#b9d1ea 29px)"></div></div><svg style="position:absolute;left:817px;top:314px" width="16" height="12"><use href="#i-chip"/></svg><div style="position:absolute;left:837px;top:314px;white-space:nowrap;font:12px 'Liberation Sans', sans-serif;color:#000;line-height:14px;letter-spacing:-0.08px">Spark Coolant Temp Correction</div><div style="position:absolute;left:1541px;top:311px;width:32px;height:18px;box-sizing:border-box;border:1px solid #8696ad;border-radius:3px;background:linear-gradient(#cfdbe7,#c6d4e3)"><div style="position:absolute;left:0px;top:0px;width:30px;height:16px;box-sizing:border-box;border:1px solid rgba(255,255,255,0.4);border-radius:2px"></div></div><svg style="position:absolute;left:1550px;top:314px" width="14" height="12"><path d="M3.3 3.2 L9.9 8 M9.9 3.2 L3.3 8" stroke="#3c4450" stroke-width="4.2" stroke-linecap="round"/><path d="M3.3 3.2 L9.9 8 M9.9 3.2 L3.3 8" stroke="#f6f6f6" stroke-width="2.3" stroke-linecap="round"/></svg><div style="position:absolute;left:815px;top:332px;width:760px;height:299px;background:#f0f0f0"></div><div style="position:absolute;left:0;top:0;width:1518px;height:635px;clip-path:inset(332px 0px 4px 815px)"><div style="position:absolute;left:817px;top:334px;width:2px;height:20px;background:#fff"></div><div style="position:absolute;left:819px;top:334px;width:1px;height:21px;background:#a0a0a0"></div><div style="position:absolute;left:817px;top:354px;width:3px;height:1px;background:#a0a0a0"></div><svg style="position:absolute;left:827px;top:337px" width="16" height="16"><use href="#i-save"/></svg><svg style="position:absolute;left:850px;top:337px" width="16" height="16"><use href="#i-del"/></svg><svg style="position:absolute;left:873px;top:337px" width="16" height="16"><use href="#i-graph"/></svg><svg style="position:absolute;left:896px;top:337px" width="17" height="16"><use href="#i-scale"/></svg><svg style="position:absolute;left:919px;top:337px" width="16" height="16"><use href="#i-delta"/></svg><svg style="position:absolute;left:942px;top:337px" width="16" height="16"><use href="#i-gx"/></svg><svg style="position:absolute;left:965px;top:337px" width="16" height="16"><use href="#i-gy"/></svg><svg style="position:absolute;left:988px;top:337px" width="16" height="16"><use href="#i-ga"/></svg><div style="position:absolute;left:1010px;top:334px;width:2px;height:20px;background:#fff"></div><div style="position:absolute;left:1012px;top:334px;width:1px;height:21px;background:#a0a0a0"></div><div style="position:absolute;left:1010px;top:354px;width:3px;height:1px;background:#a0a0a0"></div><div style="position:absolute;left:1022px;top:337px;white-space:nowrap;font:11.5px 'Liberation Sans', sans-serif;color:#000;line-height:14px">Function:</div><div style="position:absolute;left:1071px;top:334px;width:93px;height:21px;box-sizing:border-box;border:1px solid #acacac;background:#e5e5e5"></div><div style="position:absolute;left:1075px;top:338px;white-space:nowrap;font:11.5px 'Liberation Sans', sans-serif;color:#000;line-height:14px">Offset (+/-)</div><svg style="position:absolute;left:1150px;top:342px" width="10" height="6"><path d="M1 1 L5 5 L9 1" stroke="#404040" stroke-width="1.2" fill="none"/></svg><div style="position:absolute;left:1169px;top:337px;white-space:nowrap;font:11.5px 'Liberation Sans', sans-serif;color:#000;line-height:14px">Value:</div><div style="position:absolute;left:1202px;top:334px;width:48px;height:21px;box-sizing:border-box;border:1px solid #7a7a7a;background:#fff"></div><div style="position:absolute;left:1208px;top:337px;white-space:nowrap;font:11.5px 'Liberation Sans', sans-serif;color:#000;line-height:14px">1.0</div><div style="position:absolute;left:1252px;top:335px;width:49px;height:19px;box-sizing:border-box;border:1px solid #adadad;background:#e1e1e1"></div><div style="position:absolute;left:1256px;top:338px;white-space:nowrap;font:11.5px 'Liberation Sans', sans-serif;color:#000;line-height:14px;letter-spacing:-0.2px">Execute</div><div style="position:absolute;left:815px;top:357px;width:760px;height:251px;background:#808080"></div><div style="position:absolute;left:815px;top:357px;width:760px;height:1px;background:#a0a0a0"></div><div style="position:absolute;left:815px;top:358px;width:759px;height:1px;background:#696969"></div><div style="position:absolute;left:815px;top:357px;width:1px;height:251px;background:#a0a0a0"></div><div style="position:absolute;left:816px;top:358px;width:1px;height:250px;background:#696969"></div><div style="position:absolute;left:816px;top:606px;width:759px;height:1px;background:#e3e3e3"></div><div style="position:absolute;left:815px;top:607px;width:760px;height:1px;background:#ffffff"></div><div style="position:absolute;left:1573px;top:358px;width:1px;height:250px;background:#e3e3e3"></div><div style="position:absolute;left:1574px;top:357px;width:1px;height:251px;background:#ffffff"></div><div style="position:absolute;left:817px;top:359px;width:756px;height:16px;background:#fff"></div><div style="position:absolute;left:817px;top:359px;width:755px;height:15px;box-sizing:border-box;border:1px solid #a0a0a0;background:#f0f0f0;overflow:hidden"><div style="position:absolute;left:0px;top:0px;width:753px;height:13px;box-sizing:border-box;border-left:1px solid #fff;border-top:1px solid #fff"></div><div style="position:absolute;left:1px;right:0;top:0;text-align:center;overflow:hidden;font:bold 11px 'Liberation Sans', sans-serif;line-height:15px;padding-top:1px;letter-spacing:0.55px;color:#000;white-space:nowrap">Spark Coolant Temp Correction</div></div><div style="position:absolute;left:817px;top:375px;width:736px;height:15px;background:#fff"></div><div style="position:absolute;left:817px;top:375px;width:45px;height:14px;box-sizing:border-box;border:1px solid #a0a0a0;background:#f0f0f0;overflow:hidden"><div style="position:absolute;left:0px;top:0px;width:43px;height:12px;box-sizing:border-box;border-left:1px solid #fff;border-top:1px solid #fff"></div></div><div style="position:absolute;left:863px;top:375px;width:45px;height:14px;box-sizing:border-box;border:1px solid #a0a0a0;background:#f0f0f0;overflow:hidden"><div style="position:absolute;left:0px;top:0px;width:43px;height:12px;box-sizing:border-box;border-left:1px solid #fff;border-top:1px solid #fff"></div><div style="position:absolute;left:0;right:0;top:1px;text-align:center;font:11px 'Liberation Sans', sans-serif;line-height:15px;color:#000">30</div></div><div style="position:absolute;left:909px;top:375px;width:45px;height:14px;box-sizing:border-box;border:1px solid #a0a0a0;background:#f0f0f0;overflow:hidden"><div style="position:absolute;left:0px;top:0px;width:43px;height:12px;box-sizing:border-box;border-left:1px solid #fff;border-top:1px solid #fff"></div><div style="position:absolute;left:0;right:0;top:1px;text-align:center;font:11px 'Liberation Sans', sans-serif;line-height:15px;color:#000">35</div></div><div style="position:absolute;left:955px;top:375px;width:45px;height:14px;box-sizing:border-box;border:1px solid #a0a0a0;background:#f0f0f0;overflow:hidden"><div style="position:absolute;left:0px;top:0px;width:43px;height:12px;box-sizing:border-box;border-left:1px solid #fff;border-top:1px solid #fff"></div><div style="position:absolute;left:0;right:0;top:1px;text-align:center;font:11px 'Liberation Sans', sans-serif;line-height:15px;color:#000">40</div></div><div style="position:absolute;left:1001px;top:375px;width:45px;height:14px;box-sizing:border-box;border:1px solid #a0a0a0;background:#dcdcdc;overflow:hidden"><div style="position:absolute;left:0px;top:0px;width:43px;height:12px;box-sizing:border-box;border-left:1px solid #fff;border-top:1px solid #fff"></div><div style="position:absolute;left:0;right:0;top:1px;text-align:center;font:11px 'Liberation Sans', sans-serif;line-height:15px;color:#000">45</div></div><div style="position:absolute;left:1047px;top:375px;width:45px;height:14px;box-sizing:border-box;border:1px solid #a0a0a0;background:#f0f0f0;overflow:hidden"><div style="position:absolute;left:0px;top:0px;width:43px;height:12px;box-sizing:border-box;border-left:1px solid #fff;border-top:1px solid #fff"></div><div style="position:absolute;left:0;right:0;top:1px;text-align:center;font:11px 'Liberation Sans', sans-serif;line-height:15px;color:#000">50</div></div><div style="position:absolute;left:1093px;top:375px;width:45px;height:14px;box-sizing:border-box;border:1px solid #a0a0a0;background:#f0f0f0;overflow:hidden"><div style="position:absolute;left:0px;top:0px;width:43px;height:12px;box-sizing:border-box;border-left:1px solid #fff;border-top:1px solid #fff"></div><div style="position:absolute;left:0;right:0;top:1px;text-align:center;font:11px 'Liberation Sans', sans-serif;line-height:15px;color:#000">55</div></div><div style="position:absolute;left:1139px;top:375px;width:45px;height:14px;box-sizing:border-box;border:1px solid #a0a0a0;background:#f0f0f0;overflow:hidden"><div style="position:absolute;left:0px;top:0px;width:43px;height:12px;box-sizing:border-box;border-left:1px solid #fff;border-top:1px solid #fff"></div><div style="position:absolute;left:0;right:0;top:1px;text-align:center;font:11px 'Liberation Sans', sans-serif;line-height:15px;color:#000">60</div></div><div style="position:absolute;left:1185px;top:375px;width:45px;height:14px;box-sizing:border-box;border:1px solid #a0a0a0;background:#f0f0f0;overflow:hidden"><div style="position:absolute;left:0px;top:0px;width:43px;height:12px;box-sizing:border-box;border-left:1px solid #fff;border-top:1px solid #fff"></div><div style="position:absolute;left:0;right:0;top:1px;text-align:center;font:11px 'Liberation Sans', sans-serif;line-height:15px;color:#000">65</div></div><div style="position:absolute;left:1231px;top:375px;width:45px;height:14px;box-sizing:border-box;border:1px solid #a0a0a0;background:#f0f0f0;overflow:hidden"><div style="position:absolute;left:0px;top:0px;width:43px;height:12px;box-sizing:border-box;border-left:1px solid #fff;border-top:1px solid #fff"></div><div style="position:absolute;left:0;right:0;top:1px;text-align:center;font:11px 'Liberation Sans', sans-serif;line-height:15px;color:#000">70</div></div><div style="position:absolute;left:1277px;top:375px;width:45px;height:14px;box-sizing:border-box;border:1px solid #a0a0a0;background:#f0f0f0;overflow:hidden"><div style="position:absolute;left:0px;top:0px;width:43px;height:12px;box-sizing:border-box;border-left:1px solid #fff;border-top:1px solid #fff"></div><div style="position:absolute;left:0;right:0;top:1px;text-align:center;font:11px 'Liberation Sans', sans-serif;line-height:15px;color:#000">75</div></div><div style="position:absolute;left:1323px;top:375px;width:45px;height:14px;box-sizing:border-box;border:1px solid #a0a0a0;background:#f0f0f0;overflow:hidden"><div style="position:absolute;left:0px;top:0px;width:43px;height:12px;box-sizing:border-box;border-left:1px solid #fff;border-top:1px solid #fff"></div><div style="position:absolute;left:0;right:0;top:1px;text-align:center;font:11px 'Liberation Sans', sans-serif;line-height:15px;color:#000">80</div></div><div style="position:absolute;left:1369px;top:375px;width:45px;height:14px;box-sizing:border-box;border:1px solid #a0a0a0;background:#f0f0f0;overflow:hidden"><div style="position:absolute;left:0px;top:0px;width:43px;height:12px;box-sizing:border-box;border-left:1px solid #fff;border-top:1px solid #fff"></div><div style="position:absolute;left:0;right:0;top:1px;text-align:center;font:11px 'Liberation Sans', sans-serif;line-height:15px;color:#000">85</div></div><div style="position:absolute;left:1415px;top:375px;width:45px;height:14px;box-sizing:border-box;border:1px solid #a0a0a0;background:#f0f0f0;overflow:hidden"><div style="position:absolute;left:0px;top:0px;width:43px;height:12px;box-sizing:border-box;border-left:1px solid #fff;border-top:1px solid #fff"></div><div style="position:absolute;left:0;right:0;top:1px;text-align:center;font:11px 'Liberation Sans', sans-serif;line-height:15px;color:#000">90</div></div><div style="position:absolute;left:1461px;top:375px;width:45px;height:14px;box-sizing:border-box;border:1px solid #a0a0a0;background:#f0f0f0;overflow:hidden"><div style="position:absolute;left:0px;top:0px;width:43px;height:12px;box-sizing:border-box;border-left:1px solid #fff;border-top:1px solid #fff"></div><div style="position:absolute;left:0;right:0;top:1px;text-align:center;font:11px 'Liberation Sans', sans-serif;line-height:15px;color:#000">95</div></div><div style="position:absolute;left:1507px;top:375px;width:45px;height:14px;box-sizing:border-box;border:1px solid #a0a0a0;background:#f0f0f0;overflow:hidden"><div style="position:absolute;left:0px;top:0px;width:43px;height:12px;box-sizing:border-box;border-left:1px solid #fff;border-top:1px solid #fff"></div><div style="position:absolute;left:0;right:0;top:1px;text-align:center;font:11px 'Liberation Sans', sans-serif;line-height:15px;color:#000">100</div></div><div style="position:absolute;left:817px;top:390px;width:46px;height:195px;background:#fff"></div><div style="position:absolute;left:863px;top:390px;width:690px;height:195px;background:#e0e0e0"></div><div style="position:absolute;left:817px;top:390px;width:45px;height:14px;box-sizing:border-box;border:1px solid #a0a0a0;background:#f0f0f0;overflow:hidden"><div style="position:absolute;left:0px;top:0px;width:43px;height:12px;box-sizing:border-box;border-left:1px solid #fff;border-top:1px solid #fff"></div><div style="position:absolute;left:0;right:1px;top:0;text-align:right;font:11px 'Liberation Sans', sans-serif;line-height:15px;color:#000">-16</div></div><div style="position:absolute;left:864px;top:391px;width:44px;height:13px;background:#ffffff"><div style="position:absolute;left:0;right:1px;top:0;text-align:right;font:11px 'Liberation Sans', sans-serif;line-height:13px;color:#000">5.0</div></div><div style="position:absolute;left:910px;top:391px;width:44px;height:13px;background:#ffffff"><div style="position:absolute;left:0;right:1px;top:0;text-align:right;font:11px 'Liberation Sans', sans-serif;line-height:13px;color:#000">5.0</div></div><div style="position:absolute;left:956px;top:391px;width:44px;height:13px;background:#ffffff"><div style="position:absolute;left:0;right:1px;top:0;text-align:right;font:11px 'Liberation Sans', sans-serif;line-height:13px;color:#000">5.0</div></div><div style="position:absolute;left:1002px;top:391px;width:44px;height:13px;background:#ffffff"><div style="position:absolute;left:0;right:1px;top:0;text-align:right;font:11px 'Liberation Sans', sans-serif;line-height:13px;color:#000">6.0</div></div><div style="position:absolute;left:1048px;top:391px;width:44px;height:13px;background:#ffffff"><div style="position:absolute;left:0;right:1px;top:0;text-align:right;font:11px 'Liberation Sans', sans-serif;line-height:13px;color:#000">8.0</div></div><div style="position:absolute;left:1094px;top:391px;width:44px;height:13px;background:#ffffff"><div style="position:absolute;left:0;right:1px;top:0;text-align:right;font:11px 'Liberation Sans', sans-serif;line-height:13px;color:#000">8.0</div></div><div style="position:absolute;left:1140px;top:391px;width:44px;height:13px;background:#ffffff"><div style="position:absolute;left:0;right:1px;top:0;text-align:right;font:11px 'Liberation Sans', sans-serif;line-height:13px;color:#000">8.0</div></div><div style="position:absolute;left:1186px;top:391px;width:44px;height:13px;background:#ffffff"><div style="position:absolute;left:0;right:1px;top:0;text-align:right;font:11px 'Liberation Sans', sans-serif;line-height:13px;color:#000">8.0</div></div><div style="position:absolute;left:1232px;top:391px;width:44px;height:13px;background:#ffffff"><div style="position:absolute;left:0;right:1px;top:0;text-align:right;font:11px 'Liberation Sans', sans-serif;line-height:13px;color:#000">8.0</div></div><div style="position:absolute;left:1278px;top:391px;width:44px;height:13px;background:#ffffff"><div style="position:absolute;left:0;right:1px;top:0;text-align:right;font:11px 'Liberation Sans', sans-serif;line-height:13px;color:#000">8.0</div></div><div style="position:absolute;left:1324px;top:391px;width:44px;height:13px;background:#ffffff"><div style="position:absolute;left:0;right:1px;top:0;text-align:right;font:11px 'Liberation Sans', sans-serif;line-height:13px;color:#000">8.0</div></div><div style="position:absolute;left:1370px;top:391px;width:44px;height:13px;background:#ffffff"><div style="position:absolute;left:0;right:1px;top:0;text-align:right;font:11px 'Liberation Sans', sans-serif;line-height:13px;color:#000">8.0</div></div><div style="position:absolute;left:1416px;top:391px;width:44px;height:13px;background:#ffffff"><div style="position:absolute;left:0;right:1px;top:0;text-align:right;font:11px 'Liberation Sans', sans-serif;line-height:13px;color:#000">8.0</div></div><div style="position:absolute;left:1462px;top:391px;width:44px;height:13px;background:#ffffff"><div style="position:absolute;left:0;right:1px;top:0;text-align:right;font:11px 'Liberation Sans', sans-serif;line-height:13px;color:#000">8.0</div></div><div style="position:absolute;left:1508px;top:391px;width:44px;height:13px;background:#ffffff"><div style="position:absolute;left:0;right:1px;top:0;text-align:right;font:11px 'Liberation Sans', sans-serif;line-height:13px;color:#000">8.0</div></div><div style="position:absolute;left:817px;top:405px;width:45px;height:14px;box-sizing:border-box;border:1px solid #a0a0a0;background:#f0f0f0;overflow:hidden"><div style="position:absolute;left:0px;top:0px;width:43px;height:12px;box-sizing:border-box;border-left:1px solid #fff;border-top:1px solid #fff"></div><div style="position:absolute;left:0;right:1px;top:0;text-align:right;font:11px 'Liberation Sans', sans-serif;line-height:15px;color:#000">-4</div></div><div style="position:absolute;left:864px;top:406px;width:44px;height:13px;background:#ffffff"><div style="position:absolute;left:0;right:1px;top:0;text-align:right;font:11px 'Liberation Sans', sans-serif;line-height:13px;color:#000">5.0</div></div><div style="position:absolute;left:910px;top:406px;width:44px;height:13px;background:#ffffff"><div style="position:absolute;left:0;right:1px;top:0;text-align:right;font:11px 'Liberation Sans', sans-serif;line-height:13px;color:#000">5.0</div></div><div style="position:absolute;left:956px;top:406px;width:44px;height:13px;background:#ffffff"><div style="position:absolute;left:0;right:1px;top:0;text-align:right;font:11px 'Liberation Sans', sans-serif;line-height:13px;color:#000">5.0</div></div><div style="position:absolute;left:1002px;top:406px;width:44px;height:13px;background:#ffffff"><div style="position:absolute;left:0;right:1px;top:0;text-align:right;font:11px 'Liberation Sans', sans-serif;line-height:13px;color:#000">6.0</div></div><div style="position:absolute;left:1048px;top:406px;width:44px;height:13px;background:#ffffff"><div style="position:absolute;left:0;right:1px;top:0;text-align:right;font:11px 'Liberation Sans', sans-serif;line-height:13px;color:#000">8.0</div></div><div style="position:absolute;left:1094px;top:406px;width:44px;height:13px;background:#ffffff"><div style="position:absolute;left:0;right:1px;top:0;text-align:right;font:11px 'Liberation Sans', sans-serif;line-height:13px;color:#000">8.0</div></div><div style="position:absolute;left:1140px;top:406px;width:44px;height:13px;background:#ffffff"><div style="position:absolute;left:0;right:1px;top:0;text-align:right;font:11px 'Liberation Sans', sans-serif;line-height:13px;color:#000">8.0</div></div><div style="position:absolute;left:1186px;top:406px;width:44px;height:13px;background:#ffffff"><div style="position:absolute;left:0;right:1px;top:0;text-align:right;font:11px 'Liberation Sans', sans-serif;line-height:13px;color:#000">8.0</div></div><div style="position:absolute;left:1232px;top:406px;width:44px;height:13px;background:#ffffff"><div style="position:absolute;left:0;right:1px;top:0;text-align:right;font:11px 'Liberation Sans', sans-serif;line-height:13px;color:#000">8.0</div></div><div style="position:absolute;left:1278px;top:406px;width:44px;height:13px;background:#ffffff"><div style="position:absolute;left:0;right:1px;top:0;text-align:right;font:11px 'Liberation Sans', sans-serif;line-height:13px;color:#000">8.0</div></div><div style="position:absolute;left:1324px;top:406px;width:44px;height:13px;background:#ffffff"><div style="position:absolute;left:0;right:1px;top:0;text-align:right;font:11px 'Liberation Sans', sans-serif;line-height:13px;color:#000">8.0</div></div><div style="position:absolute;left:1370px;top:406px;width:44px;height:13px;background:#ffffff"><div style="position:absolute;left:0;right:1px;top:0;text-align:right;font:11px 'Liberation Sans', sans-serif;line-height:13px;color:#000">8.0</div></div><div style="position:absolute;left:1416px;top:406px;width:44px;height:13px;background:#ffffff"><div style="position:absolute;left:0;right:1px;top:0;text-align:right;font:11px 'Liberation Sans', sans-serif;line-height:13px;color:#000">8.0</div></div><div style="position:absolute;left:1462px;top:406px;width:44px;height:13px;background:#ffffff"><div style="position:absolute;left:0;right:1px;top:0;text-align:right;font:11px 'Liberation Sans', sans-serif;line-height:13px;color:#000">8.0</div></div><div style="position:absolute;left:1508px;top:406px;width:44px;height:13px;background:#ffffff"><div style="position:absolute;left:0;right:1px;top:0;text-align:right;font:11px 'Liberation Sans', sans-serif;line-height:13px;color:#000">8.0</div></div><div style="position:absolute;left:817px;top:420px;width:45px;height:14px;box-sizing:border-box;border:1px solid #a0a0a0;background:#f0f0f0;overflow:hidden"><div style="position:absolute;left:0px;top:0px;width:43px;height:12px;box-sizing:border-box;border-left:1px solid #fff;border-top:1px solid #fff"></div><div style="position:absolute;left:0;right:1px;top:0;text-align:right;font:11px 'Liberation Sans', sans-serif;line-height:15px;color:#000">8</div></div><div style="position:absolute;left:864px;top:421px;width:44px;height:13px;background:#ffffff"><div style="position:absolute;left:0;right:1px;top:0;text-align:right;font:11px 'Liberation Sans', sans-serif;line-height:13px;color:#000">4.0</div></div><div style="position:absolute;left:910px;top:421px;width:44px;height:13px;background:#ffffff"><div style="position:absolute;left:0;right:1px;top:0;text-align:right;font:11px 'Liberation Sans', sans-serif;line-height:13px;color:#000">4.0</div></div><div style="position:absolute;left:956px;top:421px;width:44px;height:13px;background:#ffffff"><div style="position:absolute;left:0;right:1px;top:0;text-align:right;font:11px 'Liberation Sans', sans-serif;line-height:13px;color:#000">5.0</div></div><div style="position:absolute;left:1002px;top:421px;width:44px;height:13px;background:#ffffff"><div style="position:absolute;left:0;right:1px;top:0;text-align:right;font:11px 'Liberation Sans', sans-serif;line-height:13px;color:#000">5.0</div></div><div style="position:absolute;left:1048px;top:421px;width:44px;height:13px;background:#ffffff"><div style="position:absolute;left:0;right:1px;top:0;text-align:right;font:11px 'Liberation Sans', sans-serif;line-height:13px;color:#000">5.0</div></div><div style="position:absolute;left:1094px;top:421px;width:44px;height:13px;background:#ffffff"><div style="position:absolute;left:0;right:1px;top:0;text-align:right;font:11px 'Liberation Sans', sans-serif;line-height:13px;color:#000">5.0</div></div><div style="position:absolute;left:1140px;top:421px;width:44px;height:13px;background:#ffffff"><div style="position:absolute;left:0;right:1px;top:0;text-align:right;font:11px 'Liberation Sans', sans-serif;line-height:13px;color:#000">5.0</div></div><div style="position:absolute;left:1186px;top:421px;width:44px;height:13px;background:#ffffff"><div style="position:absolute;left:0;right:1px;top:0;text-align:right;font:11px 'Liberation Sans', sans-serif;line-height:13px;color:#000">5.0</div></div><div style="position:absolute;left:1232px;top:421px;width:44px;height:13px;background:#ffffff"><div style="position:absolute;left:0;right:1px;top:0;text-align:right;font:11px 'Liberation Sans', sans-serif;line-height:13px;color:#000">5.0</div></div><div style="position:absolute;left:1278px;top:421px;width:44px;height:13px;background:#ffffff"><div style="position:absolute;left:0;right:1px;top:0;text-align:right;font:11px 'Liberation Sans', sans-serif;line-height:13px;color:#000">5.0</div></div><div style="position:absolute;left:1324px;top:421px;width:44px;height:13px;background:#ffffff"><div style="position:absolute;left:0;right:1px;top:0;text-align:right;font:11px 'Liberation Sans', sans-serif;line-height:13px;color:#000">5.0</div></div><div style="position:absolute;left:1370px;top:421px;width:44px;height:13px;background:#ffffff"><div style="position:absolute;left:0;right:1px;top:0;text-align:right;font:11px 'Liberation Sans', sans-serif;line-height:13px;color:#000">5.0</div></div><div style="position:absolute;left:1416px;top:421px;width:44px;height:13px;background:#ffffff"><div style="position:absolute;left:0;right:1px;top:0;text-align:right;font:11px 'Liberation Sans', sans-serif;line-height:13px;color:#000">5.0</div></div><div style="position:absolute;left:1462px;top:421px;width:44px;height:13px;background:#ffffff"><div style="position:absolute;left:0;right:1px;top:0;text-align:right;font:11px 'Liberation Sans', sans-serif;line-height:13px;color:#000">5.0</div></div><div style="position:absolute;left:1508px;top:421px;width:44px;height:13px;background:#ffffff"><div style="position:absolute;left:0;right:1px;top:0;text-align:right;font:11px 'Liberation Sans', sans-serif;line-height:13px;color:#000">5.0</div></div><div style="position:absolute;left:817px;top:435px;width:45px;height:14px;box-sizing:border-box;border:1px solid #a0a0a0;background:#f0f0f0;overflow:hidden"><div style="position:absolute;left:0px;top:0px;width:43px;height:12px;box-sizing:border-box;border-left:1px solid #fff;border-top:1px solid #fff"></div><div style="position:absolute;left:0;right:1px;top:0;text-align:right;font:11px 'Liberation Sans', sans-serif;line-height:15px;color:#000">20</div></div><div style="position:absolute;left:864px;top:436px;width:44px;height:13px;background:#ffffff"><div style="position:absolute;left:0;right:1px;top:0;text-align:right;font:11px 'Liberation Sans', sans-serif;line-height:13px;color:#000">0.0</div></div><div style="position:absolute;left:910px;top:436px;width:44px;height:13px;background:#ffffff"><div style="position:absolute;left:0;right:1px;top:0;text-align:right;font:11px 'Liberation Sans', sans-serif;line-height:13px;color:#000">0.0</div></div><div style="position:absolute;left:956px;top:436px;width:44px;height:13px;background:#ffffff"><div style="position:absolute;left:0;right:1px;top:0;text-align:right;font:11px 'Liberation Sans', sans-serif;line-height:13px;color:#000">0.0</div></div><div style="position:absolute;left:1002px;top:436px;width:44px;height:13px;background:#ffffff"><div style="position:absolute;left:0;right:1px;top:0;text-align:right;font:11px 'Liberation Sans', sans-serif;line-height:13px;color:#000">0.0</div></div><div style="position:absolute;left:1048px;top:436px;width:44px;height:13px;background:#ffffff"><div style="position:absolute;left:0;right:1px;top:0;text-align:right;font:11px 'Liberation Sans', sans-serif;line-height:13px;color:#000">0.0</div></div><div style="position:absolute;left:1094px;top:436px;width:44px;height:13px;background:#ffffff"><div style="position:absolute;left:0;right:1px;top:0;text-align:right;font:11px 'Liberation Sans', sans-serif;line-height:13px;color:#000">0.0</div></div><div style="position:absolute;left:1140px;top:436px;width:44px;height:13px;background:#ffffff"><div style="position:absolute;left:0;right:1px;top:0;text-align:right;font:11px 'Liberation Sans', sans-serif;line-height:13px;color:#000">0.0</div></div><div style="position:absolute;left:1186px;top:436px;width:44px;height:13px;background:#ffffff"><div style="position:absolute;left:0;right:1px;top:0;text-align:right;font:11px 'Liberation Sans', sans-serif;line-height:13px;color:#000">2.0</div></div><div style="position:absolute;left:1232px;top:436px;width:44px;height:13px;background:#ffffff"><div style="position:absolute;left:0;right:1px;top:0;text-align:right;font:11px 'Liberation Sans', sans-serif;line-height:13px;color:#000">3.0</div></div><div style="position:absolute;left:1278px;top:436px;width:44px;height:13px;background:#ffffff"><div style="position:absolute;left:0;right:1px;top:0;text-align:right;font:11px 'Liberation Sans', sans-serif;line-height:13px;color:#000">3.0</div></div><div style="position:absolute;left:1324px;top:436px;width:44px;height:13px;background:#ffffff"><div style="position:absolute;left:0;right:1px;top:0;text-align:right;font:11px 'Liberation Sans', sans-serif;line-height:13px;color:#000">3.0</div></div><div style="position:absolute;left:1370px;top:436px;width:44px;height:13px;background:#ffffff"><div style="position:absolute;left:0;right:1px;top:0;text-align:right;font:11px 'Liberation Sans', sans-serif;line-height:13px;color:#000">3.0</div></div><div style="position:absolute;left:1416px;top:436px;width:44px;height:13px;background:#ffffff"><div style="position:absolute;left:0;right:1px;top:0;text-align:right;font:11px 'Liberation Sans', sans-serif;line-height:13px;color:#000">3.0</div></div><div style="position:absolute;left:1462px;top:436px;width:44px;height:13px;background:#ffffff"><div style="position:absolute;left:0;right:1px;top:0;text-align:right;font:11px 'Liberation Sans', sans-serif;line-height:13px;color:#000">3.0</div></div><div style="position:absolute;left:1508px;top:436px;width:44px;height:13px;background:#ffffff"><div style="position:absolute;left:0;right:1px;top:0;text-align:right;font:11px 'Liberation Sans', sans-serif;line-height:13px;color:#000">3.0</div></div><div style="position:absolute;left:817px;top:450px;width:45px;height:14px;box-sizing:border-box;border:1px solid #a0a0a0;background:#f0f0f0;overflow:hidden"><div style="position:absolute;left:0px;top:0px;width:43px;height:12px;box-sizing:border-box;border-left:1px solid #fff;border-top:1px solid #fff"></div><div style="position:absolute;left:0;right:1px;top:0;text-align:right;font:11px 'Liberation Sans', sans-serif;line-height:15px;color:#000">32</div></div><div style="position:absolute;left:864px;top:451px;width:44px;height:13px;background:#ffffff"><div style="position:absolute;left:0;right:1px;top:0;text-align:right;font:11px 'Liberation Sans', sans-serif;line-height:13px;color:#000">0.0</div></div><div style="position:absolute;left:910px;top:451px;width:44px;height:13px;background:#ffffff"><div style="position:absolute;left:0;right:1px;top:0;text-align:right;font:11px 'Liberation Sans', sans-serif;line-height:13px;color:#000">0.0</div></div><div style="position:absolute;left:956px;top:451px;width:44px;height:13px;background:#ffffff"><div style="position:absolute;left:0;right:1px;top:0;text-align:right;font:11px 'Liberation Sans', sans-serif;line-height:13px;color:#000">0.0</div></div><div style="position:absolute;left:1002px;top:451px;width:44px;height:13px;background:#ffffff"><div style="position:absolute;left:0;right:1px;top:0;text-align:right;font:11px 'Liberation Sans', sans-serif;line-height:13px;color:#000">0.0</div></div><div style="position:absolute;left:1048px;top:451px;width:44px;height:13px;background:#ffffff"><div style="position:absolute;left:0;right:1px;top:0;text-align:right;font:11px 'Liberation Sans', sans-serif;line-height:13px;color:#000">0.0</div></div><div style="position:absolute;left:1094px;top:451px;width:44px;height:13px;background:#ffffff"><div style="position:absolute;left:0;right:1px;top:0;text-align:right;font:11px 'Liberation Sans', sans-serif;line-height:13px;color:#000">1.0</div></div><div style="position:absolute;left:1140px;top:451px;width:44px;height:13px;background:#ffffff"><div style="position:absolute;left:0;right:1px;top:0;text-align:right;font:11px 'Liberation Sans', sans-serif;line-height:13px;color:#000">1.0</div></div><div style="position:absolute;left:1186px;top:451px;width:44px;height:13px;background:#ffffff"><div style="position:absolute;left:0;right:1px;top:0;text-align:right;font:11px 'Liberation Sans', sans-serif;line-height:13px;color:#000">1.0</div></div><div style="position:absolute;left:1232px;top:451px;width:44px;height:13px;background:#ffffff"><div style="position:absolute;left:0;right:1px;top:0;text-align:right;font:11px 'Liberation Sans', sans-serif;line-height:13px;color:#000">2.0</div></div><div style="position:absolute;left:1278px;top:451px;width:44px;height:13px;background:#ffffff"><div style="position:absolute;left:0;right:1px;top:0;text-align:right;font:11px 'Liberation Sans', sans-serif;line-height:13px;color:#000">2.0</div></div><div style="position:absolute;left:1324px;top:451px;width:44px;height:13px;background:#ffffff"><div style="position:absolute;left:0;right:1px;top:0;text-align:right;font:11px 'Liberation Sans', sans-serif;line-height:13px;color:#000">2.0</div></div><div style="position:absolute;left:1370px;top:451px;width:44px;height:13px;background:#ffffff"><div style="position:absolute;left:0;right:1px;top:0;text-align:right;font:11px 'Liberation Sans', sans-serif;line-height:13px;color:#000">2.0</div></div><div style="position:absolute;left:1416px;top:451px;width:44px;height:13px;background:#ffffff"><div style="position:absolute;left:0;right:1px;top:0;text-align:right;font:11px 'Liberation Sans', sans-serif;line-height:13px;color:#000">2.0</div></div><div style="position:absolute;left:1462px;top:451px;width:44px;height:13px;background:#ffffff"><div style="position:absolute;left:0;right:1px;top:0;text-align:right;font:11px 'Liberation Sans', sans-serif;line-height:13px;color:#000">2.0</div></div><div style="position:absolute;left:1508px;top:451px;width:44px;height:13px;background:#ffffff"><div style="position:absolute;left:0;right:1px;top:0;text-align:right;font:11px 'Liberation Sans', sans-serif;line-height:13px;color:#000">2.0</div></div><div style="position:absolute;left:817px;top:465px;width:45px;height:14px;box-sizing:border-box;border:1px solid #a0a0a0;background:#f0f0f0;overflow:hidden"><div style="position:absolute;left:0px;top:0px;width:43px;height:12px;box-sizing:border-box;border-left:1px solid #fff;border-top:1px solid #fff"></div><div style="position:absolute;left:0;right:1px;top:0;text-align:right;font:11px 'Liberation Sans', sans-serif;line-height:15px;color:#000">44</div></div><div style="position:absolute;left:864px;top:466px;width:44px;height:13px;background:#ffffff"><div style="position:absolute;left:0;right:1px;top:0;text-align:right;font:11px 'Liberation Sans', sans-serif;line-height:13px;color:#000">0.0</div></div><div style="position:absolute;left:910px;top:466px;width:44px;height:13px;background:#ffffff"><div style="position:absolute;left:0;right:1px;top:0;text-align:right;font:11px 'Liberation Sans', sans-serif;line-height:13px;color:#000">0.0</div></div><div style="position:absolute;left:956px;top:466px;width:44px;height:13px;background:#ffffff"><div style="position:absolute;left:0;right:1px;top:0;text-align:right;font:11px 'Liberation Sans', sans-serif;line-height:13px;color:#000">0.0</div></div><div style="position:absolute;left:1002px;top:466px;width:44px;height:13px;background:#ffffff"><div style="position:absolute;left:0;right:1px;top:0;text-align:right;font:11px 'Liberation Sans', sans-serif;line-height:13px;color:#000">0.0</div></div><div style="position:absolute;left:1048px;top:466px;width:44px;height:13px;background:#ffffff"><div style="position:absolute;left:0;right:1px;top:0;text-align:right;font:11px 'Liberation Sans', sans-serif;line-height:13px;color:#000">0.0</div></div><div style="position:absolute;left:1094px;top:466px;width:44px;height:13px;background:#ffffff"><div style="position:absolute;left:0;right:1px;top:0;text-align:right;font:11px 'Liberation Sans', sans-serif;line-height:13px;color:#000">0.0</div></div><div style="position:absolute;left:1140px;top:466px;width:44px;height:13px;background:#ffffff"><div style="position:absolute;left:0;right:1px;top:0;text-align:right;font:11px 'Liberation Sans', sans-serif;line-height:13px;color:#000">0.0</div></div><div style="position:absolute;left:1186px;top:466px;width:44px;height:13px;background:#ffffff"><div style="position:absolute;left:0;right:1px;top:0;text-align:right;font:11px 'Liberation Sans', sans-serif;line-height:13px;color:#000">1.0</div></div><div style="position:absolute;left:1232px;top:466px;width:44px;height:13px;background:#ffffff"><div style="position:absolute;left:0;right:1px;top:0;text-align:right;font:11px 'Liberation Sans', sans-serif;line-height:13px;color:#000">2.0</div></div><div style="position:absolute;left:1278px;top:466px;width:44px;height:13px;background:#ffffff"><div style="position:absolute;left:0;right:1px;top:0;text-align:right;font:11px 'Liberation Sans', sans-serif;line-height:13px;color:#000">2.0</div></div><div style="position:absolute;left:1324px;top:466px;width:44px;height:13px;background:#ffffff"><div style="position:absolute;left:0;right:1px;top:0;text-align:right;font:11px 'Liberation Sans', sans-serif;line-height:13px;color:#000">2.0</div></div><div style="position:absolute;left:1370px;top:466px;width:44px;height:13px;background:#ffffff"><div style="position:absolute;left:0;right:1px;top:0;text-align:right;font:11px 'Liberation Sans', sans-serif;line-height:13px;color:#000">2.0</div></div><div style="position:absolute;left:1416px;top:466px;width:44px;height:13px;background:#ffffff"><div style="position:absolute;left:0;right:1px;top:0;text-align:right;font:11px 'Liberation Sans', sans-serif;line-height:13px;color:#000">2.0</div></div><div style="position:absolute;left:1462px;top:466px;width:44px;height:13px;background:#ffffff"><div style="position:absolute;left:0;right:1px;top:0;text-align:right;font:11px 'Liberation Sans', sans-serif;line-height:13px;color:#000">2.0</div></div><div style="position:absolute;left:1508px;top:466px;width:44px;height:13px;background:#ffffff"><div style="position:absolute;left:0;right:1px;top:0;text-align:right;font:11px 'Liberation Sans', sans-serif;line-height:13px;color:#000">2.0</div></div><div style="position:absolute;left:817px;top:480px;width:45px;height:14px;box-sizing:border-box;border:1px solid #a0a0a0;background:#dcdcdc;overflow:hidden"><div style="position:absolute;left:0px;top:0px;width:43px;height:12px;box-sizing:border-box;border-left:1px solid #fff;border-top:1px solid #fff"></div><div style="position:absolute;left:0;right:1px;top:0;text-align:right;font:11px 'Liberation Sans', sans-serif;line-height:15px;color:#000">56</div></div><div style="position:absolute;left:864px;top:481px;width:44px;height:13px;background:#ffffff"><div style="position:absolute;left:0;right:1px;top:0;text-align:right;font:11px 'Liberation Sans', sans-serif;line-height:13px;color:#000">0.0</div></div><div style="position:absolute;left:910px;top:481px;width:44px;height:13px;background:#ffffff"><div style="position:absolute;left:0;right:1px;top:0;text-align:right;font:11px 'Liberation Sans', sans-serif;line-height:13px;color:#000">0.0</div></div><div style="position:absolute;left:956px;top:481px;width:44px;height:13px;background:#ffffff"><div style="position:absolute;left:0;right:1px;top:0;text-align:right;font:11px 'Liberation Sans', sans-serif;line-height:13px;color:#000">0.0</div></div><div style="position:absolute;left:1001px;top:480px;width:46px;height:15px;box-sizing:border-box;border:1px solid #000;background:#d4d4d4"><div style="position:absolute;left:0;right:1px;top:0;text-align:right;font:11px 'Liberation Sans', sans-serif;line-height:13px;color:#000">0.0</div></div><div style="position:absolute;left:1048px;top:481px;width:44px;height:13px;background:#ffffff"><div style="position:absolute;left:0;right:1px;top:0;text-align:right;font:11px 'Liberation Sans', sans-serif;line-height:13px;color:#000">0.0</div></div><div style="position:absolute;left:1094px;top:481px;width:44px;height:13px;background:#ffffff"><div style="position:absolute;left:0;right:1px;top:0;text-align:right;font:11px 'Liberation Sans', sans-serif;line-height:13px;color:#000">0.0</div></div><div style="position:absolute;left:1140px;top:481px;width:44px;height:13px;background:#ffffff"><div style="position:absolute;left:0;right:1px;top:0;text-align:right;font:11px 'Liberation Sans', sans-serif;line-height:13px;color:#000">0.0</div></div><div style="position:absolute;left:1186px;top:481px;width:44px;height:13px;background:#ffffff"><div style="position:absolute;left:0;right:1px;top:0;text-align:right;font:11px 'Liberation Sans', sans-serif;line-height:13px;color:#000">0.0</div></div><div style="position:absolute;left:1232px;top:481px;width:44px;height:13px;background:#ffffff"><div style="position:absolute;left:0;right:1px;top:0;text-align:right;font:11px 'Liberation Sans', sans-serif;line-height:13px;color:#000">0.0</div></div><div style="position:absolute;left:1278px;top:481px;width:44px;height:13px;background:#ffffff"><div style="position:absolute;left:0;right:1px;top:0;text-align:right;font:11px 'Liberation Sans', sans-serif;line-height:13px;color:#000">0.0</div></div><div style="position:absolute;left:1324px;top:481px;width:44px;height:13px;background:#ffffff"><div style="position:absolute;left:0;right:1px;top:0;text-align:right;font:11px 'Liberation Sans', sans-serif;line-height:13px;color:#000">0.0</div></div><div style="position:absolute;left:1370px;top:481px;width:44px;height:13px;background:#ffffff"><div style="position:absolute;left:0;right:1px;top:0;text-align:right;font:11px 'Liberation Sans', sans-serif;line-height:13px;color:#000">0.0</div></div><div style="position:absolute;left:1416px;top:481px;width:44px;height:13px;background:#ffffff"><div style="position:absolute;left:0;right:1px;top:0;text-align:right;font:11px 'Liberation Sans', sans-serif;line-height:13px;color:#000">0.0</div></div><div style="position:absolute;left:1462px;top:481px;width:44px;height:13px;background:#ffffff"><div style="position:absolute;left:0;right:1px;top:0;text-align:right;font:11px 'Liberation Sans', sans-serif;line-height:13px;color:#000">0.0</div></div><div style="position:absolute;left:1508px;top:481px;width:44px;height:13px;background:#ffffff"><div style="position:absolute;left:0;right:1px;top:0;text-align:right;font:11px 'Liberation Sans', sans-serif;line-height:13px;color:#000">0.0</div></div><div style="position:absolute;left:817px;top:495px;width:45px;height:14px;box-sizing:border-box;border:1px solid #a0a0a0;background:#f0f0f0;overflow:hidden"><div style="position:absolute;left:0px;top:0px;width:43px;height:12px;box-sizing:border-box;border-left:1px solid #fff;border-top:1px solid #fff"></div><div style="position:absolute;left:0;right:1px;top:0;text-align:right;font:11px 'Liberation Sans', sans-serif;line-height:15px;color:#000">68</div></div><div style="position:absolute;left:864px;top:496px;width:44px;height:13px;background:#ffffff"><div style="position:absolute;left:0;right:1px;top:0;text-align:right;font:11px 'Liberation Sans', sans-serif;line-height:13px;color:#000">0.0</div></div><div style="position:absolute;left:910px;top:496px;width:44px;height:13px;background:#ffffff"><div style="position:absolute;left:0;right:1px;top:0;text-align:right;font:11px 'Liberation Sans', sans-serif;line-height:13px;color:#000">0.0</div></div><div style="position:absolute;left:956px;top:496px;width:44px;height:13px;background:#ffffff"><div style="position:absolute;left:0;right:1px;top:0;text-align:right;font:11px 'Liberation Sans', sans-serif;line-height:13px;color:#000">0.0</div></div><div style="position:absolute;left:1002px;top:496px;width:44px;height:13px;background:#ffffff"><div style="position:absolute;left:0;right:1px;top:0;text-align:right;font:11px 'Liberation Sans', sans-serif;line-height:13px;color:#000">0.0</div></div><div style="position:absolute;left:1048px;top:496px;width:44px;height:13px;background:#ffffff"><div style="position:absolute;left:0;right:1px;top:0;text-align:right;font:11px 'Liberation Sans', sans-serif;line-height:13px;color:#000">0.0</div></div><div style="position:absolute;left:1094px;top:496px;width:44px;height:13px;background:#ffffff"><div style="position:absolute;left:0;right:1px;top:0;text-align:right;font:11px 'Liberation Sans', sans-serif;line-height:13px;color:#000">0.0</div></div><div style="position:absolute;left:1140px;top:496px;width:44px;height:13px;background:#ffffff"><div style="position:absolute;left:0;right:1px;top:0;text-align:right;font:11px 'Liberation Sans', sans-serif;line-height:13px;color:#000">0.0</div></div><div style="position:absolute;left:1186px;top:496px;width:44px;height:13px;background:#ffffff"><div style="position:absolute;left:0;right:1px;top:0;text-align:right;font:11px 'Liberation Sans', sans-serif;line-height:13px;color:#000">0.0</div></div><div style="position:absolute;left:1232px;top:496px;width:44px;height:13px;background:#ffffff"><div style="position:absolute;left:0;right:1px;top:0;text-align:right;font:11px 'Liberation Sans', sans-serif;line-height:13px;color:#000">0.0</div></div><div style="position:absolute;left:1278px;top:496px;width:44px;height:13px;background:#ffffff"><div style="position:absolute;left:0;right:1px;top:0;text-align:right;font:11px 'Liberation Sans', sans-serif;line-height:13px;color:#000">0.0</div></div><div style="position:absolute;left:1324px;top:496px;width:44px;height:13px;background:#ffffff"><div style="position:absolute;left:0;right:1px;top:0;text-align:right;font:11px 'Liberation Sans', sans-serif;line-height:13px;color:#000">0.0</div></div><div style="position:absolute;left:1370px;top:496px;width:44px;height:13px;background:#ffffff"><div style="position:absolute;left:0;right:1px;top:0;text-align:right;font:11px 'Liberation Sans', sans-serif;line-height:13px;color:#000">0.0</div></div><div style="position:absolute;left:1416px;top:496px;width:44px;height:13px;background:#ffffff"><div style="position:absolute;left:0;right:1px;top:0;text-align:right;font:11px 'Liberation Sans', sans-serif;line-height:13px;color:#000">0.0</div></div><div style="position:absolute;left:1462px;top:496px;width:44px;height:13px;background:#ffffff"><div style="position:absolute;left:0;right:1px;top:0;text-align:right;font:11px 'Liberation Sans', sans-serif;line-height:13px;color:#000">0.0</div></div><div style="position:absolute;left:1508px;top:496px;width:44px;height:13px;background:#ffffff"><div style="position:absolute;left:0;right:1px;top:0;text-align:right;font:11px 'Liberation Sans', sans-serif;line-height:13px;color:#000">0.0</div></div><div style="position:absolute;left:817px;top:510px;width:45px;height:14px;box-sizing:border-box;border:1px solid #a0a0a0;background:#f0f0f0;overflow:hidden"><div style="position:absolute;left:0px;top:0px;width:43px;height:12px;box-sizing:border-box;border-left:1px solid #fff;border-top:1px solid #fff"></div><div style="position:absolute;left:0;right:1px;top:0;text-align:right;font:11px 'Liberation Sans', sans-serif;line-height:15px;color:#000">80</div></div><div style="position:absolute;left:864px;top:511px;width:44px;height:13px;background:#ffffff"><div style="position:absolute;left:0;right:1px;top:0;text-align:right;font:11px 'Liberation Sans', sans-serif;line-height:13px;color:#000">0.0</div></div><div style="position:absolute;left:910px;top:511px;width:44px;height:13px;background:#ffffff"><div style="position:absolute;left:0;right:1px;top:0;text-align:right;font:11px 'Liberation Sans', sans-serif;line-height:13px;color:#000">0.0</div></div><div style="position:absolute;left:956px;top:511px;width:44px;height:13px;background:#ffffff"><div style="position:absolute;left:0;right:1px;top:0;text-align:right;font:11px 'Liberation Sans', sans-serif;line-height:13px;color:#000">0.0</div></div><div style="position:absolute;left:1002px;top:511px;width:44px;height:13px;background:#ffffff"><div style="position:absolute;left:0;right:1px;top:0;text-align:right;font:11px 'Liberation Sans', sans-serif;line-height:13px;color:#000">0.0</div></div><div style="position:absolute;left:1048px;top:511px;width:44px;height:13px;background:#ffffff"><div style="position:absolute;left:0;right:1px;top:0;text-align:right;font:11px 'Liberation Sans', sans-serif;line-height:13px;color:#000">0.0</div></div><div style="position:absolute;left:1094px;top:511px;width:44px;height:13px;background:#ffffff"><div style="position:absolute;left:0;right:1px;top:0;text-align:right;font:11px 'Liberation Sans', sans-serif;line-height:13px;color:#000">0.0</div></div><div style="position:absolute;left:1140px;top:511px;width:44px;height:13px;background:#ffffff"><div style="position:absolute;left:0;right:1px;top:0;text-align:right;font:11px 'Liberation Sans', sans-serif;line-height:13px;color:#000">0.0</div></div><div style="position:absolute;left:1186px;top:511px;width:44px;height:13px;background:#ffffff"><div style="position:absolute;left:0;right:1px;top:0;text-align:right;font:11px 'Liberation Sans', sans-serif;line-height:13px;color:#000">0.0</div></div><div style="position:absolute;left:1232px;top:511px;width:44px;height:13px;background:#ffffff"><div style="position:absolute;left:0;right:1px;top:0;text-align:right;font:11px 'Liberation Sans', sans-serif;line-height:13px;color:#000">0.0</div></div><div style="position:absolute;left:1278px;top:511px;width:44px;height:13px;background:#ffffff"><div style="position:absolute;left:0;right:1px;top:0;text-align:right;font:11px 'Liberation Sans', sans-serif;line-height:13px;color:#000">0.0</div></div><div style="position:absolute;left:1324px;top:511px;width:44px;height:13px;background:#ffffff"><div style="position:absolute;left:0;right:1px;top:0;text-align:right;font:11px 'Liberation Sans', sans-serif;line-height:13px;color:#000">0.0</div></div><div style="position:absolute;left:1370px;top:511px;width:44px;height:13px;background:#ffffff"><div style="position:absolute;left:0;right:1px;top:0;text-align:right;font:11px 'Liberation Sans', sans-serif;line-height:13px;color:#000">0.0</div></div><div style="position:absolute;left:1416px;top:511px;width:44px;height:13px;background:#ffffff"><div style="position:absolute;left:0;right:1px;top:0;text-align:right;font:11px 'Liberation Sans', sans-serif;line-height:13px;color:#000">0.0</div></div><div style="position:absolute;left:1462px;top:511px;width:44px;height:13px;background:#ffffff"><div style="position:absolute;left:0;right:1px;top:0;text-align:right;font:11px 'Liberation Sans', sans-serif;line-height:13px;color:#000">0.0</div></div><div style="position:absolute;left:1508px;top:511px;width:44px;height:13px;background:#ffffff"><div style="position:absolute;left:0;right:1px;top:0;text-align:right;font:11px 'Liberation Sans', sans-serif;line-height:13px;color:#000">0.0</div></div><div style="position:absolute;left:817px;top:525px;width:45px;height:14px;box-sizing:border-box;border:1px solid #a0a0a0;background:#f0f0f0;overflow:hidden"><div style="position:absolute;left:0px;top:0px;width:43px;height:12px;box-sizing:border-box;border-left:1px solid #fff;border-top:1px solid #fff"></div><div style="position:absolute;left:0;right:1px;top:0;text-align:right;font:11px 'Liberation Sans', sans-serif;line-height:15px;color:#000">92</div></div><div style="position:absolute;left:864px;top:526px;width:44px;height:13px;background:#ffffff"><div style="position:absolute;left:0;right:1px;top:0;text-align:right;font:11px 'Liberation Sans', sans-serif;line-height:13px;color:#000">0.0</div></div><div style="position:absolute;left:910px;top:526px;width:44px;height:13px;background:#ffffff"><div style="position:absolute;left:0;right:1px;top:0;text-align:right;font:11px 'Liberation Sans', sans-serif;line-height:13px;color:#000">0.0</div></div><div style="position:absolute;left:956px;top:526px;width:44px;height:13px;background:#ffffff"><div style="position:absolute;left:0;right:1px;top:0;text-align:right;font:11px 'Liberation Sans', sans-serif;line-height:13px;color:#000">0.0</div></div><div style="position:absolute;left:1002px;top:526px;width:44px;height:13px;background:#ffffff"><div style="position:absolute;left:0;right:1px;top:0;text-align:right;font:11px 'Liberation Sans', sans-serif;line-height:13px;color:#000">0.0</div></div><div style="position:absolute;left:1048px;top:526px;width:44px;height:13px;background:#ffffff"><div style="position:absolute;left:0;right:1px;top:0;text-align:right;font:11px 'Liberation Sans', sans-serif;line-height:13px;color:#000">0.0</div></div><div style="position:absolute;left:1094px;top:526px;width:44px;height:13px;background:#ffffff"><div style="position:absolute;left:0;right:1px;top:0;text-align:right;font:11px 'Liberation Sans', sans-serif;line-height:13px;color:#000">0.0</div></div><div style="position:absolute;left:1140px;top:526px;width:44px;height:13px;background:#ffffff"><div style="position:absolute;left:0;right:1px;top:0;text-align:right;font:11px 'Liberation Sans', sans-serif;line-height:13px;color:#000">0.0</div></div><div style="position:absolute;left:1186px;top:526px;width:44px;height:13px;background:#ffffff"><div style="position:absolute;left:0;right:1px;top:0;text-align:right;font:11px 'Liberation Sans', sans-serif;line-height:13px;color:#000">0.0</div></div><div style="position:absolute;left:1232px;top:526px;width:44px;height:13px;background:#ffffff"><div style="position:absolute;left:0;right:1px;top:0;text-align:right;font:11px 'Liberation Sans', sans-serif;line-height:13px;color:#000">0.0</div></div><div style="position:absolute;left:1278px;top:526px;width:44px;height:13px;background:#ffffff"><div style="position:absolute;left:0;right:1px;top:0;text-align:right;font:11px 'Liberation Sans', sans-serif;line-height:13px;color:#000">0.0</div></div><div style="position:absolute;left:1324px;top:526px;width:44px;height:13px;background:#ffffff"><div style="position:absolute;left:0;right:1px;top:0;text-align:right;font:11px 'Liberation Sans', sans-serif;line-height:13px;color:#000">0.0</div></div><div style="position:absolute;left:1370px;top:526px;width:44px;height:13px;background:#ffffff"><div style="position:absolute;left:0;right:1px;top:0;text-align:right;font:11px 'Liberation Sans', sans-serif;line-height:13px;color:#000">0.0</div></div><div style="position:absolute;left:1416px;top:526px;width:44px;height:13px;background:#ffffff"><div style="position:absolute;left:0;right:1px;top:0;text-align:right;font:11px 'Liberation Sans', sans-serif;line-height:13px;color:#000">0.0</div></div><div style="position:absolute;left:1462px;top:526px;width:44px;height:13px;background:#ffffff"><div style="position:absolute;left:0;right:1px;top:0;text-align:right;font:11px 'Liberation Sans', sans-serif;line-height:13px;color:#000">0.0</div></div><div style="position:absolute;left:1508px;top:526px;width:44px;height:13px;background:#ffffff"><div style="position:absolute;left:0;right:1px;top:0;text-align:right;font:11px 'Liberation Sans', sans-serif;line-height:13px;color:#000">0.0</div></div><div style="position:absolute;left:817px;top:540px;width:45px;height:14px;box-sizing:border-box;border:1px solid #a0a0a0;background:#f0f0f0;overflow:hidden"><div style="position:absolute;left:0px;top:0px;width:43px;height:12px;box-sizing:border-box;border-left:1px solid #fff;border-top:1px solid #fff"></div><div style="position:absolute;left:0;right:1px;top:0;text-align:right;font:11px 'Liberation Sans', sans-serif;line-height:15px;color:#000">104</div></div><div style="position:absolute;left:864px;top:541px;width:44px;height:13px;background:#ffffff"><div style="position:absolute;left:0;right:1px;top:0;text-align:right;font:11px 'Liberation Sans', sans-serif;line-height:13px;color:#000">0.0</div></div><div style="position:absolute;left:910px;top:541px;width:44px;height:13px;background:#ffffff"><div style="position:absolute;left:0;right:1px;top:0;text-align:right;font:11px 'Liberation Sans', sans-serif;line-height:13px;color:#000">0.0</div></div><div style="position:absolute;left:956px;top:541px;width:44px;height:13px;background:#ffffff"><div style="position:absolute;left:0;right:1px;top:0;text-align:right;font:11px 'Liberation Sans', sans-serif;line-height:13px;color:#000">0.0</div></div><div style="position:absolute;left:1002px;top:541px;width:44px;height:13px;background:#ffffff"><div style="position:absolute;left:0;right:1px;top:0;text-align:right;font:11px 'Liberation Sans', sans-serif;line-height:13px;color:#000">0.0</div></div><div style="position:absolute;left:1048px;top:541px;width:44px;height:13px;background:#ffffff"><div style="position:absolute;left:0;right:1px;top:0;text-align:right;font:11px 'Liberation Sans', sans-serif;line-height:13px;color:#000">0.0</div></div><div style="position:absolute;left:1094px;top:541px;width:44px;height:13px;background:#ffffff"><div style="position:absolute;left:0;right:1px;top:0;text-align:right;font:11px 'Liberation Sans', sans-serif;line-height:13px;color:#000">0.0</div></div><div style="position:absolute;left:1140px;top:541px;width:44px;height:13px;background:#ffffff"><div style="position:absolute;left:0;right:1px;top:0;text-align:right;font:11px 'Liberation Sans', sans-serif;line-height:13px;color:#000">0.0</div></div><div style="position:absolute;left:1186px;top:541px;width:44px;height:13px;background:#ffffff"><div style="position:absolute;left:0;right:1px;top:0;text-align:right;font:11px 'Liberation Sans', sans-serif;line-height:13px;color:#000">0.0</div></div><div style="position:absolute;left:1232px;top:541px;width:44px;height:13px;background:#ffffff"><div style="position:absolute;left:0;right:1px;top:0;text-align:right;font:11px 'Liberation Sans', sans-serif;line-height:13px;color:#000">0.0</div></div><div style="position:absolute;left:1278px;top:541px;width:44px;height:13px;background:#ffffff"><div style="position:absolute;left:0;right:1px;top:0;text-align:right;font:11px 'Liberation Sans', sans-serif;line-height:13px;color:#000">0.0</div></div><div style="position:absolute;left:1324px;top:541px;width:44px;height:13px;background:#ffffff"><div style="position:absolute;left:0;right:1px;top:0;text-align:right;font:11px 'Liberation Sans', sans-serif;line-height:13px;color:#000">0.0</div></div><div style="position:absolute;left:1370px;top:541px;width:44px;height:13px;background:#ffffff"><div style="position:absolute;left:0;right:1px;top:0;text-align:right;font:11px 'Liberation Sans', sans-serif;line-height:13px;color:#000">0.0</div></div><div style="position:absolute;left:1416px;top:541px;width:44px;height:13px;background:#ffffff"><div style="position:absolute;left:0;right:1px;top:0;text-align:right;font:11px 'Liberation Sans', sans-serif;line-height:13px;color:#000">0.0</div></div><div style="position:absolute;left:1462px;top:541px;width:44px;height:13px;background:#ffffff"><div style="position:absolute;left:0;right:1px;top:0;text-align:right;font:11px 'Liberation Sans', sans-serif;line-height:13px;color:#000">0.0</div></div><div style="position:absolute;left:1508px;top:541px;width:44px;height:13px;background:#ffffff"><div style="position:absolute;left:0;right:1px;top:0;text-align:right;font:11px 'Liberation Sans', sans-serif;line-height:13px;color:#000">0.0</div></div><div style="position:absolute;left:817px;top:555px;width:45px;height:14px;box-sizing:border-box;border:1px solid #a0a0a0;background:#f0f0f0;overflow:hidden"><div style="position:absolute;left:0px;top:0px;width:43px;height:12px;box-sizing:border-box;border-left:1px solid #fff;border-top:1px solid #fff"></div><div style="position:absolute;left:0;right:1px;top:0;text-align:right;font:11px 'Liberation Sans', sans-serif;line-height:15px;color:#000">116</div></div><div style="position:absolute;left:864px;top:556px;width:44px;height:13px;background:#ffffff"><div style="position:absolute;left:0;right:1px;top:0;text-align:right;font:11px 'Liberation Sans', sans-serif;line-height:13px;color:#000">0.0</div></div><div style="position:absolute;left:910px;top:556px;width:44px;height:13px;background:#ffffff"><div style="position:absolute;left:0;right:1px;top:0;text-align:right;font:11px 'Liberation Sans', sans-serif;line-height:13px;color:#000">0.0</div></div><div style="position:absolute;left:956px;top:556px;width:44px;height:13px;background:#ffffff"><div style="position:absolute;left:0;right:1px;top:0;text-align:right;font:11px 'Liberation Sans', sans-serif;line-height:13px;color:#000">0.0</div></div><div style="position:absolute;left:1002px;top:556px;width:44px;height:13px;background:#ffffff"><div style="position:absolute;left:0;right:1px;top:0;text-align:right;font:11px 'Liberation Sans', sans-serif;line-height:13px;color:#000">0.0</div></div><div style="position:absolute;left:1048px;top:556px;width:44px;height:13px;background:#ffffff"><div style="position:absolute;left:0;right:1px;top:0;text-align:right;font:11px 'Liberation Sans', sans-serif;line-height:13px;color:#000">-3.0</div></div><div style="position:absolute;left:1094px;top:556px;width:44px;height:13px;background:#ffffff"><div style="position:absolute;left:0;right:1px;top:0;text-align:right;font:11px 'Liberation Sans', sans-serif;line-height:13px;color:#000">-3.0</div></div><div style="position:absolute;left:1140px;top:556px;width:44px;height:13px;background:#ffffff"><div style="position:absolute;left:0;right:1px;top:0;text-align:right;font:11px 'Liberation Sans', sans-serif;line-height:13px;color:#000">-4.0</div></div><div style="position:absolute;left:1186px;top:556px;width:44px;height:13px;background:#ffffff"><div style="position:absolute;left:0;right:1px;top:0;text-align:right;font:11px 'Liberation Sans', sans-serif;line-height:13px;color:#000">-5.0</div></div><div style="position:absolute;left:1232px;top:556px;width:44px;height:13px;background:#ffffff"><div style="position:absolute;left:0;right:1px;top:0;text-align:right;font:11px 'Liberation Sans', sans-serif;line-height:13px;color:#000">-5.0</div></div><div style="position:absolute;left:1278px;top:556px;width:44px;height:13px;background:#ffffff"><div style="position:absolute;left:0;right:1px;top:0;text-align:right;font:11px 'Liberation Sans', sans-serif;line-height:13px;color:#000">-5.0</div></div><div style="position:absolute;left:1324px;top:556px;width:44px;height:13px;background:#ffffff"><div style="position:absolute;left:0;right:1px;top:0;text-align:right;font:11px 'Liberation Sans', sans-serif;line-height:13px;color:#000">-5.0</div></div><div style="position:absolute;left:1370px;top:556px;width:44px;height:13px;background:#ffffff"><div style="position:absolute;left:0;right:1px;top:0;text-align:right;font:11px 'Liberation Sans', sans-serif;line-height:13px;color:#000">-5.0</div></div><div style="position:absolute;left:1416px;top:556px;width:44px;height:13px;background:#ffffff"><div style="position:absolute;left:0;right:1px;top:0;text-align:right;font:11px 'Liberation Sans', sans-serif;line-height:13px;color:#000">-5.0</div></div><div style="position:absolute;left:1462px;top:556px;width:44px;height:13px;background:#ffffff"><div style="position:absolute;left:0;right:1px;top:0;text-align:right;font:11px 'Liberation Sans', sans-serif;line-height:13px;color:#000">-5.0</div></div><div style="position:absolute;left:1508px;top:556px;width:44px;height:13px;background:#ffffff"><div style="position:absolute;left:0;right:1px;top:0;text-align:right;font:11px 'Liberation Sans', sans-serif;line-height:13px;color:#000">-5.0</div></div><div style="position:absolute;left:817px;top:570px;width:45px;height:14px;box-sizing:border-box;border:1px solid #a0a0a0;background:#f0f0f0;overflow:hidden"><div style="position:absolute;left:0px;top:0px;width:43px;height:12px;box-sizing:border-box;border-left:1px solid #fff;border-top:1px solid #fff"></div><div style="position:absolute;left:0;right:1px;top:0;text-align:right;font:11px 'Liberation Sans', sans-serif;line-height:15px;color:#000">128</div></div><div style="position:absolute;left:864px;top:571px;width:44px;height:13px;background:#ffffff"><div style="position:absolute;left:0;right:1px;top:0;text-align:right;font:11px 'Liberation Sans', sans-serif;line-height:13px;color:#000">0.0</div></div><div style="position:absolute;left:910px;top:571px;width:44px;height:13px;background:#ffffff"><div style="position:absolute;left:0;right:1px;top:0;text-align:right;font:11px 'Liberation Sans', sans-serif;line-height:13px;color:#000">0.0</div></div><div style="position:absolute;left:956px;top:571px;width:44px;height:13px;background:#ffffff"><div style="position:absolute;left:0;right:1px;top:0;text-align:right;font:11px 'Liberation Sans', sans-serif;line-height:13px;color:#000">0.0</div></div><div style="position:absolute;left:1002px;top:571px;width:44px;height:13px;background:#ffffff"><div style="position:absolute;left:0;right:1px;top:0;text-align:right;font:11px 'Liberation Sans', sans-serif;line-height:13px;color:#000">0.0</div></div><div style="position:absolute;left:1048px;top:571px;width:44px;height:13px;background:#ffffff"><div style="position:absolute;left:0;right:1px;top:0;text-align:right;font:11px 'Liberation Sans', sans-serif;line-height:13px;color:#000">-3.0</div></div><div style="position:absolute;left:1094px;top:571px;width:44px;height:13px;background:#ffffff"><div style="position:absolute;left:0;right:1px;top:0;text-align:right;font:11px 'Liberation Sans', sans-serif;line-height:13px;color:#000">-3.0</div></div><div style="position:absolute;left:1140px;top:571px;width:44px;height:13px;background:#ffffff"><div style="position:absolute;left:0;right:1px;top:0;text-align:right;font:11px 'Liberation Sans', sans-serif;line-height:13px;color:#000">-6.0</div></div><div style="position:absolute;left:1186px;top:571px;width:44px;height:13px;background:#ffffff"><div style="position:absolute;left:0;right:1px;top:0;text-align:right;font:11px 'Liberation Sans', sans-serif;line-height:13px;color:#000">-6.0</div></div><div style="position:absolute;left:1232px;top:571px;width:44px;height:13px;background:#ffffff"><div style="position:absolute;left:0;right:1px;top:0;text-align:right;font:11px 'Liberation Sans', sans-serif;line-height:13px;color:#000">-6.0</div></div><div style="position:absolute;left:1278px;top:571px;width:44px;height:13px;background:#ffffff"><div style="position:absolute;left:0;right:1px;top:0;text-align:right;font:11px 'Liberation Sans', sans-serif;line-height:13px;color:#000">-6.0</div></div><div style="position:absolute;left:1324px;top:571px;width:44px;height:13px;background:#ffffff"><div style="position:absolute;left:0;right:1px;top:0;text-align:right;font:11px 'Liberation Sans', sans-serif;line-height:13px;color:#000">-6.0</div></div><div style="position:absolute;left:1370px;top:571px;width:44px;height:13px;background:#ffffff"><div style="position:absolute;left:0;right:1px;top:0;text-align:right;font:11px 'Liberation Sans', sans-serif;line-height:13px;color:#000">-6.0</div></div><div style="position:absolute;left:1416px;top:571px;width:44px;height:13px;background:#ffffff"><div style="position:absolute;left:0;right:1px;top:0;text-align:right;font:11px 'Liberation Sans', sans-serif;line-height:13px;color:#000">-6.0</div></div><div style="position:absolute;left:1462px;top:571px;width:44px;height:13px;background:#ffffff"><div style="position:absolute;left:0;right:1px;top:0;text-align:right;font:11px 'Liberation Sans', sans-serif;line-height:13px;color:#000">-6.0</div></div><div style="position:absolute;left:1508px;top:571px;width:44px;height:13px;background:#ffffff"><div style="position:absolute;left:0;right:1px;top:0;text-align:right;font:11px 'Liberation Sans', sans-serif;line-height:13px;color:#000">-6.0</div></div><div style="position:absolute;left:815px;top:608px;width:760px;height:23px;background:#f0f0f0"></div><div style="position:absolute;left:815px;top:608px;width:760px;height:1px;background:#dadada"></div><div style="position:absolute;left:889px;top:610px;width:1px;height:20px;background:#d5d5d5"></div><div style="position:absolute;left:964px;top:610px;width:1px;height:20px;background:#d5d5d5"></div><div style="position:absolute;left:969px;top:613px;white-space:nowrap;font:11.5px 'Liberation Sans', sans-serif;color:#000;line-height:14px">Address: 0x1224E, Sel Count: 1, Min: 0.000, Max: 0.000, Avg: 0.000</div></div></div></body></html>
